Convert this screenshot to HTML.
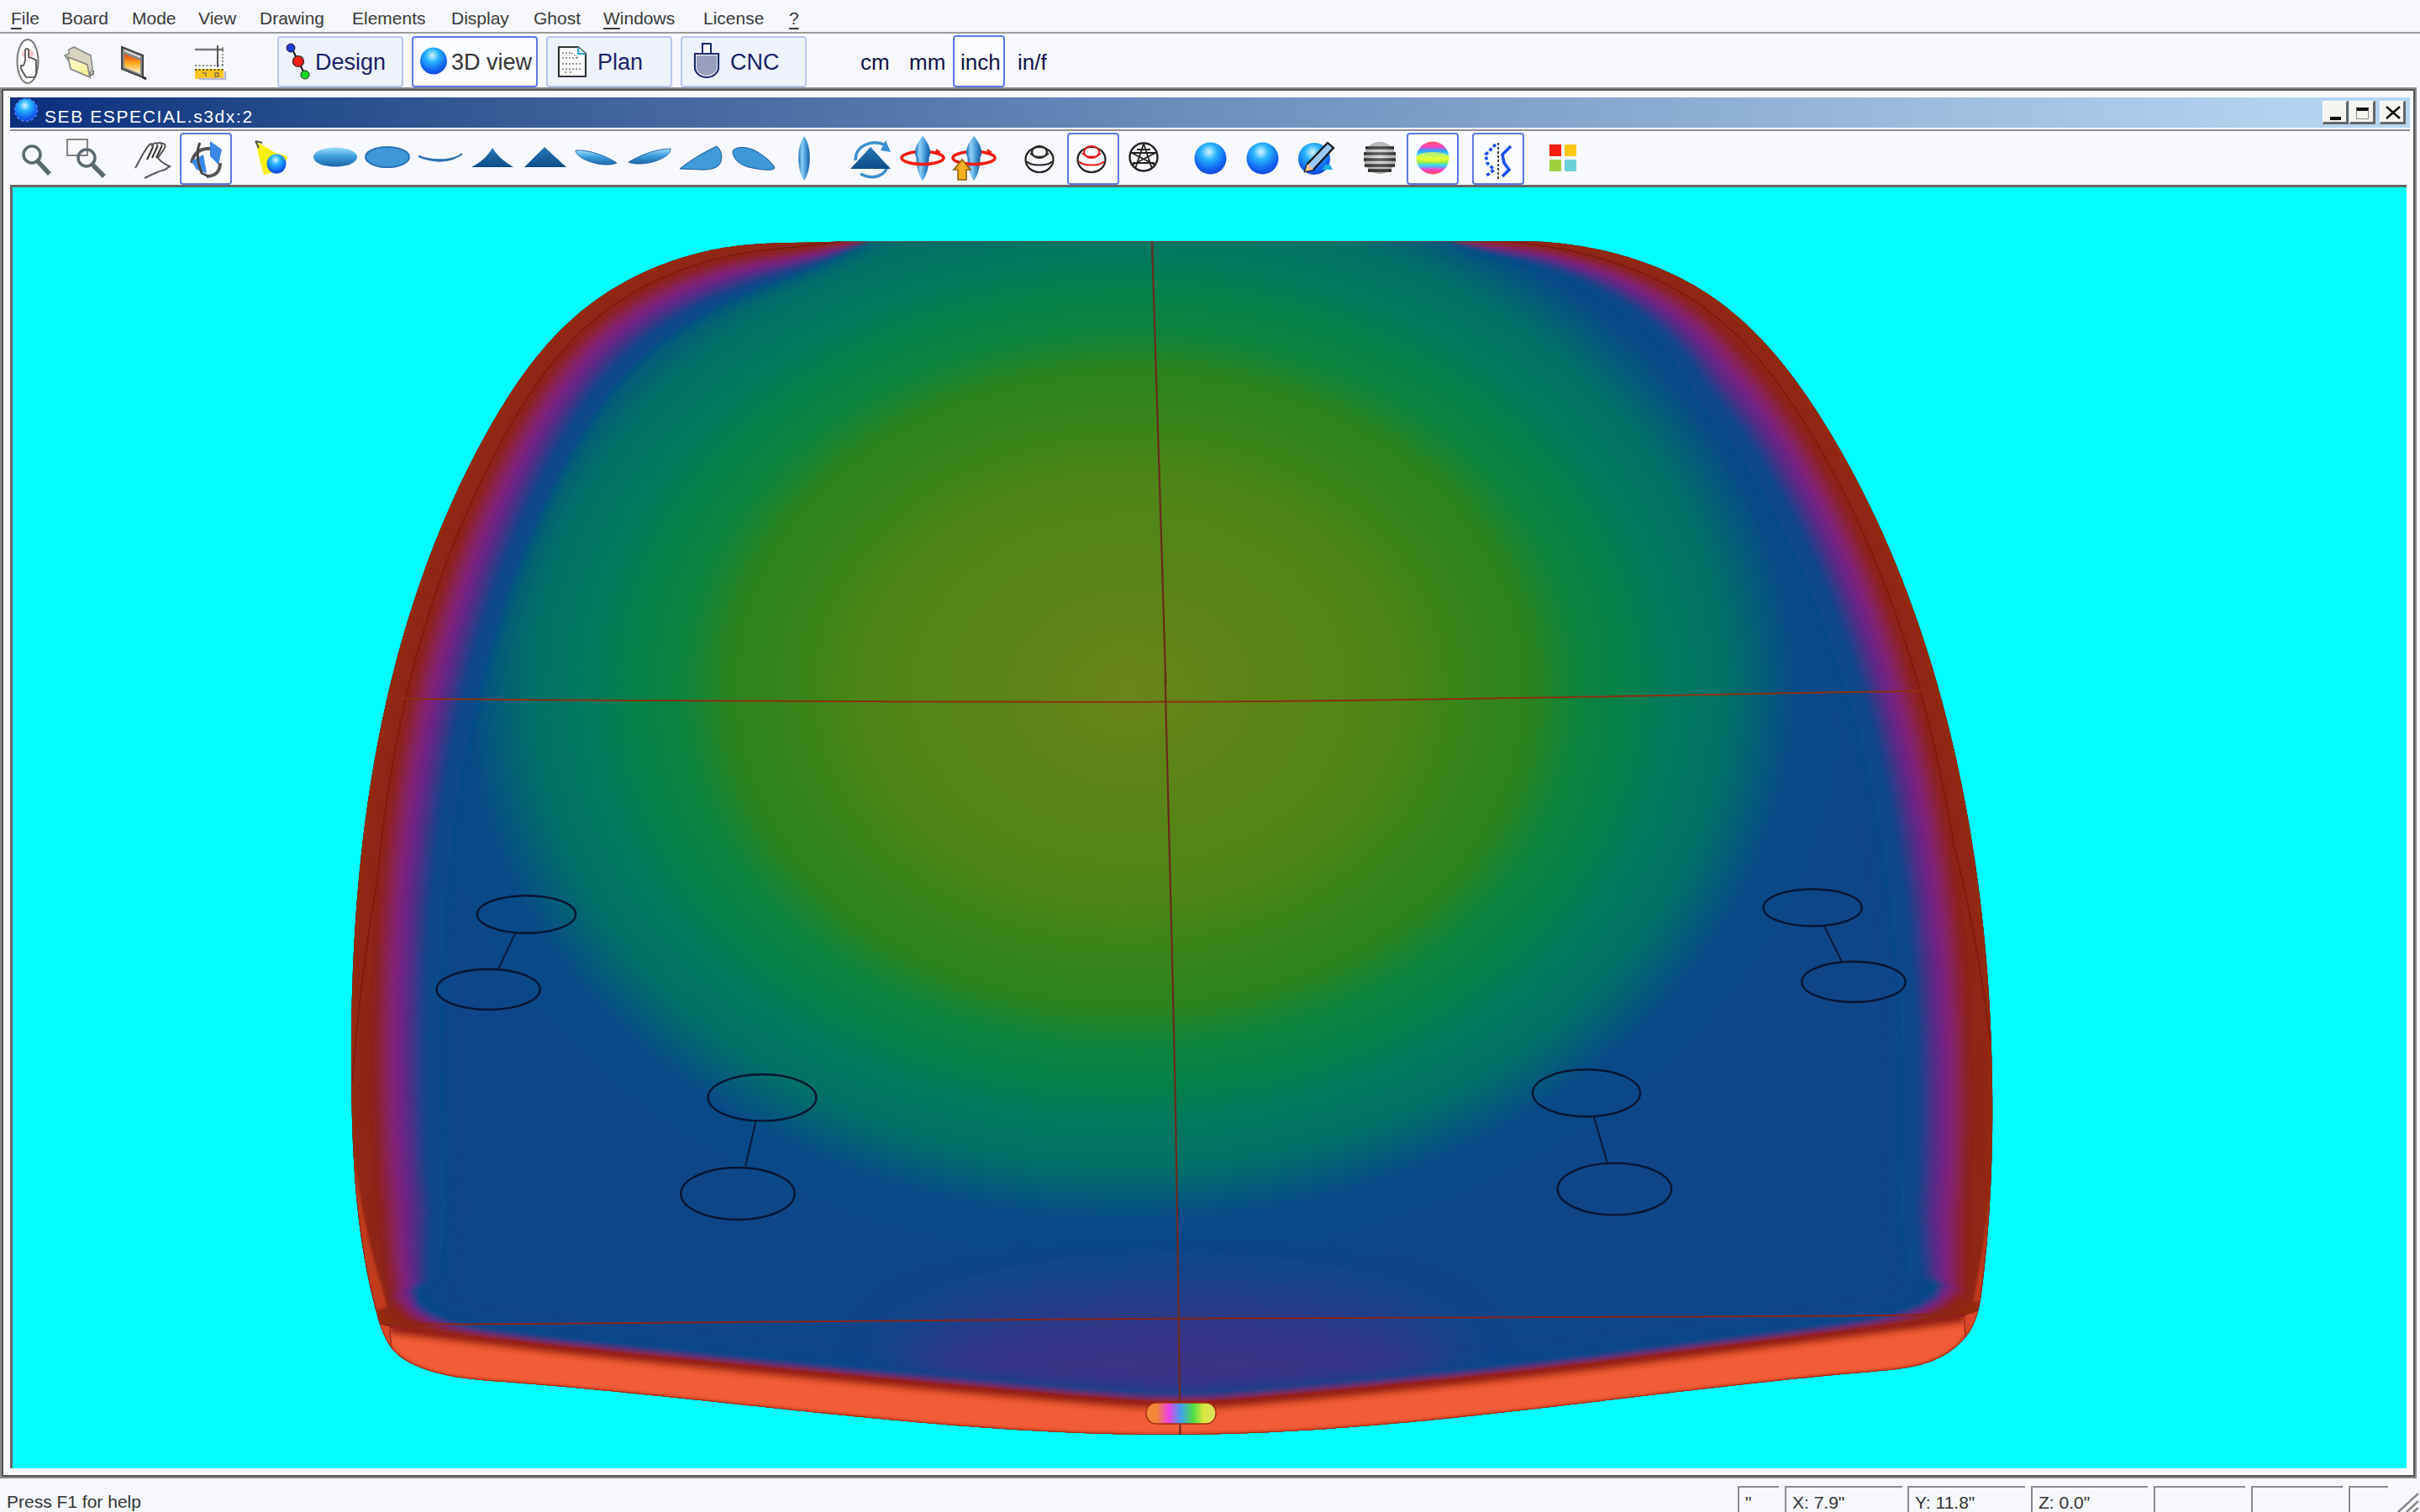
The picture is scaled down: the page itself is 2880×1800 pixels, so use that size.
<!DOCTYPE html>
<html><head><meta charset="utf-8"><style>
html,body{margin:0;padding:0;width:2880px;height:1800px;overflow:hidden;background:#f6f8fc;font-family:"Liberation Sans", sans-serif;}
u{text-decoration:underline;text-underline-offset:4px;text-decoration-thickness:2px}
.btn{position:absolute;box-sizing:border-box;border:2px solid #b8c6f0;border-radius:4px;background:#eef2fb}
.sel{position:absolute;box-sizing:border-box;border:2.5px solid #5a78e8;border-radius:4px;background:#fbfcff}
.wb{position:absolute;top:120px;width:31px;height:28px;box-sizing:border-box;background:#f6f4f0;border:1px solid #fff;border-right:3px solid #666;border-bottom:3px solid #666}
</style></head><body>

<svg width="0" height="0" style="position:absolute"><defs>
<radialGradient id="sph" cx="0.45" cy="0.3" r="0.7"><stop offset="0" stop-color="#d8f4ff"/><stop offset="0.35" stop-color="#28b4ff"/><stop offset="0.8" stop-color="#1060f0"/><stop offset="1" stop-color="#1448d8"/></radialGradient>
<linearGradient id="lens" x1="0" y1="0" x2="1" y2="0"><stop offset="0" stop-color="#1c6ab0"/><stop offset="0.3" stop-color="#8ed0f8"/><stop offset="0.7" stop-color="#3a90d0"/><stop offset="1" stop-color="#1a5a98"/></linearGradient>
<linearGradient id="ell" x1="0" y1="0" x2="0" y2="1"><stop offset="0" stop-color="#9ee0fc"/><stop offset="0.45" stop-color="#3ea0e0"/><stop offset="1" stop-color="#1c64a8"/></linearGradient>
<linearGradient id="tri" x1="0" y1="0" x2="0" y2="1"><stop offset="0" stop-color="#2a78b8"/><stop offset="1" stop-color="#0c4c88"/></linearGradient>
<radialGradient id="gray" cx="0.5" cy="0.45" r="0.6"><stop offset="0" stop-color="#eee"/><stop offset="1" stop-color="#333"/></radialGradient>
<linearGradient id="rainbow" x1="0" y1="0" x2="0" y2="1"><stop offset="0" stop-color="#ff6060"/><stop offset="0.15" stop-color="#ff40c0"/><stop offset="0.28" stop-color="#30a0ff"/><stop offset="0.42" stop-color="#40e0ff"/><stop offset="0.5" stop-color="#e0ff40"/><stop offset="0.62" stop-color="#a0f040"/><stop offset="0.74" stop-color="#30d0ff"/><stop offset="0.86" stop-color="#ff40d0"/><stop offset="1" stop-color="#ff5050"/></linearGradient>
<linearGradient id="fold" x1="0" y1="0" x2="1" y2="1"><stop offset="0" stop-color="#fffdd0"/><stop offset="1" stop-color="#f4ec90"/></linearGradient>
<linearGradient id="fire" x1="0" y1="0" x2="0" y2="1"><stop offset="0" stop-color="#e04010"/><stop offset="0.5" stop-color="#ffb020"/><stop offset="1" stop-color="#fff8e0"/></linearGradient>
</defs></svg>
<div style="position:absolute;left:0;top:38px;width:2880px;height:2px;background:#9a9a9a"></div>
<div style="position:absolute;left:13px;top:11px;font-size:21px;line-height:1;color:#3a3a3a;white-space:nowrap;"><u>F</u>ile</div><div style="position:absolute;left:73px;top:11px;font-size:21px;line-height:1;color:#3a3a3a;white-space:nowrap;">Board</div><div style="position:absolute;left:157px;top:11px;font-size:21px;line-height:1;color:#3a3a3a;white-space:nowrap;">Mode</div><div style="position:absolute;left:236px;top:11px;font-size:21px;line-height:1;color:#3a3a3a;white-space:nowrap;">View</div><div style="position:absolute;left:309px;top:11px;font-size:21px;line-height:1;color:#3a3a3a;white-space:nowrap;">Drawing</div><div style="position:absolute;left:419px;top:11px;font-size:21px;line-height:1;color:#3a3a3a;white-space:nowrap;">Elements</div><div style="position:absolute;left:537px;top:11px;font-size:21px;line-height:1;color:#3a3a3a;white-space:nowrap;">Display</div><div style="position:absolute;left:635px;top:11px;font-size:21px;line-height:1;color:#3a3a3a;white-space:nowrap;">Ghost</div><div style="position:absolute;left:718px;top:11px;font-size:21px;line-height:1;color:#3a3a3a;white-space:nowrap;"><u>W</u>indows</div><div style="position:absolute;left:837px;top:11px;font-size:21px;line-height:1;color:#3a3a3a;white-space:nowrap;">License</div><div style="position:absolute;left:939px;top:11px;font-size:21px;line-height:1;color:#3a3a3a;white-space:nowrap;"><u>?</u></div>
<div class="btn" style="left:330px;top:43px;width:150px;height:61px"></div>
<div class="sel" style="left:490px;top:43px;width:150px;height:61px"></div>
<div class="btn" style="left:650px;top:43px;width:150px;height:61px"></div>
<div class="btn" style="left:810px;top:43px;width:150px;height:61px"></div>
<svg style="position:absolute;left:18px;top:44px;" width="30" height="58" viewBox="0 0 30 58"><ellipse cx="15" cy="29" rx="12.5" ry="26" fill="#fbfbfd" stroke="#777" stroke-width="2"/><ellipse cx="15" cy="20" rx="7" ry="6" fill="#f8c8cc"/><path d="M12,28 v-12 a2,2 0 0 1 4,0 v8 l3,1 3,1 3,2 v16 l-2,4 h-10 l-6,-10 v-4 l3,0z" fill="#fff" stroke="#444" stroke-width="1.6" stroke-linejoin="round"/></svg><svg style="position:absolute;left:74px;top:52px;" width="40" height="42" viewBox="0 0 40 42"><path d="M3,14 L8,12 L8,7 L14,4 L34,14 L36,30 L33,36 L12,26 Z" fill="#d8d4c0" stroke="#888" stroke-width="1.6"/><path d="M7,16 L30,25 L33,40 L10,30 Z" fill="url(#fold)" stroke="#888" stroke-width="1.8"/><path d="M33,38 L37,36 L37,32" fill="none" stroke="#777" stroke-width="2"/></svg><svg style="position:absolute;left:142px;top:52px;" width="34" height="44" viewBox="0 0 34 44"><path d="M3,4 L28,14 L28,40 L3,30 Z" fill="#888" stroke="#444" stroke-width="2"/><path d="M6,12 L25,20 L25,36 L6,28 Z" fill="url(#fire)"/><path d="M6,8 L25,16" stroke="#ddd" stroke-width="2"/><path d="M28,40 L32,42" stroke="#222" stroke-width="3"/></svg><svg style="position:absolute;left:228px;top:52px;" width="42" height="44" viewBox="0 0 42 44"><path d="M4,7 H38" stroke="#777" stroke-width="2.4"/><path d="M31,2 V28" stroke="#555" stroke-width="2"/><path d="M37,4 V28" stroke="#666" stroke-width="1.4" stroke-dasharray="2 2"/><path d="M4,26 H38" stroke="#666" stroke-width="1.6" stroke-dasharray="2 2.5"/><rect x="4" y="30" width="34" height="12" fill="#f8c820"/><path d="M4,31 H38" stroke="#222" stroke-width="1.6" stroke-dasharray="2 2.5"/><path d="M9,42 H40 V33" fill="none" stroke="#b8b8d0" stroke-width="2.5"/><path d="M13,35 h4 v4 M28,35 h4 v4 h-4z" fill="none" stroke="#8a7040" stroke-width="1.5"/></svg><svg style="position:absolute;left:338px;top:50px;" width="32" height="46" viewBox="0 0 32 46"><path d="M9,7 L17,23 L25,39" stroke="#111" stroke-width="2"/><circle cx="8" cy="7" r="5" fill="#1a3ad8" stroke="#222" stroke-width="1"/><circle cx="17" cy="23" r="6.5" fill="#ff2018" stroke="#222" stroke-width="1.2"/><circle cx="25" cy="39" r="5" fill="#18d820" stroke="#222" stroke-width="1"/></svg><svg style="position:absolute;left:499px;top:55px;" width="34" height="35" viewBox="0 0 34 35"><circle cx="17" cy="17.5" r="16" fill="url(#sph)"/></svg><svg style="position:absolute;left:662px;top:52px;" width="38" height="42" viewBox="0 0 38 42"><path d="M3,4 H26 L35,12 V39 H3 Z" fill="#fff" stroke="#333" stroke-width="2.2"/><path d="M26,4 V12 H35" fill="#c8ecf8" stroke="#2aa0d0" stroke-width="1.8"/><path d="M7,11 H17 M18,11 l8,6 M7,17 h18 M7,24 h22 M7,30 h22 M10,34 h3 M16,34 h3" stroke="#777" stroke-width="1.3" stroke-dasharray="2 2"/></svg><svg style="position:absolute;left:824px;top:50px;" width="34" height="44" viewBox="0 0 34 44"><rect x="12" y="2" width="10" height="12" fill="#fff" stroke="#1a2a6a" stroke-width="2"/><path d="M3,14 H31 V30 A14,12 0 0 1 3,30 Z" fill="#fff" stroke="#1a2a6a" stroke-width="2.2"/><path d="M5,16 H29 V30 A12,10 0 0 1 5,30 Z" fill="#1a2a6a" opacity="0.45"/></svg>
<div style="position:absolute;left:375px;top:61px;font-size:27px;line-height:1;color:#1a1f6a;white-space:nowrap;">Design</div>
<div style="position:absolute;left:537px;top:61px;font-size:27px;line-height:1;color:#333;white-space:nowrap;">3D view</div>
<div style="position:absolute;left:711px;top:61px;font-size:27px;line-height:1;color:#1a1f6a;white-space:nowrap;">Plan</div>
<div style="position:absolute;left:869px;top:61px;font-size:27px;line-height:1;color:#1a1f6a;white-space:nowrap;">CNC</div>
<div class="sel" style="left:1134px;top:42px;width:62px;height:62px"></div>
<div style="position:absolute;left:1024px;top:61px;font-size:26px;line-height:1;color:#10104a;white-space:nowrap;">cm</div>
<div style="position:absolute;left:1082px;top:61px;font-size:26px;line-height:1;color:#10104a;white-space:nowrap;">mm</div>
<div style="position:absolute;left:1143px;top:61px;font-size:26px;line-height:1;color:#10104a;white-space:nowrap;">inch</div>
<div style="position:absolute;left:1211px;top:61px;font-size:26px;line-height:1;color:#10104a;white-space:nowrap;">in/f</div>
<div style="position:absolute;left:0;top:104px;width:2876px;height:1656px;box-sizing:border-box;border:2px solid #8a8a8a;background:#f7f9fd"></div>
<div style="position:absolute;left:2px;top:106px;width:2872px;height:1652px;box-sizing:border-box;border:2px solid #555"></div>
<div style="position:absolute;left:12px;top:116px;width:2856px;height:36px;background:linear-gradient(90deg,#0b2e7e 0%,#224a8a 10.8%,#3e629a 24.4%,#6c8fbe 50%,#92b3d7 73.5%,#b2d2ef 94.8%,#b6d6f2 100%)"></div>
<svg style="position:absolute;left:15px;top:116px;" width="34" height="32" viewBox="0 0 34 32"><circle cx="16" cy="15" r="13.5" fill="url(#sph)" stroke="#5a80f0" stroke-width="1.5" stroke-dasharray="3 3"/></svg>
<div style="position:absolute;left:53px;top:128px;font-size:21px;line-height:1;color:#fff;white-space:nowrap;letter-spacing:1.6px">SEB ESPECIAL.s3dx:2</div>
<div class="wb" style="left:2764px"></div><div style="position:absolute;left:2773px;top:139px;width:13px;height:4px;background:#111"></div><div class="wb" style="left:2796px"></div><div style="position:absolute;left:2804px;top:128px;width:15px;height:14px;box-sizing:border-box;border:1.5px solid #888;border-top:4px solid #111"></div><div class="wb" style="left:2832px"></div><svg style="position:absolute;left:2838px;top:125px;" width="20" height="18" viewBox="0 0 20 18"><path d="M2,2 L18,16 M18,2 L2,16" stroke="#111" stroke-width="2.6"/></svg>
<div style="position:absolute;left:12px;top:154px;width:2856px;height:2px;background:#8e8e8e"></div>
<svg style="position:absolute;left:24px;top:168px;" width="38" height="44" viewBox="0 0 38 44"><circle cx="14" cy="16" r="10" fill="none" stroke="#5a6a70" stroke-width="3.5"/><path d="M21,24 L33,37" stroke="#5a6a70" stroke-width="5.5" stroke-linecap="square"/></svg><svg style="position:absolute;left:78px;top:164px;" width="50" height="50" viewBox="0 0 50 50"><rect x="2" y="2" width="24" height="19" fill="none" stroke="#777" stroke-width="1.8"/><circle cx="25" cy="24" r="10" fill="none" stroke="#5a6a70" stroke-width="3.5"/><path d="M32,32 L44,44" stroke="#5a6a70" stroke-width="5.5" stroke-linecap="square"/></svg><svg style="position:absolute;left:158px;top:166px;" width="50" height="50" viewBox="0 0 50 50"><path d="M3,34 C10,22 14,12 20,6 C23,4 25,6 24,9 M22,8 C25,4 28,3 30,6 M28,6 C31,3 34,3 35,6 M33,6 C36,4 40,5 38,10 L30,22 C34,28 40,30 44,32 L38,36 C30,38 22,42 14,46" fill="none" stroke="#555" stroke-width="2"/><path d="M24,9 L17,24 M30,7 L23,22 M35,7 L28,22" stroke="#333" stroke-width="2"/></svg><div class="sel" style="left:214px;top:158px;width:62px;height:62px"></div><svg style="position:absolute;left:222px;top:164px;" width="46" height="50" viewBox="0 0 46 50"><path d="M6,30 C8,20 14,14 24,13 L38,13" fill="none" stroke="#555" stroke-width="4"/><path d="M28,4 L42,14 L38,32 L28,22 Z" fill="#3a88e8"/><path d="M40,30 C40,40 34,46 24,46" fill="none" stroke="#555" stroke-width="4"/><path d="M6,28 L20,20 L24,42 L12,38 Z" fill="#3a88e8"/><path d="M16,6 C12,14 12,28 18,42 L26,46" fill="none" stroke="#444" stroke-width="3"/></svg><svg style="position:absolute;left:298px;top:164px;" width="48" height="48" viewBox="0 0 48 48"><path d="M6,4 L30,18 L44,22 L40,38 L16,44 L12,30 Z" fill="#f8f010"/><path d="M6,4 L10,12 M6,4 L14,6" stroke="#555" stroke-width="2"/><circle cx="31" cy="31" r="11.5" fill="url(#sph)"/></svg><svg style="position:absolute;left:372px;top:174px;" width="58" height="30" viewBox="0 0 58 30"><ellipse cx="27" cy="13" rx="26" ry="11.5" fill="url(#ell)"/></svg><svg style="position:absolute;left:434px;top:174px;" width="58" height="30" viewBox="0 0 58 30"><ellipse cx="27" cy="13" rx="26" ry="12" fill="#3e98d8"/><ellipse cx="27" cy="13" rx="26" ry="12" fill="none" stroke="#2a74b8" stroke-width="2"/></svg><svg style="position:absolute;left:496px;top:180px;" width="58" height="16" viewBox="0 0 58 16"><path d="M2,6 C20,14 40,14 54,3 C44,12 20,12 2,6 Z" fill="#3a8ed0" stroke="#2a70b0" stroke-width="2"/></svg><svg style="position:absolute;left:559px;top:174px;" width="56" height="28" viewBox="0 0 56 28"><path d="M2,25 C16,18 22,10 27,2 C32,10 40,18 52,25 Z" fill="url(#tri)"/></svg><svg style="position:absolute;left:622px;top:173px;" width="56" height="29" viewBox="0 0 56 29"><path d="M2,26 L26,2 L52,26 Z" fill="url(#tri)"/></svg><svg style="position:absolute;left:682px;top:176px;" width="56" height="24" viewBox="0 0 56 24"><path d="M3,3 C20,2 40,10 52,18 C44,22 26,20 14,14 C6,10 3,6 3,3 Z" fill="url(#ell)" stroke="#2a6aa8" stroke-width="1"/></svg><svg style="position:absolute;left:745px;top:175px;" width="56" height="24" viewBox="0 0 56 24"><path d="M53,2 C36,2 16,10 3,18 C12,22 30,20 42,14 C50,10 53,6 53,2 Z" fill="url(#ell)" stroke="#2a6aa8" stroke-width="1"/></svg><svg style="position:absolute;left:806px;top:172px;" width="58" height="34" viewBox="0 0 58 34"><path d="M3,29 C16,18 34,8 47,2 C52,6 54,14 52,20 C50,28 40,30 30,30 Z" fill="#3e9ad8" stroke="#1a5a98" stroke-width="1"/></svg><svg style="position:absolute;left:870px;top:172px;" width="58" height="34" viewBox="0 0 58 34"><path d="M2,8 C4,2 20,2 30,8 C40,14 50,22 52,28 C50,32 36,30 26,28 C12,26 2,18 2,8 Z" fill="#3e98d8" stroke="#1a5a98" stroke-width="1"/></svg><svg style="position:absolute;left:944px;top:160px;" width="28" height="58" viewBox="0 0 28 58"><path d="M13,2 C22,14 22,42 13,55 C4,42 4,14 13,2 Z" fill="url(#lens)"/></svg><svg style="position:absolute;left:1010px;top:163px;" width="56" height="52" viewBox="0 0 56 52"><path d="M8,28 C8,10 28,2 44,10" fill="none" stroke="#3a90d0" stroke-width="3.5"/><path d="M44,4 L50,18 L38,16 Z" fill="#3a90d0"/><path d="M46,34 C44,46 30,52 14,44" fill="none" stroke="#3a90d0" stroke-width="3.5"/><path d="M2,38 L26,12 L50,38 Z" fill="url(#tri)"/></svg><svg style="position:absolute;left:1070px;top:160px;" width="60" height="58" viewBox="0 0 60 58"><path d="M28,2 C38,14 38,42 28,55 C18,42 18,14 28,2 Z" fill="url(#lens)"/><ellipse cx="28" cy="28" rx="25" ry="7.5" fill="none" stroke="#f01c10" stroke-width="3.6"/><path d="M28,2 C38,14 38,22 36,27 L20,27 C18,22 18,14 28,2 Z" fill="url(#lens)"/><path d="M44,17 l6,4 l-7,3z" fill="#f01c10"/></svg><svg style="position:absolute;left:1131px;top:160px;" width="60" height="58" viewBox="0 0 60 58"><path d="M28,2 C38,14 38,42 28,55 C18,42 18,14 28,2 Z" fill="url(#lens)"/><ellipse cx="28" cy="28" rx="25" ry="7.5" fill="none" stroke="#f01c10" stroke-width="3.6"/><path d="M28,2 C38,14 38,22 36,27 L20,27 C18,22 18,14 28,2 Z" fill="url(#lens)"/><path d="M44,17 l6,4 l-7,3z" fill="#f01c10"/><path d="M4,42 L14,30 L24,42 L19,42 L19,54 L9,54 L9,42 Z" fill="#f8b020" stroke="#906010" stroke-width="1.6"/></svg><svg style="position:absolute;left:1218px;top:168px;" width="40" height="40" viewBox="0 0 40 40"><ellipse cx="19" cy="22" rx="16.5" ry="15" fill="none" stroke="#222" stroke-width="2.2"/><ellipse cx="19" cy="13" rx="9" ry="7" fill="none" stroke="#222" stroke-width="2.2"/><path d="M4,24 C8,30 30,30 34,24" fill="none" stroke="#222" stroke-width="2.2"/><path d="M8,14 C10,20 28,20 30,14" fill="none" stroke="#333" stroke-width="1.6"/></svg><div class="sel" style="left:1270px;top:158px;width:62px;height:62px"></div><svg style="position:absolute;left:1280px;top:168px;" width="40" height="40" viewBox="0 0 40 40"><ellipse cx="19" cy="22" rx="16.5" ry="15" fill="none" stroke="#222" stroke-width="2.2"/><ellipse cx="19" cy="13" rx="9" ry="7" fill="none" stroke="#e81818" stroke-width="2"/><path d="M4,24 C8,30 30,30 34,24" fill="none" stroke="#e81818" stroke-width="2"/><path d="M8,14 C10,20 28,20 30,14" fill="none" stroke="#e81818" stroke-width="1.6"/></svg><svg style="position:absolute;left:1342px;top:168px;" width="40" height="40" viewBox="0 0 40 40"><circle cx="19" cy="19" r="16.5" fill="none" stroke="#222" stroke-width="2.4"/><path d="M4,14 H34 M6,26 H32 M19,3 L9,33 M19,3 L29,33 M5,14 L32,28 M33,14 L6,28 M11,10 L27,10" stroke="#222" stroke-width="1.8" fill="none"/></svg><svg style="position:absolute;left:1420px;top:168px;" width="42" height="42" viewBox="0 0 42 42"><circle cx="20.5" cy="20.5" r="19" fill="url(#sph)"/></svg><svg style="position:absolute;left:1482px;top:168px;" width="42" height="42" viewBox="0 0 42 42"><circle cx="20.5" cy="20.5" r="19" fill="url(#sph)"/></svg><svg style="position:absolute;left:1543px;top:164px;" width="50" height="46" viewBox="0 0 50 46"><circle cx="21" cy="25" r="19" fill="url(#sph)"/><path d="M37,6 L44,12 L20,38 L10,40 L13,31 Z" fill="#9ac8f8" stroke="#111" stroke-width="2.2"/><path d="M13,31 L20,38 L10,40Z" fill="#f8c898"/><path d="M18,38 h12 l4,-6 h6 l3,6 h-25z" fill="#1ab0e0"/></svg><svg style="position:absolute;left:1621px;top:166px;" width="44" height="45" viewBox="0 0 44 45"><circle cx="21" cy="22" r="19" fill="#ddd"/><path d="M4,10 H38 M2,17 H40 M2,24 H40 M3,31 H39 M7,37 H35" stroke="#222" stroke-width="3.6"/><circle cx="21" cy="22" r="19" fill="url(#gray)" opacity="0.35"/></svg><div class="sel" style="left:1674px;top:158px;width:62px;height:62px"></div><svg style="position:absolute;left:1683px;top:166px;" width="44" height="44" viewBox="0 0 44 44"><circle cx="22" cy="22" r="19.5" fill="url(#rainbow)"/><ellipse cx="22" cy="21" rx="19.5" ry="6" fill="#e8ff30" opacity="0.7"/></svg><div class="sel" style="left:1752px;top:158px;width:62px;height:62px"></div><svg style="position:absolute;left:1760px;top:168px;" width="46" height="46" viewBox="0 0 46 46"><path d="M20,4 L8,16 L10,26 L18,34 L8,42" fill="none" stroke="#1a50e8" stroke-width="3.6" stroke-dasharray="4 2.5"/><path d="M23,2 V46" stroke="#111" stroke-width="1.6" stroke-dasharray="3 2"/><path d="M38,6 L28,16 L30,26 L36,34 L28,42" fill="none" stroke="#1a50e8" stroke-width="3.6"/></svg><div style="position:absolute;left:1844px;top:172px;width:14px;height:14px;background:#f81c10"></div><div style="position:absolute;left:1862px;top:172px;width:14px;height:14px;background:#fcc818"></div><div style="position:absolute;left:1844px;top:190px;width:14px;height:14px;background:#a0d040"></div><div style="position:absolute;left:1862px;top:190px;width:14px;height:14px;background:#6cd0d8"></div>
<div style="position:absolute;left:12px;top:220px;width:2852px;height:1528px;box-sizing:border-box;border-left:3px solid #666;border-top:3px solid #666"></div>


<svg width="2880" height="1800" viewBox="0 0 2880 1800" style="position:absolute;left:0;top:0" xmlns="http://www.w3.org/2000/svg">
<defs>
 <clipPath id="vp"><rect x="15" y="223" width="2849" height="1525"/></clipPath>
 <clipPath id="bc"><path d="M1790.0,287.2L1793.0,287.1 1795.9,287.0 1798.9,287.0 1801.8,287.0 1804.8,286.9 1807.8,286.9 1810.8,287.0 1813.7,287.0 1816.7,287.1 1819.7,287.2 1822.7,287.3 1825.7,287.4 1828.7,287.5 1831.7,287.7 1834.7,287.8 1837.7,288.0 1840.7,288.3 1843.7,288.5 1846.7,288.7 1849.7,289.0 1852.7,289.3 1855.7,289.6 1858.7,289.9 1861.7,290.3 1864.7,290.7 1867.7,291.1 1870.7,291.5 1873.7,291.9 1876.7,292.4 1879.7,292.8 1882.7,293.3 1885.7,293.8 1888.6,294.4 1891.6,294.9 1894.6,295.5 1897.6,296.1 1900.5,296.7 1903.5,297.3 1906.5,298.0 1909.4,298.6 1912.4,299.3 1915.3,300.0 1918.3,300.8 1921.2,301.5 1924.1,302.3 1927.0,303.1 1930.0,303.9 1932.9,304.7 1935.8,305.6 1938.7,306.5 1941.6,307.4 1944.4,308.3 1947.3,309.2 1950.2,310.2 1953.0,311.2 1955.9,312.2 1958.7,313.2 1961.5,314.2 1964.3,315.3 1967.2,316.4 1970.0,317.5 1972.7,318.6 1975.5,319.8 1978.3,321.0 1981.0,322.2 1983.8,323.4 1986.5,324.6 1989.2,325.9 1991.9,327.1 1994.6,328.4 1997.3,329.8 2000.0,331.1 2002.7,332.5 2005.3,333.9 2007.9,335.3 2010.5,336.7 2013.1,338.2 2015.7,339.6 2018.3,341.1 2020.9,342.7 2023.4,344.2 2025.9,345.8 2028.4,347.4 2030.9,349.0 2033.4,350.6 2035.9,352.3 2038.3,353.9 2040.8,355.6 2043.2,357.4 2045.6,359.1 2048.0,360.9 2050.3,362.6 2052.7,364.4 2055.0,366.3 2057.3,368.1 2059.6,370.0 2061.9,371.9 2064.2,373.8 2066.5,375.7 2068.7,377.6 2070.9,379.6 2073.1,381.6 2075.3,383.6 2077.5,385.6 2079.7,387.6 2081.9,389.7 2084.0,391.7 2086.1,393.8 2088.2,395.9 2090.3,398.0 2092.4,400.2 2094.5,402.3 2096.6,404.5 2098.6,406.7 2100.6,408.8 2102.7,411.1 2104.7,413.3 2106.7,415.5 2108.6,417.8 2110.6,420.0 2112.6,422.3 2114.5,424.6 2116.5,426.9 2118.4,429.2 2120.3,431.6 2122.2,433.9 2124.1,436.2 2125.9,438.6 2127.8,441.0 2129.6,443.4 2131.5,445.8 2133.3,448.2 2135.1,450.6 2136.9,453.0 2138.7,455.5 2140.5,457.9 2142.3,460.4 2144.0,462.9 2145.8,465.3 2147.5,467.8 2149.2,470.3 2151.0,472.8 2152.7,475.3 2154.4,477.9 2156.1,480.4 2157.7,482.9 2159.4,485.4 2161.1,488.0 2162.7,490.5 2164.4,493.1 2166.0,495.7 2167.6,498.2 2169.2,500.8 2170.8,503.4 2172.4,506.0 2174.0,508.6 2175.6,511.2 2177.2,513.8 2178.7,516.4 2180.3,519.0 2181.8,521.6 2183.4,524.2 2184.9,526.8 2186.4,529.4 2188.0,532.0 2189.5,534.7 2191.0,537.3 2192.5,539.9 2193.9,542.6 2195.4,545.2 2196.9,547.8 2198.4,550.5 2199.8,553.1 2201.3,555.8 2202.7,558.4 2204.1,561.1 2205.5,563.7 2207.0,566.4 2208.4,569.1 2209.8,571.7 2211.2,574.4 2212.5,577.1 2213.9,579.7 2215.3,582.4 2216.7,585.1 2218.0,587.8 2219.4,590.5 2220.7,593.2 2222.0,595.8 2223.4,598.5 2224.7,601.2 2226.0,603.9 2227.3,606.6 2228.6,609.4 2229.9,612.1 2231.2,614.8 2232.5,617.5 2233.7,620.2 2235.0,622.9 2236.2,625.6 2237.5,628.4 2238.7,631.1 2240.0,633.8 2241.2,636.6 2242.4,639.3 2243.6,642.0 2244.8,644.8 2246.0,647.5 2247.2,650.3 2248.4,653.0 2249.6,655.8 2250.7,658.5 2251.9,661.3 2253.1,664.0 2254.2,666.8 2255.4,669.6 2256.5,672.3 2257.6,675.1 2258.7,677.9 2259.9,680.7 2261.0,683.4 2262.1,686.2 2263.2,689.0 2264.3,691.8 2265.3,694.6 2266.4,697.4 2267.5,700.2 2268.6,702.9 2269.6,705.7 2270.7,708.5 2271.7,711.3 2272.7,714.2 2273.8,717.0 2274.8,719.8 2275.8,722.6 2276.8,725.4 2277.8,728.2 2278.8,731.0 2279.8,733.8 2280.8,736.7 2281.8,739.5 2282.8,742.3 2283.7,745.1 2284.7,748.0 2285.7,750.8 2286.6,753.6 2287.6,756.5 2288.5,759.3 2289.4,762.2 2290.4,765.0 2291.3,767.9 2292.2,770.7 2293.1,773.6 2294.0,776.4 2294.9,779.3 2295.8,782.1 2296.7,785.0 2297.5,787.8 2298.4,790.7 2299.3,793.6 2300.1,796.4 2301.0,799.3 2301.8,802.2 2302.7,805.1 2303.5,807.9 2304.4,810.8 2305.2,813.7 2306.0,816.6 2306.8,819.5 2307.6,822.3 2308.4,825.2 2309.2,828.1 2310.0,831.0 2310.8,833.9 2311.6,836.8 2312.4,839.7 2313.1,842.6 2313.9,845.5 2314.7,848.4 2315.4,851.3 2316.2,854.2 2316.9,857.1 2317.6,860.0 2318.4,862.9 2319.1,865.8 2319.8,868.8 2320.5,871.7 2321.2,874.6 2321.9,877.5 2322.6,880.4 2323.3,883.3 2324.0,886.3 2324.7,889.2 2325.4,892.1 2326.0,895.1 2326.7,898.0 2327.4,900.9 2328.0,903.8 2328.7,906.8 2329.3,909.7 2329.9,912.6 2330.6,915.6 2331.2,918.5 2331.8,921.5 2332.4,924.4 2333.0,927.4 2333.7,930.3 2334.3,933.2 2334.9,936.2 2335.4,939.1 2336.0,942.1 2336.6,945.0 2337.2,948.0 2337.7,950.9 2338.3,953.9 2338.9,956.9 2339.4,959.8 2340.0,962.8 2340.5,965.7 2341.1,968.7 2341.6,971.7 2342.1,974.6 2342.6,977.6 2343.1,980.5 2343.7,983.5 2344.2,986.5 2344.7,989.4 2345.2,992.4 2345.7,995.4 2346.1,998.4 2346.6,1001.3 2347.1,1004.3 2347.6,1007.3 2348.0,1010.2 2348.5,1013.2 2349.0,1016.2 2349.4,1019.2 2349.9,1022.2 2350.3,1025.1 2350.7,1028.1 2351.2,1031.1 2351.6,1034.1 2352.0,1037.1 2352.4,1040.0 2352.8,1043.0 2353.3,1046.0 2353.7,1049.0 2354.1,1052.0 2354.4,1055.0 2354.8,1058.0 2355.2,1060.9 2355.6,1063.9 2356.0,1066.9 2356.3,1069.9 2356.7,1072.9 2357.1,1075.9 2357.4,1078.9 2357.8,1081.9 2358.1,1084.9 2358.4,1087.9 2358.8,1090.8 2359.1,1093.8 2359.4,1096.8 2359.8,1099.8 2360.1,1102.8 2360.4,1105.8 2360.7,1108.8 2361.0,1111.8 2361.3,1114.8 2361.6,1117.8 2361.9,1120.8 2362.2,1123.8 2362.4,1126.8 2362.7,1129.8 2363.0,1132.8 2363.2,1135.8 2363.5,1138.8 2363.8,1141.8 2364.0,1144.8 2364.3,1147.8 2364.5,1150.8 2364.7,1153.8 2365.0,1156.8 2365.2,1159.8 2365.4,1162.8 2365.6,1165.8 2365.9,1168.8 2366.1,1171.8 2366.3,1174.8 2366.5,1177.8 2366.7,1180.8 2366.9,1183.8 2367.1,1186.8 2367.2,1189.8 2367.4,1192.8 2367.6,1195.8 2367.8,1198.8 2367.9,1201.8 2368.1,1204.8 2368.3,1207.8 2368.4,1210.8 2368.6,1213.8 2368.7,1216.8 2368.9,1219.8 2369.0,1222.8 2369.1,1225.8 2369.3,1228.8 2369.4,1231.8 2369.5,1234.8 2369.6,1237.8 2369.7,1240.8 2369.8,1243.8 2369.9,1246.8 2370.0,1249.8 2370.1,1252.8 2370.2,1255.7 2370.3,1258.7 2370.4,1261.7 2370.5,1264.7 2370.6,1267.7 2370.6,1270.7 2370.7,1273.7 2370.8,1276.7 2370.8,1279.7 2370.9,1282.7 2370.9,1285.7 2371.0,1288.7 2371.0,1291.7 2371.0,1294.6 2371.1,1297.6 2371.1,1300.6 2371.1,1303.6 2371.2,1306.6 2371.2,1309.6 2371.2,1312.6 2371.2,1315.6 2371.2,1318.5 2371.2,1321.5 2371.2,1324.5 2371.2,1327.5 2371.2,1330.5 2371.2,1333.5 2371.2,1336.4 2371.1,1339.4 2371.1,1342.4 2371.1,1345.4 2371.0,1348.4 2371.0,1351.4 2370.9,1354.3 2370.9,1357.3 2370.8,1360.3 2370.8,1363.3 2370.7,1366.3 2370.6,1369.3 2370.6,1372.2 2370.5,1375.2 2370.4,1378.2 2370.3,1381.2 2370.2,1384.2 2370.1,1387.2 2370.0,1390.2 2369.9,1393.1 2369.8,1396.1 2369.7,1399.1 2369.6,1402.1 2369.4,1405.1 2369.3,1408.1 2369.2,1411.1 2369.0,1414.1 2368.9,1417.1 2368.7,1420.1 2368.5,1423.1 2368.4,1426.1 2368.2,1429.1 2368.0,1432.1 2367.9,1435.1 2367.7,1438.1 2367.5,1441.1 2367.3,1444.1 2367.1,1447.1 2366.9,1450.1 2366.6,1453.1 2366.4,1456.1 2366.2,1459.1 2366.0,1462.1 2365.7,1465.2 2365.5,1468.2 2365.2,1471.2 2365.0,1474.2 2364.7,1477.2 2364.5,1480.3 2364.2,1483.3 2363.9,1486.3 2363.6,1489.3 2363.3,1492.4 2363.0,1495.4 2362.7,1498.4 2362.4,1501.5 2362.1,1504.5 2361.8,1507.6 2361.5,1510.6 2361.1,1513.7 2360.8,1516.7 2360.4,1519.8 2360.1,1522.8 2359.7,1525.9 2359.4,1528.9 2359.0,1532.0 2358.6,1535.1 2358.2,1538.1 2357.8,1541.2 2357.3,1544.2 2356.9,1547.2 2356.3,1550.3 2355.8,1553.3 2355.2,1556.2 2354.5,1559.2 2353.7,1562.1 2352.9,1565.0 2352.0,1567.8 2351.1,1570.6 2350.0,1573.3 2348.8,1576.0 2347.6,1578.7 2346.2,1581.3 2344.7,1583.8 2343.2,1586.3 2341.5,1588.7 2339.7,1591.0 2337.8,1593.3 2335.9,1595.5 2333.9,1597.7 2331.8,1599.8 2329.6,1601.8 2327.4,1603.7 2325.1,1605.6 2322.8,1607.3 2320.4,1609.0 2318.0,1610.7 2315.5,1612.2 2313.0,1613.7 2310.5,1615.0 2307.9,1616.4 2305.3,1617.6 2302.7,1618.8 2300.0,1619.9 2297.4,1620.9 2294.6,1621.9 2291.9,1622.8 2289.2,1623.6 2286.4,1624.4 2283.6,1625.2 2280.7,1625.8 2277.9,1626.5 2275.0,1627.1 2272.1,1627.7 2269.2,1628.2 2266.3,1628.7 2263.4,1629.1 2260.4,1629.5 2257.5,1629.9 2254.5,1630.3 2251.5,1630.7 2248.5,1631.0 2245.5,1631.3 2242.5,1631.6 2239.5,1631.9 2236.5,1632.1 2233.5,1632.4 2230.5,1632.6 2227.5,1632.9 2224.4,1633.2 2221.4,1633.4 2218.4,1633.7 2215.4,1633.9 2212.3,1634.2 2209.3,1634.5 2206.3,1634.7 2203.3,1635.0 2200.3,1635.3 2197.2,1635.5 2194.2,1635.8 2191.2,1636.1 2188.2,1636.4 2185.2,1636.7 2182.1,1636.9 2179.1,1637.2 2176.1,1637.5 2173.1,1637.8 2170.1,1638.1 2167.1,1638.4 2164.0,1638.7 2161.0,1639.0 2158.0,1639.3 2155.0,1639.6 2152.0,1639.9 2149.0,1640.2 2145.9,1640.5 2142.9,1640.8 2139.9,1641.1 2136.9,1641.4 2133.9,1641.7 2130.9,1642.0 2127.9,1642.3 2124.9,1642.6 2121.8,1642.9 2118.8,1643.3 2115.8,1643.6 2112.8,1643.9 2109.8,1644.2 2106.8,1644.5 2103.8,1644.9 2100.8,1645.2 2097.7,1645.5 2094.7,1645.8 2091.7,1646.2 2088.7,1646.5 2085.7,1646.8 2082.7,1647.2 2079.7,1647.5 2076.7,1647.8 2073.7,1648.2 2070.7,1648.5 2067.7,1648.8 2064.7,1649.2 2061.6,1649.5 2058.6,1649.8 2055.6,1650.2 2052.6,1650.5 2049.6,1650.9 2046.6,1651.2 2043.6,1651.5 2040.6,1651.9 2037.6,1652.2 2034.6,1652.6 2031.6,1652.9 2028.6,1653.3 2025.6,1653.6 2022.6,1654.0 2019.6,1654.3 2016.6,1654.7 2013.6,1655.0 2010.6,1655.4 2007.6,1655.7 2004.6,1656.1 2001.6,1656.4 1998.5,1656.8 1995.5,1657.1 1992.5,1657.5 1989.5,1657.8 1986.5,1658.2 1983.5,1658.6 1980.5,1658.9 1977.5,1659.3 1974.5,1659.6 1971.5,1660.0 1968.5,1660.3 1965.5,1660.7 1962.5,1661.0 1959.5,1661.4 1956.5,1661.8 1953.5,1662.1 1950.5,1662.5 1947.5,1662.8 1944.5,1663.2 1941.5,1663.6 1938.5,1663.9 1935.5,1664.3 1932.6,1664.6 1929.6,1665.0 1926.6,1665.3 1923.6,1665.7 1920.6,1666.1 1917.6,1666.4 1914.6,1666.8 1911.6,1667.1 1908.6,1667.5 1905.6,1667.9 1902.6,1668.2 1899.6,1668.6 1896.6,1668.9 1893.6,1669.3 1890.6,1669.6 1887.6,1670.0 1884.6,1670.4 1881.6,1670.7 1878.6,1671.1 1875.6,1671.4 1872.6,1671.8 1869.6,1672.1 1866.6,1672.5 1863.6,1672.8 1860.7,1673.2 1857.7,1673.5 1854.7,1673.9 1851.7,1674.2 1848.7,1674.6 1845.7,1674.9 1842.7,1675.3 1839.7,1675.6 1836.7,1676.0 1833.7,1676.3 1830.7,1676.7 1827.7,1677.0 1824.7,1677.4 1821.7,1677.7 1818.8,1678.1 1815.8,1678.4 1812.8,1678.7 1809.8,1679.1 1806.8,1679.4 1803.8,1679.8 1800.8,1680.1 1797.8,1680.4 1794.8,1680.8 1791.8,1681.1 1788.8,1681.4 1785.9,1681.8 1782.9,1682.1 1779.9,1682.4 1776.9,1682.8 1773.9,1683.1 1770.9,1683.4 1767.9,1683.7 1764.9,1684.1 1761.9,1684.4 1758.9,1684.7 1756.0,1685.0 1753.0,1685.4 1750.0,1685.7 1747.0,1686.0 1744.0,1686.3 1741.0,1686.6 1738.0,1686.9 1735.0,1687.3 1732.0,1687.6 1729.1,1687.9 1726.1,1688.2 1723.1,1688.5 1720.1,1688.8 1717.1,1689.1 1714.1,1689.4 1711.1,1689.7 1708.1,1690.0 1705.2,1690.3 1702.2,1690.6 1699.2,1690.9 1696.2,1691.2 1693.2,1691.5 1690.2,1691.7 1687.2,1692.0 1684.2,1692.3 1681.3,1692.6 1678.3,1692.9 1675.3,1693.2 1672.3,1693.4 1669.3,1693.7 1666.3,1694.0 1663.3,1694.3 1660.4,1694.5 1657.4,1694.8 1654.4,1695.1 1651.4,1695.3 1648.4,1695.6 1645.4,1695.8 1642.4,1696.1 1639.4,1696.4 1636.5,1696.6 1633.5,1696.9 1630.5,1697.1 1627.5,1697.4 1624.5,1697.6 1621.5,1697.8 1618.5,1698.1 1615.6,1698.3 1612.6,1698.5 1609.6,1698.8 1606.6,1699.0 1603.6,1699.2 1600.6,1699.5 1597.6,1699.7 1594.7,1699.9 1591.7,1700.1 1588.7,1700.3 1585.7,1700.6 1582.7,1700.8 1579.7,1701.0 1576.7,1701.2 1573.8,1701.4 1570.8,1701.6 1567.8,1701.8 1564.8,1702.0 1561.8,1702.2 1558.8,1702.4 1555.8,1702.5 1552.9,1702.7 1549.9,1702.9 1546.9,1703.1 1543.9,1703.3 1540.9,1703.4 1537.9,1703.6 1535.0,1703.8 1532.0,1703.9 1529.0,1704.1 1526.0,1704.3 1523.0,1704.4 1520.0,1704.6 1517.0,1704.7 1514.1,1704.9 1511.1,1705.0 1508.1,1705.2 1505.1,1705.3 1502.1,1705.4 1499.1,1705.6 1496.1,1705.7 1493.2,1705.8 1490.2,1705.9 1487.2,1706.1 1484.2,1706.2 1481.2,1706.3 1478.2,1706.4 1475.2,1706.5 1472.3,1706.6 1469.3,1706.7 1466.3,1706.8 1463.3,1706.9 1460.3,1707.0 1457.3,1707.1 1454.3,1707.1 1451.4,1707.2 1448.4,1707.3 1445.4,1707.4 1442.4,1707.4 1439.4,1707.5 1436.4,1707.6 1433.4,1707.6 1430.5,1707.7 1427.5,1707.7 1424.5,1707.8 1421.5,1707.8 1418.5,1707.8 1415.5,1707.9 1412.5,1707.9 1409.6,1707.9 1406.6,1708.0 1403.6,1708.0 1400.6,1708.0 1397.6,1708.0 1394.6,1708.0 1391.6,1708.0 1388.6,1708.0 1385.7,1708.0 1382.7,1708.0 1379.7,1708.0 1376.7,1708.0 1373.7,1708.0 1370.7,1707.9 1367.7,1707.9 1364.7,1707.9 1361.8,1707.9 1358.8,1707.8 1355.8,1707.8 1352.8,1707.7 1349.8,1707.7 1346.8,1707.7 1343.8,1707.6 1340.8,1707.5 1337.9,1707.5 1334.9,1707.4 1331.9,1707.4 1328.9,1707.3 1325.9,1707.2 1322.9,1707.1 1319.9,1707.1 1316.9,1707.0 1313.9,1706.9 1311.0,1706.8 1308.0,1706.7 1305.0,1706.6 1302.0,1706.5 1299.0,1706.4 1296.0,1706.3 1293.0,1706.2 1290.0,1706.1 1287.0,1706.0 1284.1,1705.9 1281.1,1705.7 1278.1,1705.6 1275.1,1705.5 1272.1,1705.4 1269.1,1705.2 1266.1,1705.1 1263.1,1705.0 1260.1,1704.8 1257.2,1704.7 1254.2,1704.5 1251.2,1704.4 1248.2,1704.2 1245.2,1704.1 1242.2,1703.9 1239.2,1703.8 1236.2,1703.6 1233.2,1703.4 1230.2,1703.3 1227.3,1703.1 1224.3,1702.9 1221.3,1702.8 1218.3,1702.6 1215.3,1702.4 1212.3,1702.2 1209.3,1702.0 1206.3,1701.9 1203.3,1701.7 1200.3,1701.5 1197.3,1701.3 1194.4,1701.1 1191.4,1700.9 1188.4,1700.7 1185.4,1700.5 1182.4,1700.3 1179.4,1700.1 1176.4,1699.9 1173.4,1699.7 1170.4,1699.4 1167.4,1699.2 1164.4,1699.0 1161.4,1698.8 1158.5,1698.6 1155.5,1698.3 1152.5,1698.1 1149.5,1697.9 1146.5,1697.7 1143.5,1697.4 1140.5,1697.2 1137.5,1697.0 1134.5,1696.7 1131.5,1696.5 1128.5,1696.2 1125.5,1696.0 1122.5,1695.7 1119.6,1695.5 1116.6,1695.3 1113.6,1695.0 1110.6,1694.7 1107.6,1694.5 1104.6,1694.2 1101.6,1694.0 1098.6,1693.7 1095.6,1693.5 1092.6,1693.2 1089.6,1692.9 1086.6,1692.7 1083.6,1692.4 1080.6,1692.1 1077.6,1691.9 1074.7,1691.6 1071.7,1691.3 1068.7,1691.1 1065.7,1690.8 1062.7,1690.5 1059.7,1690.2 1056.7,1689.9 1053.7,1689.7 1050.7,1689.4 1047.7,1689.1 1044.7,1688.8 1041.7,1688.5 1038.7,1688.2 1035.7,1688.0 1032.7,1687.7 1029.7,1687.4 1026.7,1687.1 1023.7,1686.8 1020.7,1686.5 1017.8,1686.2 1014.8,1685.9 1011.8,1685.6 1008.8,1685.3 1005.8,1685.0 1002.8,1684.7 999.8,1684.4 996.8,1684.1 993.8,1683.8 990.8,1683.5 987.8,1683.2 984.8,1682.9 981.8,1682.6 978.8,1682.3 975.8,1682.0 972.8,1681.7 969.8,1681.4 966.8,1681.1 963.8,1680.7 960.8,1680.4 957.8,1680.1 954.8,1679.8 951.8,1679.5 948.8,1679.2 945.8,1678.9 942.8,1678.6 939.8,1678.2 936.8,1677.9 933.9,1677.6 930.9,1677.3 927.9,1677.0 924.9,1676.7 921.9,1676.4 918.9,1676.0 915.9,1675.7 912.9,1675.4 909.9,1675.1 906.9,1674.8 903.9,1674.5 900.9,1674.1 897.9,1673.8 894.9,1673.5 891.9,1673.2 888.9,1672.9 885.9,1672.5 882.9,1672.2 879.9,1671.9 876.9,1671.6 873.9,1671.3 870.9,1670.9 867.9,1670.6 864.9,1670.3 861.9,1670.0 858.9,1669.7 855.9,1669.4 852.9,1669.0 849.9,1668.7 846.9,1668.4 843.9,1668.1 840.9,1667.8 837.9,1667.4 834.9,1667.1 831.9,1666.8 828.9,1666.5 825.9,1666.2 822.9,1665.9 819.9,1665.5 816.9,1665.2 813.9,1664.9 810.9,1664.6 807.9,1664.3 804.9,1664.0 801.9,1663.7 798.9,1663.4 795.9,1663.0 792.9,1662.7 789.9,1662.4 786.9,1662.1 783.9,1661.8 780.9,1661.5 777.9,1661.2 774.9,1660.9 771.9,1660.6 768.9,1660.3 765.9,1660.0 762.9,1659.7 759.9,1659.4 756.9,1659.1 753.9,1658.8 750.9,1658.5 747.9,1658.2 744.9,1657.9 741.9,1657.6 738.9,1657.3 735.9,1657.0 732.8,1656.7 729.8,1656.4 726.8,1656.1 723.8,1655.8 720.8,1655.5 717.8,1655.2 714.8,1654.9 711.8,1654.6 708.8,1654.4 705.8,1654.1 702.8,1653.8 699.8,1653.5 696.8,1653.2 693.8,1653.0 690.8,1652.7 687.8,1652.4 684.8,1652.1 681.8,1651.9 678.8,1651.6 675.8,1651.3 672.8,1651.0 669.8,1650.8 666.8,1650.5 663.8,1650.2 660.8,1650.0 657.8,1649.7 654.7,1649.5 651.7,1649.2 648.7,1648.9 645.7,1648.7 642.7,1648.4 639.7,1648.2 636.7,1647.9 633.7,1647.7 630.7,1647.4 627.7,1647.2 624.7,1646.9 621.7,1646.7 618.7,1646.5 615.7,1646.2 612.7,1646.0 609.7,1645.8 606.7,1645.5 603.7,1645.3 600.6,1645.1 597.6,1644.8 594.6,1644.6 591.6,1644.4 588.6,1644.2 585.6,1643.9 582.6,1643.7 579.6,1643.5 576.6,1643.2 573.6,1642.9 570.6,1642.7 567.6,1642.4 564.7,1642.1 561.7,1641.8 558.7,1641.4 555.7,1641.1 552.8,1640.7 549.8,1640.3 546.9,1639.8 543.9,1639.4 541.0,1638.9 538.1,1638.4 535.1,1637.8 532.2,1637.3 529.3,1636.6 526.4,1636.0 523.5,1635.3 520.7,1634.6 517.8,1633.8 514.9,1633.0 512.1,1632.1 509.3,1631.2 506.5,1630.2 503.6,1629.2 500.9,1628.2 498.1,1627.1 495.3,1625.9 492.6,1624.6 489.9,1623.3 487.2,1622.0 484.7,1620.5 482.1,1619.0 479.7,1617.4 477.3,1615.7 475.0,1614.0 472.9,1612.1 470.8,1610.1 468.9,1608.1 467.0,1605.9 465.3,1603.7 463.6,1601.3 462.1,1598.9 460.6,1596.4 459.3,1593.9 458.0,1591.3 456.7,1588.6 455.6,1585.9 454.5,1583.1 453.4,1580.3 452.5,1577.5 451.5,1574.6 450.6,1571.7 449.7,1568.7 448.9,1565.8 448.1,1562.8 447.3,1559.9 446.5,1556.9 445.8,1554.0 445.0,1551.0 444.3,1548.1 443.5,1545.1 442.8,1542.1 442.1,1539.2 441.4,1536.2 440.8,1533.2 440.1,1530.3 439.5,1527.3 438.8,1524.3 438.2,1521.4 437.6,1518.4 437.0,1515.4 436.4,1512.5 435.9,1509.5 435.3,1506.5 434.8,1503.5 434.2,1500.6 433.7,1497.6 433.2,1494.6 432.7,1491.7 432.2,1488.7 431.7,1485.7 431.3,1482.7 430.8,1479.8 430.4,1476.8 429.9,1473.8 429.5,1470.8 429.1,1467.8 428.7,1464.9 428.3,1461.9 427.9,1458.9 427.5,1455.9 427.2,1452.9 426.8,1450.0 426.5,1447.0 426.1,1444.0 425.8,1441.0 425.5,1438.0 425.2,1435.0 424.9,1432.1 424.6,1429.1 424.3,1426.1 424.0,1423.1 423.7,1420.1 423.5,1417.1 423.2,1414.1 423.0,1411.1 422.8,1408.2 422.5,1405.2 422.3,1402.2 422.1,1399.2 421.9,1396.2 421.7,1393.2 421.5,1390.2 421.3,1387.2 421.1,1384.2 421.0,1381.2 420.8,1378.2 420.6,1375.2 420.5,1372.2 420.3,1369.2 420.2,1366.3 420.1,1363.3 419.9,1360.3 419.8,1357.3 419.7,1354.3 419.6,1351.3 419.5,1348.3 419.4,1345.3 419.3,1342.3 419.2,1339.3 419.1,1336.3 419.0,1333.3 418.9,1330.3 418.8,1327.3 418.8,1324.3 418.7,1321.3 418.6,1318.3 418.6,1315.3 418.5,1312.3 418.4,1309.3 418.4,1306.3 418.3,1303.3 418.3,1300.3 418.3,1297.3 418.2,1294.3 418.2,1291.2 418.1,1288.2 418.1,1285.2 418.1,1282.2 418.1,1279.2 418.0,1276.2 418.0,1273.2 418.0,1270.2 418.0,1267.2 418.0,1264.2 418.0,1261.2 418.0,1258.2 418.0,1255.2 418.0,1252.2 418.0,1249.2 418.0,1246.2 418.0,1243.2 418.0,1240.2 418.0,1237.1 418.1,1234.1 418.1,1231.1 418.1,1228.1 418.2,1225.1 418.2,1222.1 418.2,1219.1 418.3,1216.1 418.3,1213.1 418.4,1210.1 418.4,1207.1 418.5,1204.1 418.5,1201.1 418.6,1198.1 418.7,1195.0 418.7,1192.0 418.8,1189.0 418.9,1186.0 419.0,1183.0 419.1,1180.0 419.2,1177.0 419.3,1174.0 419.4,1171.0 419.5,1168.0 419.6,1165.0 419.7,1162.0 419.8,1159.0 419.9,1156.0 420.0,1153.0 420.1,1150.0 420.3,1146.9 420.4,1143.9 420.5,1140.9 420.7,1137.9 420.8,1134.9 421.0,1131.9 421.1,1128.9 421.3,1125.9 421.4,1122.9 421.6,1119.9 421.8,1116.9 422.0,1113.9 422.1,1110.9 422.3,1107.9 422.5,1104.9 422.7,1101.9 422.9,1098.9 423.1,1095.9 423.3,1092.9 423.5,1089.9 423.7,1086.9 423.9,1083.9 424.1,1080.9 424.4,1077.9 424.6,1074.9 424.8,1071.9 425.1,1068.9 425.3,1065.9 425.6,1062.9 425.8,1059.9 426.1,1057.0 426.3,1054.0 426.6,1051.0 426.9,1048.0 427.1,1045.0 427.4,1042.0 427.7,1039.0 428.0,1036.0 428.3,1033.0 428.6,1030.0 428.9,1027.0 429.2,1024.1 429.5,1021.1 429.8,1018.1 430.2,1015.1 430.5,1012.1 430.8,1009.1 431.2,1006.1 431.5,1003.2 431.8,1000.2 432.2,997.2 432.6,994.2 432.9,991.2 433.3,988.3 433.7,985.3 434.0,982.3 434.4,979.3 434.8,976.3 435.2,973.4 435.6,970.4 436.0,967.4 436.4,964.5 436.8,961.5 437.2,958.5 437.7,955.5 438.1,952.6 438.5,949.6 439.0,946.6 439.4,943.7 439.9,940.7 440.3,937.7 440.8,934.8 441.3,931.8 441.7,928.8 442.2,925.9 442.7,922.9 443.2,920.0 443.7,917.0 444.2,914.0 444.7,911.1 445.2,908.1 445.7,905.2 446.3,902.2 446.8,899.3 447.3,896.3 447.9,893.4 448.4,890.4 449.0,887.5 449.5,884.5 450.1,881.6 450.7,878.6 451.2,875.7 451.8,872.7 452.4,869.8 453.0,866.9 453.6,863.9 454.2,861.0 454.8,858.1 455.4,855.1 456.1,852.2 456.7,849.3 457.3,846.3 458.0,843.4 458.6,840.5 459.3,837.5 459.9,834.6 460.6,831.7 461.3,828.8 461.9,825.8 462.6,822.9 463.3,820.0 464.0,817.1 464.7,814.2 465.4,811.3 466.1,808.3 466.9,805.4 467.6,802.5 468.3,799.6 469.1,796.7 469.8,793.8 470.6,790.9 471.3,788.0 472.1,785.1 472.9,782.2 473.6,779.3 474.4,776.4 475.2,773.5 476.0,770.6 476.8,767.8 477.6,764.9 478.5,762.0 479.3,759.1 480.1,756.2 480.9,753.3 481.8,750.5 482.6,747.6 483.5,744.7 484.4,741.8 485.2,739.0 486.1,736.1 487.0,733.2 487.9,730.4 488.8,727.5 489.7,724.7 490.6,721.8 491.5,719.0 492.4,716.1 493.4,713.2 494.3,710.4 495.3,707.6 496.2,704.7 497.2,701.9 498.1,699.0 499.1,696.2 500.1,693.4 501.1,690.5 502.1,687.7 503.1,684.9 504.1,682.0 505.1,679.2 506.1,676.4 507.1,673.6 508.2,670.8 509.2,668.0 510.3,665.1 511.3,662.3 512.4,659.5 513.5,656.7 514.5,653.9 515.6,651.1 516.7,648.3 517.8,645.5 518.9,642.7 520.0,640.0 521.2,637.2 522.3,634.4 523.4,631.6 524.6,628.8 525.7,626.1 526.9,623.3 528.1,620.5 529.2,617.8 530.4,615.0 531.6,612.2 532.8,609.5 534.0,606.7 535.2,604.0 536.4,601.2 537.6,598.5 538.9,595.7 540.1,593.0 541.4,590.2 542.6,587.5 543.9,584.8 545.2,582.0 546.4,579.3 547.7,576.6 549.0,573.9 550.3,571.2 551.6,568.5 552.9,565.7 554.3,563.0 555.6,560.3 556.9,557.6 558.3,554.9 559.7,552.2 561.0,549.5 562.4,546.9 563.8,544.2 565.2,541.5 566.5,538.8 568.0,536.1 569.4,533.5 570.8,530.8 572.2,528.1 573.6,525.5 575.1,522.8 576.5,520.2 578.0,517.5 579.5,514.9 580.9,512.2 582.4,509.6 583.9,506.9 585.4,504.3 586.9,501.7 588.5,499.1 590.0,496.4 591.5,493.8 593.1,491.2 594.6,488.6 596.2,486.0 597.8,483.5 599.4,480.9 601.0,478.3 602.6,475.8 604.2,473.2 605.8,470.7 607.5,468.1 609.1,465.6 610.8,463.1 612.5,460.6 614.2,458.1 615.9,455.6 617.6,453.1 619.3,450.6 621.0,448.2 622.8,445.7 624.6,443.3 626.3,440.9 628.1,438.5 629.9,436.1 631.8,433.7 633.6,431.3 635.4,429.0 637.3,426.6 639.2,424.3 641.1,422.0 643.0,419.7 644.9,417.4 646.8,415.1 648.8,412.8 650.7,410.6 652.7,408.3 654.7,406.1 656.7,403.9 658.7,401.7 660.8,399.6 662.8,397.4 664.9,395.3 667.0,393.2 669.1,391.1 671.2,389.0 673.4,386.9 675.5,384.9 677.7,382.9 679.9,380.9 682.1,378.9 684.3,376.9 686.6,375.0 688.8,373.0 691.1,371.1 693.4,369.2 695.8,367.4 698.1,365.5 700.5,363.7 702.8,361.9 705.2,360.1 707.6,358.4 710.1,356.6 712.5,354.9 715.0,353.2 717.4,351.5 719.9,349.9 722.4,348.2 724.9,346.6 727.5,345.0 730.0,343.5 732.6,341.9 735.2,340.4 737.8,338.9 740.4,337.4 743.0,335.9 745.6,334.5 748.3,333.1 750.9,331.7 753.6,330.3 756.3,329.0 759.0,327.6 761.7,326.3 764.4,325.0 767.2,323.8 769.9,322.5 772.7,321.3 775.4,320.1 778.2,318.9 781.0,317.8 783.8,316.6 786.6,315.5 789.4,314.5 792.2,313.4 795.1,312.4 797.9,311.3 800.8,310.3 803.6,309.4 806.5,308.4 809.4,307.5 812.3,306.6 815.1,305.7 818.0,304.9 820.9,304.0 823.9,303.2 826.8,302.4 829.7,301.7 832.6,300.9 835.6,300.2 838.5,299.5 841.4,298.9 844.4,298.2 847.3,297.6 850.3,297.0 853.3,296.4 856.2,295.9 859.2,295.3 862.2,294.8 865.1,294.4 868.1,293.9 871.1,293.5 874.1,293.1 877.1,292.7 880.0,292.3 883.0,292.0 886.0,291.7 889.0,291.4 892.0,291.2 895.0,290.9 898.0,290.7 901.0,290.5 904.0,290.3 907.0,290.1 910.0,290.0 913.0,289.8 916.0,289.7 919.0,289.6 922.0,289.5 925.0,289.4 928.0,289.3 931.0,289.2 934.0,289.1 937.0,289.1 940.0,289.0 943.0,288.9 946.0,288.9 949.0,288.8 952.0,288.8 955.0,288.7 958.0,288.7 961.0,288.6 964.0,288.6 967.0,288.5 970.0,288.5 973.0,288.4 976.0,288.3 979.0,288.3 982.0,288.2 985.0,288.1 988.0,288.0 991.0,287.8 994.0,287.7 997.0,287.6 1000.0,287.4Z"/></clipPath>
 <clipPath id="railclip"><path d="M380.0,1560.0L463.7,1579.5 463.7,1579.5 469.7,1580.2 475.7,1580.9 481.7,1581.6 487.6,1582.3 493.5,1583.0 499.4,1583.7 505.3,1584.4 511.1,1585.1 516.9,1585.8 522.7,1586.5 528.5,1587.2 534.3,1587.9 540.1,1588.6 545.9,1589.3 551.7,1590.0 557.5,1590.7 563.3,1591.4 569.1,1592.0 574.9,1592.7 580.8,1593.4 586.7,1594.1 592.6,1594.8 598.5,1595.5 604.5,1596.2 610.5,1596.9 616.5,1597.6 622.6,1598.4 628.7,1599.1 634.9,1599.8 641.1,1600.5 647.4,1601.2 653.7,1601.9 660.1,1602.6 666.6,1603.4 673.1,1604.1 679.7,1604.8 686.4,1605.5 693.2,1606.3 700.0,1607.0 705.4,1607.6 710.8,1608.2 716.3,1608.7 721.8,1609.3 727.4,1609.9 733.0,1610.5 738.7,1611.1 744.4,1611.7 750.1,1612.3 755.9,1612.9 761.7,1613.5 767.6,1614.1 773.5,1614.7 779.4,1615.3 785.3,1615.9 791.3,1616.5 797.3,1617.1 803.3,1617.7 809.3,1618.4 815.4,1619.0 821.5,1619.6 827.6,1620.2 833.7,1620.8 839.9,1621.4 846.0,1622.0 852.2,1622.6 858.4,1623.3 864.5,1623.9 870.7,1624.5 876.9,1625.1 883.1,1625.7 889.4,1626.3 895.6,1626.9 901.8,1627.5 908.0,1628.1 914.2,1628.7 920.4,1629.4 926.6,1630.0 932.8,1630.6 939.0,1631.2 945.2,1631.7 951.3,1632.3 957.5,1632.9 963.6,1633.5 969.7,1634.1 975.8,1634.7 981.9,1635.3 988.0,1635.9 994.0,1636.4 1000.0,1637.0 1006.0,1637.6 1012.2,1638.2 1018.3,1638.7 1024.6,1639.3 1030.9,1639.9 1037.3,1640.5 1043.7,1641.1 1050.2,1641.7 1056.7,1642.3 1063.2,1642.9 1069.8,1643.6 1076.4,1644.2 1083.0,1644.8 1089.6,1645.4 1096.3,1646.0 1103.0,1646.6 1109.6,1647.2 1116.3,1647.9 1123.0,1648.5 1129.6,1649.1 1136.2,1649.7 1142.8,1650.3 1149.4,1650.9 1156.0,1651.5 1162.5,1652.1 1169.0,1652.6 1175.4,1653.2 1181.8,1653.8 1188.1,1654.4 1194.4,1654.9 1200.6,1655.5 1206.7,1656.0 1212.8,1656.6 1218.8,1657.1 1224.7,1657.6 1230.5,1658.1 1236.2,1658.6 1241.9,1659.1 1247.4,1659.6 1252.8,1660.1 1258.1,1660.5 1263.3,1661.0 1268.4,1661.4 1273.3,1661.8 1278.1,1662.2 1282.8,1662.6 1287.3,1663.0 1291.7,1663.3 1295.9,1663.7 1300.0,1664.0 1311.7,1664.9 1322.1,1665.7 1331.1,1666.4 1339.1,1667.0 1346.0,1667.5 1352.1,1667.9 1357.6,1668.2 1362.5,1668.5 1367.0,1668.7 1371.3,1668.8 1375.5,1668.9 1379.7,1669.0 1384.1,1669.0 1388.9,1669.0 1394.1,1669.0 1400.0,1669.0 1405.9,1669.0 1411.1,1669.0 1415.9,1669.0 1420.3,1669.0 1424.5,1669.0 1428.7,1668.9 1433.0,1668.8 1437.5,1668.7 1442.4,1668.4 1447.9,1668.1 1454.0,1667.7 1460.9,1667.2 1468.9,1666.6 1477.9,1665.9 1488.3,1665.0 1500.0,1664.0 1504.1,1663.6 1508.3,1663.3 1512.7,1662.9 1517.2,1662.5 1521.9,1662.1 1526.7,1661.6 1531.6,1661.2 1536.7,1660.7 1541.9,1660.3 1547.2,1659.8 1552.6,1659.3 1558.1,1658.8 1563.8,1658.3 1569.5,1657.7 1575.3,1657.2 1581.2,1656.6 1587.2,1656.1 1593.3,1655.5 1599.4,1654.9 1605.6,1654.3 1611.9,1653.7 1618.2,1653.1 1624.6,1652.5 1631.0,1651.9 1637.5,1651.2 1644.0,1650.6 1650.6,1649.9 1657.2,1649.3 1663.8,1648.6 1670.4,1648.0 1677.0,1647.3 1683.7,1646.7 1690.4,1646.0 1697.0,1645.3 1703.7,1644.6 1710.4,1643.9 1717.0,1643.3 1723.6,1642.6 1730.2,1641.9 1736.8,1641.2 1743.3,1640.5 1749.8,1639.8 1756.3,1639.2 1762.7,1638.5 1769.1,1637.8 1775.4,1637.1 1781.7,1636.4 1787.8,1635.7 1794.0,1635.1 1800.0,1634.4 1806.0,1633.7 1812.0,1633.0 1818.1,1632.4 1824.2,1631.7 1830.3,1630.9 1836.4,1630.2 1842.5,1629.5 1848.7,1628.8 1854.8,1628.0 1861.0,1627.3 1867.2,1626.6 1873.4,1625.8 1879.6,1625.1 1885.8,1624.3 1892.0,1623.5 1898.2,1622.8 1904.4,1622.0 1910.6,1621.2 1916.8,1620.4 1923.0,1619.7 1929.2,1618.9 1935.4,1618.1 1941.6,1617.3 1947.7,1616.5 1953.9,1615.8 1960.0,1615.0 1966.2,1614.2 1972.3,1613.4 1978.4,1612.6 1984.5,1611.8 1990.5,1611.1 1996.6,1610.3 2002.6,1609.5 2008.6,1608.7 2014.6,1608.0 2020.5,1607.2 2026.4,1606.4 2032.3,1605.7 2038.2,1604.9 2044.0,1604.2 2049.8,1603.4 2055.5,1602.7 2061.2,1601.9 2066.9,1601.2 2072.5,1600.5 2078.1,1599.8 2083.6,1599.1 2089.1,1598.4 2094.6,1597.7 2100.0,1597.0 2106.9,1596.1 2113.6,1595.3 2120.3,1594.4 2127.0,1593.6 2133.5,1592.8 2140.0,1591.9 2146.4,1591.1 2152.8,1590.3 2159.1,1589.5 2165.4,1588.7 2171.6,1587.9 2177.8,1587.1 2183.9,1586.3 2190.0,1585.5 2196.0,1584.8 2202.0,1584.0 2208.0,1583.2 2213.9,1582.5 2219.8,1581.7 2225.7,1580.9 2231.6,1580.2 2237.5,1579.4 2243.3,1578.7 2249.2,1577.9 2255.0,1577.2 2260.8,1576.4 2266.7,1575.7 2272.5,1574.9 2278.3,1574.2 2284.2,1573.4 2290.1,1572.6 2295.9,1571.9 2301.8,1571.1 2307.8,1570.4 2313.7,1569.6 2319.7,1568.8 2325.7,1568.1 2331.7,1567.3 2337.8,1566.5 2337.8,1566.5 2420.0,1540.0 2420.0,1760.0 380.0,1760.0Z"/></clipPath>
 <radialGradient id="base" gradientUnits="userSpaceOnUse" cx="1345" cy="820" r="900" gradientTransform="translate(1345 820) scale(1 0.8) translate(-1345 -820)">
  <stop offset="0" stop-color="#6b8519"/>
  <stop offset="0.13" stop-color="#5e8417"/>
  <stop offset="0.35" stop-color="#4e8518"/>
  <stop offset="0.42" stop-color="#3c8418"/>
  <stop offset="0.53" stop-color="#2b831e"/>
  <stop offset="0.59" stop-color="#0d843c"/>
  <stop offset="0.66" stop-color="#04804a"/>
  <stop offset="0.71" stop-color="#027a5c"/>
  <stop offset="0.79" stop-color="#017168"/>
  <stop offset="0.88" stop-color="#084a88"/>
  <stop offset="1" stop-color="#0f4688"/>
 </radialGradient>
 <filter id="bl2" filterUnits="userSpaceOnUse" x="0" y="0" width="2880" height="1800"><feGaussianBlur stdDeviation="1.5"/></filter>
 <filter id="bl4" filterUnits="userSpaceOnUse" x="0" y="0" width="2880" height="1800"><feGaussianBlur stdDeviation="4"/></filter>
 <filter id="bl3" filterUnits="userSpaceOnUse" x="0" y="0" width="2880" height="1800"><feGaussianBlur stdDeviation="3"/></filter>
 <filter id="bl14" filterUnits="userSpaceOnUse" x="0" y="0" width="2880" height="1800"><feGaussianBlur stdDeviation="12"/></filter>
 <filter id="bl90" filterUnits="userSpaceOnUse" x="0" y="0" width="2880" height="1800"><feGaussianBlur stdDeviation="90"/></filter>
 <filter id="bl40" filterUnits="userSpaceOnUse" x="0" y="0" width="2880" height="1800"><feGaussianBlur stdDeviation="40"/></filter>
 <linearGradient id="railg" gradientUnits="userSpaceOnUse" x1="0" y1="1600" x2="0" y2="1700">
  <stop offset="0" stop-color="#f25c38"/><stop offset="1" stop-color="#f25c38"/>
 </linearGradient>
 <linearGradient id="plug" x1="0" y1="0" x2="1" y2="0">
  <stop offset="0" stop-color="#f08838"/><stop offset="0.15" stop-color="#f08838"/>
  <stop offset="0.32" stop-color="#f040e0"/><stop offset="0.5" stop-color="#40a0f0"/>
  <stop offset="0.68" stop-color="#50e040"/><stop offset="0.82" stop-color="#d8e840"/><stop offset="1" stop-color="#e0e060"/>
 </linearGradient>
</defs>
<g clip-path="url(#vp)">
 <rect x="15" y="223" width="2849" height="1525" fill="#00ffff"/>
 <g clip-path="url(#bc)">
  <rect x="300" y="250" width="2200" height="1500" fill="url(#base)"/>
  <ellipse cx="1400" cy="1640" rx="330" ry="90" fill="#3a3086" filter="url(#bl40)"/>
  <path d="M1730.0,288.2L1739.0,290.5 1748.0,293.4 1757.0,296.2 1766.0,298.9 1775.0,301.5 1784.1,304.0 1793.1,306.4 1802.0,308.7 1810.5,311.1 1818.9,313.7 1827.3,316.4 1835.5,319.3 1843.7,322.3 1851.9,325.4 1859.9,328.7 1867.8,332.1 1875.6,335.7 1883.2,339.4 1890.8,343.2 1898.2,347.1 1905.5,351.2 1912.6,355.4 1919.6,359.7 1926.4,364.2 1933.0,368.7 1939.4,373.4 1945.6,378.1 1951.7,383.0 1957.5,387.9 1963.1,393.0 1968.5,398.1 1973.7,403.3 1978.6,408.5 1983.3,413.8 1987.8,419.2 1992.1,424.7 1996.2,430.2 2000.2,435.9 2004.0,441.7 2007.8,447.6 2011.4,453.6 2014.9,459.7 2018.3,465.9 2021.8,472.1 2025.8,477.8 2030.3,483.2 2035.0,488.5 2039.6,494.1 2044.3,499.8 2048.8,505.6 2053.4,511.6 2057.9,517.7 2062.3,524.0 2066.8,530.4 2071.2,536.9 2075.5,543.6 2079.9,550.3 2084.2,557.2 2088.4,564.1 2092.7,571.2 2096.8,578.2 2101.0,585.4 2105.0,592.5 2109.0,599.7 2113.0,606.9 2116.9,614.2 2120.7,621.5 2124.4,628.8 2128.1,636.1 2131.8,643.5 2135.4,650.9 2138.9,658.3 2142.4,665.7 2145.8,673.2 2149.2,680.7 2152.5,688.2 2155.7,695.8 2158.9,703.4 2162.1,711.0 2165.2,718.6 2168.2,726.3 2171.2,734.0 2174.2,741.7 2177.1,749.5 2179.9,757.2 2182.7,765.0 2185.4,772.9 2188.1,780.7 2190.7,788.6 2193.3,796.5 2195.9,804.4 2198.4,812.4 2200.8,820.3 2203.2,828.3 2205.6,836.4 2207.9,844.4 2210.1,852.5 2212.4,860.6 2214.5,868.7 2216.6,876.8 2218.7,884.9 2220.8,893.1 2222.7,901.3 2224.7,909.5 2226.6,917.7 2228.4,925.9 2230.2,934.2 2232.0,942.5 2233.7,950.8 2235.4,959.1 2237.0,967.4 2238.6,975.7 2240.2,984.0 2241.7,992.4 2243.1,1000.8 2244.6,1009.2 2245.9,1017.6 2247.3,1026.0 2248.6,1034.4 2249.8,1042.8 2251.0,1051.3 2252.2,1059.7 2253.3,1068.2 2254.4,1076.6 2255.4,1085.1 2256.4,1093.6 2257.4,1102.1 2258.3,1110.6 2259.2,1119.1 2260.1,1127.6 2260.9,1136.2 2261.6,1144.7 2262.4,1153.2 2263.1,1161.8 2263.7,1170.3 2264.3,1178.9 2264.9,1187.4 2265.4,1196.0 2265.9,1204.5 2266.4,1213.1 2266.8,1221.7 2267.2,1230.2 2267.6,1238.8 2267.9,1247.4 2268.2,1255.9 2268.4,1264.5 2268.6,1273.1 2268.8,1281.6 2269.0,1290.2 2269.1,1298.7 2269.2,1307.3 2269.2,1315.8 2269.2,1324.3 2269.2,1332.9 2269.1,1341.4 2269.0,1349.8 2268.9,1358.3 2268.7,1366.8 2268.4,1375.3 2268.2,1383.7 2267.9,1392.2 2267.5,1400.6 2267.1,1409.1 2266.7,1417.5 2266.2,1426.0 2265.7,1434.5 2265.7,1443.0 2266.6,1451.6 2268.0,1460.2 2269.4,1468.9 2270.7,1477.6 2272.0,1486.4 2273.2,1495.2 2274.4,1504.1 2275.5,1512.9 2276.7,1521.5 2280.4,1517.8 2301.9,1501.0 2305.0,1515.9 2303.2,1534.7 2287.0,1548.9 2270.3,1557.6 2253.2,1563.5 2236.0,1567.8 2218.5,1571.2 2200.7,1574.1 2182.7,1576.8 2164.2,1579.4 2145.3,1581.9 2125.8,1584.4 2105.7,1587.0 2088.0,1589.3 2071.4,1591.4 2054.3,1593.6 2037.0,1595.8 2019.3,1598.1 2001.4,1600.4 1983.3,1602.7 1965.0,1605.1 1946.6,1607.4 1928.0,1609.8 1909.4,1612.1 1890.8,1614.4 1872.3,1616.7 1853.7,1618.9 1835.3,1621.1 1817.1,1623.2 1799.0,1625.3 1780.7,1627.3 1761.8,1629.3 1742.4,1631.4 1722.7,1633.5 1702.8,1635.5 1682.8,1637.5 1662.9,1639.5 1643.1,1641.5 1623.7,1643.3 1604.7,1645.2 1586.3,1646.9 1568.6,1648.6 1551.8,1650.1 1535.9,1651.6 1521.1,1652.9 1507.5,1654.1 1487.5,1655.9 1460.3,1658.1 1442.0,1659.3 1428.5,1659.8 1415.8,1659.9 1400.0,1659.8 1384.2,1659.8 1371.6,1659.6 1358.1,1659.1 1339.7,1657.9 1312.5,1655.8 1292.4,1654.2 1278.9,1653.1 1264.1,1651.8 1248.2,1650.4 1231.3,1649.0 1213.6,1647.4 1195.2,1645.8 1176.2,1644.1 1156.8,1642.3 1137.1,1640.5 1117.1,1638.7 1097.1,1636.9 1077.2,1635.0 1057.5,1633.2 1038.1,1631.4 1019.2,1629.6 1000.9,1627.9 982.8,1626.1 964.5,1624.4 946.0,1622.6 927.5,1620.8 908.9,1619.0 890.3,1617.2 871.6,1615.3 853.1,1613.5 834.6,1611.7 816.3,1609.8 798.2,1608.0 780.3,1606.2 762.7,1604.4 745.4,1602.6 728.4,1600.8 711.8,1599.0 694.2,1597.1 674.1,1594.9 654.8,1592.7 636.0,1590.4 617.6,1588.1 599.7,1585.6 582.1,1582.9 564.7,1579.6 547.5,1575.5 530.6,1569.8 514.0,1561.1 497.8,1547.2 497.2,1529.3 500.1,1510.7 518.8,1524.0 521.3,1523.5 521.5,1515.1 521.8,1506.8 522.2,1498.5 522.7,1490.3 523.3,1482.0 524.0,1473.7 524.8,1465.5 525.7,1457.3 526.7,1449.0 527.4,1440.8 527.4,1432.7 526.6,1424.7 525.8,1416.6 525.1,1408.4 524.4,1400.3 523.8,1392.0 523.2,1383.8 522.7,1375.5 522.3,1367.1 521.9,1358.7 521.5,1350.3 521.2,1341.8 521.0,1333.3 520.7,1324.7 520.5,1316.1 520.3,1307.5 520.2,1298.8 520.1,1290.1 520.0,1281.3 519.9,1272.6 519.9,1263.9 519.9,1255.2 519.9,1246.6 519.9,1237.9 520.0,1229.2 520.1,1220.5 520.2,1211.8 520.4,1203.2 520.6,1194.5 520.8,1185.9 521.0,1177.2 521.3,1168.6 521.6,1160.0 522.0,1151.4 522.4,1142.8 522.8,1134.2 523.2,1125.6 523.7,1117.0 524.2,1108.4 524.8,1099.9 525.4,1091.3 526.0,1082.8 526.7,1074.2 527.4,1065.7 528.1,1057.2 528.9,1048.7 529.7,1040.2 530.6,1031.8 531.5,1023.3 532.4,1014.8 533.4,1006.4 534.4,998.0 535.5,989.6 536.6,981.2 537.7,972.8 538.9,964.4 540.2,956.1 541.4,947.7 542.7,939.4 544.1,931.1 545.5,922.8 547.0,914.5 548.5,906.2 550.0,898.0 551.6,889.7 553.2,881.5 554.9,873.3 556.7,865.1 558.4,856.9 560.3,848.8 562.1,840.6 564.1,832.5 566.0,824.4 568.1,816.3 570.1,808.3 572.3,800.2 574.4,792.2 576.6,784.2 578.9,776.2 581.2,768.2 583.6,760.3 586.0,752.4 588.5,744.5 591.0,736.6 593.6,728.7 596.2,720.9 598.9,713.1 601.6,705.3 604.4,697.5 607.2,689.8 610.1,682.0 613.0,674.3 616.0,666.6 619.1,659.0 622.2,651.4 625.3,643.7 628.5,636.2 631.8,628.6 635.1,621.0 638.4,613.5 641.8,606.0 645.3,598.6 648.8,591.1 652.4,583.7 656.0,576.3 659.7,568.9 663.4,561.6 667.2,554.3 670.9,547.1 674.7,540.1 678.6,533.1 682.4,526.3 686.3,519.5 690.2,512.9 694.2,506.4 698.1,500.1 702.2,493.9 706.2,487.8 710.3,481.8 714.4,476.0 718.6,470.4 722.8,464.8 727.1,459.5 731.4,454.2 735.8,449.1 740.2,444.2 744.7,439.4 749.3,434.6 754.0,430.0 758.9,425.4 764.0,420.9 769.2,416.4 774.5,412.0 780.0,407.7 785.6,403.5 791.4,399.3 797.3,395.2 803.3,391.2 809.4,387.2 815.6,383.3 822.0,379.5 828.5,375.8 835.1,372.1 841.7,368.6 848.5,365.1 855.4,361.6 862.4,358.3 869.5,355.0 876.7,351.8 884.0,348.7 891.5,345.6 899.1,342.6 907.0,339.6 915.2,336.6 923.5,333.6 932.1,330.6 940.8,327.4 949.6,324.2 958.6,320.8 967.6,317.3 976.7,313.5 985.8,309.5 994.6,305.4 1001.9,301.8 1006.4,299.3 1011.1,297.1 1015.8,294.7 1020.5,292.3 1025.3,289.9 1030.0,288.1 1000.0,120.0 60.0,120.0 60.0,1790.0 2800.0,1790.0 2800.0,120.0 1790.0,120.0Z" fill="#0a4a8a" filter="url(#bl14)"/>
  <g filter="url(#bl3)"><path d="M1730.0,288.2L1739.0,290.6 1748.0,293.7 1757.0,296.5 1766.0,299.3 1775.0,302.0 1784.1,304.7 1793.1,307.2 1802.0,309.6 1810.5,312.1 1818.9,314.7 1827.2,317.6 1835.5,320.5 1843.6,323.6 1851.7,326.8 1859.7,330.2 1867.5,333.7 1875.3,337.3 1882.9,341.1 1890.4,345.0 1897.8,349.0 1905.0,353.2 1912.0,357.5 1918.9,361.9 1925.6,366.4 1932.2,371.0 1938.5,375.7 1944.7,380.5 1950.6,385.4 1956.4,390.4 1961.9,395.5 1967.2,400.6 1972.3,405.9 1977.1,411.2 1981.7,416.5 1986.0,421.9 1990.2,427.4 1994.2,432.9 1998.0,438.6 2001.8,444.4 2005.4,450.3 2008.9,456.3 2012.3,462.4 2015.6,468.6 2018.9,474.8 2022.8,480.5 2027.3,485.8 2032.0,491.1 2036.6,496.6 2041.1,502.3 2045.7,508.1 2050.2,514.0 2054.6,520.1 2059.1,526.3 2063.5,532.7 2067.8,539.2 2072.2,545.8 2076.5,552.5 2080.8,559.3 2085.0,566.2 2089.2,573.2 2093.4,580.3 2097.5,587.4 2101.5,594.5 2105.5,601.7 2109.5,608.8 2113.3,616.1 2117.1,623.3 2120.9,630.6 2124.6,637.9 2128.2,645.2 2131.8,652.6 2135.3,660.0 2138.8,667.4 2142.2,674.8 2145.5,682.3 2148.8,689.8 2152.1,697.4 2155.3,704.9 2158.4,712.5 2161.5,720.1 2164.5,727.8 2167.5,735.4 2170.4,743.1 2173.3,750.8 2176.1,758.6 2178.9,766.4 2181.6,774.2 2184.3,782.0 2186.9,789.8 2189.5,797.7 2192.1,805.6 2194.5,813.5 2197.0,821.5 2199.4,829.5 2201.7,837.5 2204.0,845.5 2206.3,853.5 2208.5,861.6 2210.7,869.7 2212.8,877.8 2214.8,885.9 2216.9,894.1 2218.9,902.2 2220.8,910.4 2222.7,918.6 2224.5,926.8 2226.3,935.0 2228.1,943.3 2229.8,951.6 2231.5,959.8 2233.1,968.1 2234.7,976.4 2236.2,984.8 2237.7,993.1 2239.2,1001.5 2240.6,1009.8 2242.0,1018.2 2243.3,1026.6 2244.6,1035.0 2245.8,1043.4 2247.0,1051.8 2248.2,1060.2 2249.3,1068.7 2250.4,1077.1 2251.5,1085.6 2252.5,1094.1 2253.4,1102.6 2254.3,1111.0 2255.2,1119.5 2256.1,1128.0 2256.9,1136.5 2257.6,1145.1 2258.4,1153.6 2259.1,1162.1 2259.7,1170.6 2260.3,1179.2 2260.9,1187.7 2261.4,1196.2 2261.9,1204.8 2262.4,1213.3 2262.8,1221.9 2263.2,1230.4 2263.6,1239.0 2263.9,1247.5 2264.2,1256.1 2264.4,1264.6 2264.7,1273.2 2264.8,1281.7 2265.0,1290.2 2265.1,1298.8 2265.2,1307.3 2265.2,1315.8 2265.2,1324.3 2265.2,1332.8 2265.1,1341.3 2265.0,1349.8 2264.9,1358.2 2264.7,1366.7 2264.4,1375.1 2264.2,1383.6 2263.9,1392.0 2263.5,1400.5 2263.1,1408.9 2262.7,1417.3 2262.2,1425.8 2261.7,1434.2 2261.8,1442.7 2262.7,1451.3 2264.2,1459.9 2265.7,1468.6 2267.1,1477.3 2268.4,1486.1 2269.7,1494.9 2271.0,1503.7 2272.2,1512.5 2273.4,1521.1 2277.3,1516.9 2299.8,1499.0 2304.2,1513.9 2303.0,1533.3 2286.9,1547.9 2270.2,1557.0 2253.2,1563.0 2235.9,1567.3 2218.4,1570.8 2200.7,1573.7 2182.6,1576.4 2164.1,1579.0 2145.2,1581.5 2125.7,1584.1 2105.6,1586.6 2087.9,1588.9 2071.3,1591.0 2054.3,1593.2 2036.9,1595.4 2019.3,1597.7 2001.4,1600.0 1983.3,1602.4 1965.0,1604.7 1946.5,1607.1 1928.0,1609.4 1909.4,1611.8 1890.8,1614.1 1872.2,1616.3 1853.7,1618.6 1835.3,1620.8 1817.0,1622.9 1798.9,1624.9 1780.6,1626.9 1761.7,1629.0 1742.3,1631.0 1722.6,1633.1 1702.7,1635.1 1682.8,1637.2 1662.8,1639.1 1643.1,1641.1 1623.7,1643.0 1604.7,1644.8 1586.3,1646.6 1568.6,1648.2 1551.7,1649.8 1535.8,1651.2 1521.1,1652.6 1507.5,1653.8 1487.5,1655.5 1460.3,1657.7 1441.9,1658.9 1428.5,1659.4 1415.8,1659.5 1400.0,1659.5 1384.2,1659.5 1371.6,1659.3 1358.1,1658.7 1339.7,1657.5 1312.5,1655.4 1292.5,1653.8 1278.9,1652.7 1264.1,1651.4 1248.2,1650.1 1231.3,1648.6 1213.7,1647.1 1195.2,1645.4 1176.3,1643.7 1156.8,1642.0 1137.1,1640.2 1117.2,1638.4 1097.2,1636.5 1077.3,1634.7 1057.5,1632.8 1038.2,1631.0 1019.2,1629.2 1000.9,1627.5 982.8,1625.8 964.5,1624.0 946.1,1622.3 927.5,1620.5 908.9,1618.6 890.3,1616.8 871.7,1615.0 853.1,1613.2 834.7,1611.3 816.4,1609.5 798.2,1607.6 780.3,1605.8 762.7,1604.0 745.4,1602.2 728.4,1600.4 711.8,1598.7 694.2,1596.7 674.2,1594.5 654.8,1592.3 636.0,1590.0 617.7,1587.7 599.7,1585.2 582.1,1582.5 564.7,1579.2 547.6,1575.0 530.7,1569.1 514.1,1560.2 498.0,1545.8 498.0,1527.3 502.1,1508.7 521.7,1522.9 524.3,1522.7 524.6,1514.4 525.0,1506.1 525.5,1497.9 526.1,1489.6 526.8,1481.4 527.6,1473.2 528.5,1464.9 529.5,1456.7 530.5,1448.5 531.3,1440.3 531.3,1432.3 530.6,1424.2 529.8,1416.2 529.1,1408.1 528.4,1399.9 527.8,1391.8 527.2,1383.5 526.7,1375.2 526.3,1366.9 525.9,1358.5 525.5,1350.1 525.2,1341.7 525.0,1333.2 524.7,1324.6 524.5,1316.0 524.3,1307.4 524.2,1298.7 524.1,1290.0 524.0,1281.3 523.9,1272.6 523.9,1263.9 523.9,1255.2 523.9,1246.6 523.9,1237.9 524.0,1229.2 524.1,1220.6 524.2,1211.9 524.4,1203.3 524.6,1194.6 524.8,1186.0 525.0,1177.4 525.3,1168.8 525.6,1160.1 526.0,1151.5 526.4,1142.9 526.8,1134.4 527.2,1125.8 527.7,1117.2 528.2,1108.7 528.8,1100.1 529.4,1091.6 530.0,1083.1 530.7,1074.6 531.4,1066.1 532.1,1057.6 532.9,1049.1 533.7,1040.6 534.6,1032.2 535.4,1023.7 536.4,1015.3 537.4,1006.9 538.4,998.5 539.4,990.1 540.5,981.7 541.7,973.4 542.9,965.0 544.1,956.7 545.4,948.4 546.7,940.0 548.0,931.8 549.4,923.5 550.9,915.2 552.4,907.0 553.9,898.7 555.5,890.5 557.1,882.3 558.8,874.1 560.5,866.0 562.3,857.8 564.1,849.7 566.0,841.6 567.9,833.5 569.9,825.4 571.9,817.3 574.0,809.3 576.1,801.3 578.2,793.3 580.4,785.3 582.7,777.3 585.0,769.4 587.4,761.5 589.8,753.6 592.2,745.7 594.7,737.8 597.3,730.0 599.9,722.2 602.6,714.4 605.3,706.6 608.0,698.9 610.8,691.2 613.7,683.5 616.6,675.8 619.6,668.1 622.6,660.5 625.7,652.9 628.8,645.3 632.0,637.7 635.2,630.2 638.5,622.7 641.9,615.2 645.3,607.7 648.7,600.3 652.2,592.8 655.8,585.4 659.4,578.1 663.0,570.7 666.7,563.4 670.4,556.2 674.2,549.0 677.9,542.0 681.7,535.1 685.5,528.2 689.4,521.5 693.3,515.0 697.2,508.5 701.1,502.2 705.1,496.0 709.1,490.0 713.1,484.1 717.2,478.3 721.3,472.7 725.4,467.2 729.6,461.9 733.8,456.7 738.1,451.7 742.5,446.7 746.9,442.0 751.4,437.3 756.1,432.6 760.9,428.1 765.8,423.6 770.9,419.2 776.2,414.8 781.6,410.5 787.1,406.2 792.7,402.1 798.5,397.9 804.5,393.9 810.5,389.9 816.7,386.0 822.9,382.2 829.3,378.4 835.8,374.7 842.4,371.1 849.2,367.6 856.0,364.1 862.9,360.7 869.9,357.4 877.0,354.1 884.3,350.9 891.7,347.7 899.3,344.6 907.2,341.6 915.3,338.5 923.6,335.4 932.1,332.2 940.8,329.0 949.6,325.6 958.6,322.1 967.6,318.4 976.7,314.5 985.8,310.4 994.6,306.0 1001.9,302.4 1006.4,299.8 1011.1,297.4 1015.8,295.0 1020.5,292.5 1025.3,290.0 1030.0,288.1 1000.0,120.0 60.0,120.0 60.0,1790.0 2800.0,1790.0 2800.0,120.0 1790.0,120.0Z" fill="#0a4a8a"/>
<path d="M1730.0,288.2L1739.0,290.4 1748.0,293.3 1757.0,296.0 1766.0,298.6 1775.0,301.2 1784.1,303.7 1793.1,306.0 1802.0,308.3 1810.5,310.7 1818.9,313.2 1827.3,315.9 1835.6,318.7 1843.8,321.6 1851.9,324.7 1860.0,328.0 1867.9,331.3 1875.7,334.8 1883.4,338.5 1891.0,342.3 1898.4,346.2 1905.7,350.2 1912.9,354.4 1919.9,358.7 1926.7,363.1 1933.4,367.6 1939.8,372.2 1946.1,376.9 1952.2,381.8 1958.1,386.7 1963.8,391.7 1969.2,396.8 1974.4,402.0 1979.4,407.2 1984.2,412.5 1988.7,417.9 1993.0,423.3 1997.2,428.9 2001.3,434.5 2005.2,440.3 2008.9,446.2 2012.6,452.2 2016.2,458.3 2019.7,464.5 2023.2,470.7 2027.2,476.5 2031.8,481.8 2036.5,487.2 2041.2,492.8 2045.8,498.5 2050.4,504.4 2055.0,510.4 2059.5,516.6 2064.0,522.9 2068.4,529.3 2072.8,535.8 2077.2,542.5 2081.6,549.3 2085.9,556.1 2090.1,563.1 2094.4,570.1 2098.6,577.2 2102.7,584.4 2106.8,591.6 2110.8,598.8 2114.7,606.0 2118.6,613.3 2122.5,620.5 2126.2,627.9 2129.9,635.2 2133.6,642.6 2137.2,650.0 2140.7,657.4 2144.2,664.9 2147.6,672.4 2151.0,679.9 2154.3,687.4 2157.6,695.0 2160.8,702.6 2163.9,710.2 2167.0,717.9 2170.1,725.6 2173.1,733.3 2176.0,741.0 2178.9,748.8 2181.8,756.5 2184.6,764.4 2187.3,772.2 2190.0,780.1 2192.6,787.9 2195.2,795.9 2197.8,803.8 2200.3,811.8 2202.7,819.8 2205.1,827.8 2207.5,835.8 2209.8,843.9 2212.1,851.9 2214.3,860.0 2216.5,868.2 2218.6,876.3 2220.7,884.5 2222.7,892.6 2224.7,900.8 2226.6,909.0 2228.5,917.3 2230.4,925.5 2232.2,933.8 2234.0,942.1 2235.7,950.4 2237.4,958.7 2239.0,967.0 2240.6,975.3 2242.1,983.7 2243.6,992.1 2245.1,1000.4 2246.5,1008.8 2247.9,1017.2 2249.2,1025.7 2250.5,1034.1 2251.8,1042.5 2253.0,1051.0 2254.2,1059.4 2255.3,1067.9 2256.4,1076.4 2257.4,1084.9 2258.4,1093.4 2259.4,1101.9 2260.3,1110.4 2261.2,1118.9 2262.0,1127.5 2262.9,1136.0 2263.6,1144.5 2264.4,1153.1 2265.0,1161.6 2265.7,1170.2 2266.3,1178.7 2266.9,1187.3 2267.4,1195.9 2267.9,1204.4 2268.4,1213.0 2268.8,1221.6 2269.2,1230.1 2269.6,1238.7 2269.9,1247.3 2270.2,1255.9 2270.4,1264.4 2270.6,1273.0 2270.8,1281.6 2271.0,1290.2 2271.1,1298.7 2271.2,1307.3 2271.2,1315.8 2271.2,1324.4 2271.2,1332.9 2271.1,1341.4 2271.0,1349.9 2270.9,1358.4 2270.7,1366.8 2270.4,1375.3 2270.2,1383.8 2269.9,1392.3 2269.5,1400.7 2269.1,1409.2 2268.7,1417.7 2268.2,1426.1 2267.7,1434.6 2267.7,1443.1 2268.6,1451.7 2269.9,1460.4 2271.3,1469.1 2272.6,1477.8 2273.8,1486.6 2275.0,1495.4 2276.1,1504.3 2277.2,1513.1 2278.3,1521.7 2281.9,1518.2 2303.0,1501.9 2305.4,1516.9 2303.3,1535.4 2287.1,1549.3 2270.3,1558.0 2253.3,1563.8 2236.0,1568.0 2218.5,1571.4 2200.8,1574.3 2182.7,1577.0 2164.2,1579.5 2145.3,1582.1 2125.8,1584.6 2105.7,1587.2 2088.0,1589.4 2071.4,1591.6 2054.4,1593.7 2037.0,1596.0 2019.4,1598.3 2001.5,1600.6 1983.3,1602.9 1965.0,1605.3 1946.6,1607.6 1928.1,1610.0 1909.5,1612.3 1890.9,1614.6 1872.3,1616.9 1853.8,1619.1 1835.3,1621.3 1817.1,1623.4 1799.0,1625.5 1780.7,1627.5 1761.8,1629.5 1742.4,1631.6 1722.7,1633.6 1702.8,1635.7 1682.8,1637.7 1662.9,1639.7 1643.1,1641.6 1623.7,1643.5 1604.7,1645.3 1586.3,1647.1 1568.6,1648.8 1551.8,1650.3 1535.9,1651.8 1521.1,1653.1 1507.5,1654.3 1487.5,1656.0 1460.3,1658.2 1442.0,1659.4 1428.5,1659.9 1415.8,1660.0 1400.0,1660.0 1384.2,1660.0 1371.5,1659.8 1358.1,1659.3 1339.7,1658.1 1312.4,1656.0 1292.4,1654.4 1278.8,1653.2 1264.1,1652.0 1248.2,1650.6 1231.3,1649.2 1213.6,1647.6 1195.2,1646.0 1176.2,1644.3 1156.8,1642.5 1137.0,1640.7 1117.1,1638.9 1097.1,1637.1 1077.2,1635.2 1057.5,1633.4 1038.1,1631.6 1019.2,1629.8 1000.9,1628.0 982.7,1626.3 964.5,1624.6 946.0,1622.8 927.5,1621.0 908.9,1619.2 890.2,1617.4 871.6,1615.5 853.1,1613.7 834.6,1611.8 816.3,1610.0 798.2,1608.2 780.3,1606.3 762.7,1604.5 745.3,1602.7 728.4,1601.0 711.8,1599.2 694.1,1597.3 674.1,1595.1 654.8,1592.8 635.9,1590.6 617.6,1588.3 599.7,1585.8 582.0,1583.1 564.7,1579.9 547.5,1575.8 530.6,1570.1 513.9,1561.6 497.7,1547.9 496.7,1530.3 499.0,1511.6 517.3,1524.5 519.7,1523.8 519.9,1515.5 520.1,1507.2 520.5,1498.9 521.0,1490.6 521.5,1482.3 522.2,1474.0 523.0,1465.8 523.8,1457.5 524.7,1449.3 525.4,1441.1 525.4,1432.9 524.6,1424.9 523.8,1416.7 523.1,1408.6 522.4,1400.4 521.8,1392.2 521.2,1383.9 520.7,1375.6 520.3,1367.2 519.9,1358.8 519.5,1350.4 519.2,1341.9 519.0,1333.3 518.7,1324.8 518.5,1316.1 518.3,1307.5 518.2,1298.8 518.1,1290.1 518.0,1281.4 517.9,1272.7 517.9,1263.9 517.9,1255.2 517.9,1246.5 517.9,1237.9 518.0,1229.2 518.1,1220.5 518.2,1211.8 518.4,1203.1 518.6,1194.5 518.8,1185.8 519.0,1177.2 519.3,1168.5 519.6,1159.9 520.0,1151.3 520.4,1142.7 520.8,1134.1 521.2,1125.5 521.7,1116.9 522.3,1108.3 522.8,1099.7 523.4,1091.2 524.0,1082.6 524.7,1074.1 525.4,1065.5 526.1,1057.0 526.9,1048.5 527.7,1040.0 528.6,1031.5 529.5,1023.1 530.4,1014.6 531.4,1006.2 532.4,997.7 533.5,989.3 534.6,980.9 535.8,972.5 537.0,964.1 538.2,955.8 539.5,947.4 540.8,939.1 542.1,930.8 543.6,922.4 545.0,914.2 546.5,905.9 548.1,897.6 549.7,889.4 551.3,881.1 553.0,872.9 554.7,864.7 556.5,856.5 558.3,848.3 560.2,840.2 562.2,832.1 564.1,823.9 566.2,815.8 568.2,807.8 570.4,799.7 572.5,791.7 574.8,783.6 577.0,775.6 579.3,767.7 581.7,759.7 584.1,751.8 586.6,743.8 589.2,736.0 591.7,728.1 594.4,720.2 597.0,712.4 599.8,704.6 602.6,696.8 605.4,689.0 608.3,681.3 611.2,673.6 614.2,665.9 617.3,658.2 620.4,650.6 623.5,643.0 626.7,635.4 630.0,627.8 633.3,620.2 636.7,612.7 640.1,605.2 643.6,597.7 647.1,590.2 650.7,582.8 654.3,575.4 658.0,568.0 661.8,560.7 665.5,553.4 669.3,546.2 673.1,539.1 677.0,532.1 680.8,525.3 684.7,518.5 688.7,511.9 692.7,505.4 696.7,499.0 700.7,492.8 704.8,486.7 708.9,480.7 713.1,474.9 717.3,469.2 721.5,463.7 725.8,458.3 730.2,453.0 734.6,447.9 739.1,442.9 743.6,438.0 748.3,433.3 753.0,428.6 758.0,424.1 763.1,419.5 768.3,415.1 773.7,410.7 779.2,406.3 784.9,402.1 790.7,397.9 796.6,393.8 802.7,389.8 808.8,385.8 815.1,382.0 821.5,378.2 828.0,374.5 834.7,370.8 841.4,367.3 848.2,363.8 855.2,360.4 862.2,357.1 869.3,353.8 876.5,350.7 883.9,347.6 891.3,344.6 899.0,341.6 907.0,338.7 915.1,335.7 923.5,332.8 932.0,329.8 940.8,326.7 949.6,323.5 958.6,320.2 967.6,316.7 976.7,313.0 985.8,309.1 994.6,305.0 1001.9,301.5 1006.4,299.1 1011.1,296.9 1015.8,294.6 1020.5,292.3 1025.3,289.8 1030.0,288.1 1000.0,120.0 60.0,120.0 60.0,1790.0 2800.0,1790.0 2800.0,120.0 1790.0,120.0Z" fill="#0c4889"/>
<path d="M1730.0,288.1L1739.0,290.2 1748.0,292.9 1757.0,295.5 1766.0,297.9 1775.0,300.3 1784.1,302.7 1793.1,304.9 1802.0,307.0 1810.5,309.2 1819.0,311.6 1827.4,314.2 1835.7,316.8 1844.0,319.6 1852.2,322.6 1860.2,325.7 1868.2,329.0 1876.1,332.4 1883.9,335.9 1891.6,339.5 1899.1,343.3 1906.5,347.3 1913.7,351.3 1920.8,355.5 1927.8,359.8 1934.5,364.2 1941.1,368.7 1947.5,373.4 1953.8,378.1 1959.8,383.0 1965.6,387.9 1971.2,392.9 1976.6,398.0 1981.8,403.2 1986.7,408.5 1991.4,413.8 1995.9,419.3 2000.3,424.8 2004.5,430.4 2008.6,436.2 2012.5,442.1 2016.4,448.1 2020.1,454.2 2023.8,460.4 2027.5,466.6 2031.6,472.4 2036.3,477.9 2041.1,483.3 2045.8,489.0 2050.5,494.8 2055.2,500.7 2059.8,506.8 2064.4,513.1 2068.9,519.4 2073.4,525.9 2077.8,532.5 2082.2,539.2 2086.6,546.0 2091.0,553.0 2095.3,560.0 2099.5,567.1 2103.7,574.2 2107.9,581.4 2112.0,588.6 2116.0,595.9 2120.0,603.1 2123.9,610.4 2127.8,617.8 2131.6,625.1 2135.3,632.5 2139.0,639.9 2142.6,647.4 2146.2,654.9 2149.7,662.4 2153.1,669.9 2156.5,677.5 2159.8,685.0 2163.1,692.7 2166.3,700.3 2169.5,708.0 2172.6,715.6 2175.7,723.4 2178.7,731.1 2181.6,738.9 2184.6,746.7 2187.4,754.5 2190.2,762.4 2193.0,770.2 2195.7,778.1 2198.3,786.1 2200.9,794.0 2203.5,802.0 2206.0,810.0 2208.5,818.0 2210.9,826.1 2213.3,834.1 2215.6,842.2 2217.9,850.3 2220.1,858.5 2222.3,866.6 2224.4,874.8 2226.5,883.0 2228.5,891.2 2230.5,899.4 2232.5,907.7 2234.4,915.9 2236.2,924.2 2238.1,932.5 2239.8,940.8 2241.6,949.2 2243.2,957.5 2244.9,965.9 2246.5,974.2 2248.0,982.6 2249.6,991.0 2251.0,999.4 2252.4,1007.8 2253.8,1016.3 2255.2,1024.7 2256.5,1033.2 2257.7,1041.7 2258.9,1050.1 2260.1,1058.6 2261.2,1067.1 2262.3,1075.6 2263.4,1084.2 2264.4,1092.7 2265.4,1101.2 2266.3,1109.8 2267.2,1118.3 2268.0,1126.9 2268.8,1135.4 2269.6,1144.0 2270.3,1152.6 2271.0,1161.2 2271.7,1169.7 2272.3,1178.3 2272.9,1186.9 2273.4,1195.5 2273.9,1204.1 2274.4,1212.7 2274.8,1221.3 2275.2,1229.9 2275.6,1238.5 2275.9,1247.1 2276.2,1255.7 2276.4,1264.3 2276.6,1272.9 2276.8,1281.5 2277.0,1290.1 2277.1,1298.7 2277.2,1307.2 2277.2,1315.8 2277.2,1324.4 2277.2,1332.9 2277.1,1341.4 2277.0,1350.0 2276.9,1358.5 2276.7,1367.0 2276.4,1375.5 2276.2,1384.0 2275.9,1392.5 2275.5,1401.0 2275.1,1409.5 2274.7,1418.0 2274.2,1426.5 2273.7,1435.0 2273.7,1443.5 2274.4,1452.2 2275.7,1460.8 2276.9,1469.6 2278.0,1478.3 2279.1,1487.1 2280.2,1495.9 2281.2,1504.8 2282.2,1513.7 2283.1,1522.3 2286.4,1519.6 2306.2,1504.8 2306.6,1520.0 2303.5,1537.5 2287.2,1550.7 2270.5,1559.0 2253.4,1564.6 2236.1,1568.7 2218.6,1572.0 2200.8,1574.9 2182.7,1577.5 2164.3,1580.1 2145.4,1582.6 2125.9,1585.1 2105.8,1587.7 2088.1,1590.0 2071.4,1592.1 2054.4,1594.3 2037.1,1596.5 2019.4,1598.8 2001.5,1601.1 1983.4,1603.4 1965.1,1605.8 1946.7,1608.1 1928.1,1610.5 1909.5,1612.8 1890.9,1615.1 1872.3,1617.4 1853.8,1619.6 1835.4,1621.8 1817.1,1623.9 1799.1,1626.0 1780.7,1628.0 1761.8,1630.1 1742.5,1632.1 1722.8,1634.2 1702.8,1636.2 1682.9,1638.2 1662.9,1640.2 1643.2,1642.2 1623.8,1644.1 1604.8,1645.9 1586.4,1647.6 1568.7,1649.3 1551.8,1650.9 1535.9,1652.3 1521.1,1653.6 1507.6,1654.8 1487.6,1656.6 1460.3,1658.8 1442.0,1660.0 1428.5,1660.5 1415.8,1660.6 1400.0,1660.5 1384.2,1660.5 1371.5,1660.4 1358.0,1659.8 1339.6,1658.6 1312.4,1656.5 1292.4,1654.9 1278.8,1653.8 1264.0,1652.5 1248.1,1651.2 1231.3,1649.7 1213.6,1648.1 1195.2,1646.5 1176.2,1644.8 1156.7,1643.0 1137.0,1641.3 1117.1,1639.4 1097.1,1637.6 1077.2,1635.7 1057.4,1633.9 1038.1,1632.1 1019.1,1630.3 1000.8,1628.6 982.7,1626.9 964.4,1625.1 946.0,1623.3 927.4,1621.5 908.8,1619.7 890.2,1617.9 871.6,1616.1 853.0,1614.2 834.6,1612.4 816.3,1610.5 798.1,1608.7 780.2,1606.9 762.6,1605.1 745.3,1603.3 728.3,1601.5 711.7,1599.7 694.1,1597.8 674.1,1595.6 654.7,1593.4 635.9,1591.1 617.5,1588.8 599.6,1586.4 582.0,1583.7 564.6,1580.6 547.4,1576.6 530.5,1571.1 513.7,1563.0 497.5,1550.0 495.5,1533.3 495.9,1514.5 513.0,1526.1 515.1,1524.9 515.1,1516.6 515.3,1508.2 515.5,1499.9 515.8,1491.5 516.3,1483.2 516.8,1474.9 517.4,1466.6 518.1,1458.3 518.9,1450.0 519.5,1441.8 519.4,1433.6 518.6,1425.5 517.8,1417.3 517.1,1409.1 516.4,1400.9 515.8,1392.6 515.3,1384.3 514.8,1375.9 514.3,1367.5 513.9,1359.1 513.6,1350.6 513.2,1342.1 513.0,1333.5 512.7,1324.9 512.5,1316.3 512.4,1307.6 512.2,1298.9 512.1,1290.2 512.0,1281.4 511.9,1272.7 511.9,1264.0 511.9,1255.2 511.9,1246.5 511.9,1237.8 512.0,1229.1 512.1,1220.4 512.2,1211.7 512.4,1203.0 512.6,1194.3 512.8,1185.7 513.1,1177.0 513.3,1168.3 513.7,1159.7 514.0,1151.0 514.4,1142.4 514.8,1133.8 515.3,1125.1 515.8,1116.5 516.3,1107.9 516.8,1099.3 517.4,1090.7 518.1,1082.2 518.7,1073.6 519.4,1065.0 520.2,1056.5 521.0,1048.0 521.8,1039.4 522.7,1030.9 523.6,1022.4 524.5,1013.9 525.5,1005.5 526.5,997.0 527.6,988.5 528.7,980.1 529.8,971.7 531.0,963.3 532.3,954.9 533.6,946.5 534.9,938.1 536.3,929.8 537.7,921.4 539.2,913.1 540.7,904.8 542.2,896.5 543.8,888.2 545.5,879.9 547.2,871.7 548.9,863.4 550.7,855.2 552.6,847.0 554.5,838.8 556.4,830.6 558.4,822.5 560.4,814.3 562.5,806.2 564.6,798.1 566.8,790.1 569.1,782.0 571.4,774.0 573.7,765.9 576.1,757.9 578.5,750.0 581.0,742.0 583.6,734.1 586.2,726.2 588.8,718.3 591.5,710.4 594.3,702.6 597.1,694.7 599.9,686.9 602.9,679.2 605.8,671.4 608.8,663.7 611.9,656.0 615.1,648.3 618.2,640.6 621.5,633.0 624.8,625.4 628.1,617.8 631.5,610.2 635.0,602.7 638.5,595.1 642.0,587.6 645.7,580.2 649.3,572.7 653.1,565.3 656.8,557.9 660.6,550.6 664.5,543.4 668.3,536.2 672.2,529.2 676.1,522.3 680.1,515.5 684.1,508.8 688.1,502.3 692.2,495.8 696.3,489.5 700.5,483.3 704.7,477.3 709.0,471.4 713.3,465.7 717.6,460.1 722.0,454.6 726.5,449.3 731.0,444.1 735.6,439.1 740.3,434.1 745.1,429.4 750.0,424.6 755.1,420.0 760.3,415.4 765.7,411.0 771.2,406.5 776.9,402.2 782.7,398.0 788.6,393.8 794.7,389.7 800.9,385.7 807.2,381.8 813.6,377.9 820.1,374.2 826.7,370.5 833.5,366.9 840.3,363.4 847.3,360.0 854.3,356.7 861.5,353.5 868.7,350.3 876.0,347.3 883.4,344.3 891.0,341.4 898.8,338.6 906.8,335.8 915.0,333.0 923.4,330.2 932.0,327.3 940.7,324.4 949.6,321.4 958.5,318.3 967.6,315.0 976.6,311.5 985.7,307.8 994.5,304.0 1001.8,300.7 1006.4,298.4 1011.1,296.3 1015.8,294.2 1020.5,292.0 1025.3,289.7 1030.0,288.1 1000.0,120.0 60.0,120.0 60.0,1790.0 2800.0,1790.0 2800.0,120.0 1790.0,120.0Z" fill="#0e4788"/>
<path d="M1730.0,288.1L1739.0,290.0 1748.0,292.6 1757.0,295.0 1766.0,297.3 1775.0,299.5 1784.1,301.7 1793.1,303.8 1801.9,305.7 1810.5,307.8 1819.0,310.1 1827.5,312.4 1835.8,315.0 1844.1,317.7 1852.4,320.5 1860.5,323.5 1868.6,326.6 1876.5,329.9 1884.4,333.3 1892.1,336.8 1899.8,340.5 1907.2,344.3 1914.6,348.2 1921.8,352.3 1928.8,356.5 1935.7,360.8 1942.4,365.3 1949.0,369.8 1955.3,374.5 1961.5,379.2 1967.5,384.1 1973.2,389.1 1978.8,394.1 1984.1,399.3 1989.2,404.5 1994.1,409.8 1998.8,415.2 2003.3,420.7 2007.7,426.3 2012.0,432.1 2016.1,438.0 2020.1,444.0 2024.1,450.1 2027.9,456.3 2031.7,462.5 2036.0,468.4 2040.8,473.9 2045.7,479.5 2050.5,485.2 2055.2,491.1 2059.9,497.1 2064.6,503.2 2069.2,509.5 2073.8,516.0 2078.3,522.5 2082.8,529.2 2087.3,535.9 2091.7,542.8 2096.1,549.8 2100.4,556.9 2104.7,564.0 2108.9,571.2 2113.1,578.4 2117.2,585.7 2121.3,593.0 2125.3,600.3 2129.2,607.6 2133.1,615.0 2136.9,622.4 2140.7,629.8 2144.4,637.3 2148.0,644.8 2151.6,652.3 2155.1,659.8 2158.6,667.4 2162.0,675.0 2165.3,682.6 2168.6,690.3 2171.9,698.0 2175.1,705.7 2178.2,713.4 2181.3,721.2 2184.3,729.0 2187.3,736.8 2190.2,744.6 2193.1,752.5 2195.9,760.4 2198.6,768.3 2201.4,776.2 2204.0,784.2 2206.6,792.2 2209.2,800.2 2211.7,808.2 2214.2,816.3 2216.6,824.4 2219.0,832.5 2221.3,840.6 2223.6,848.7 2225.9,856.9 2228.1,865.1 2230.2,873.3 2232.3,881.5 2234.4,889.8 2236.4,898.0 2238.3,906.3 2240.2,914.6 2242.1,922.9 2243.9,931.2 2245.7,939.6 2247.4,947.9 2249.1,956.3 2250.8,964.7 2252.4,973.1 2253.9,981.5 2255.5,990.0 2256.9,998.4 2258.4,1006.9 2259.7,1015.3 2261.1,1023.8 2262.4,1032.3 2263.7,1040.8 2264.9,1049.3 2266.0,1057.8 2267.2,1066.4 2268.3,1074.9 2269.3,1083.4 2270.3,1092.0 2271.3,1100.6 2272.2,1109.1 2273.1,1117.7 2274.0,1126.3 2274.8,1134.9 2275.6,1143.5 2276.3,1152.1 2277.0,1160.7 2277.7,1169.3 2278.3,1177.9 2278.9,1186.5 2279.4,1195.1 2279.9,1203.8 2280.4,1212.4 2280.8,1221.0 2281.2,1229.6 2281.6,1238.2 2281.9,1246.9 2282.2,1255.5 2282.4,1264.1 2282.6,1272.7 2282.8,1281.4 2283.0,1290.0 2283.1,1298.6 2283.2,1307.2 2283.2,1315.8 2283.2,1324.4 2283.2,1332.9 2283.1,1341.5 2283.0,1350.1 2282.8,1358.6 2282.7,1367.1 2282.4,1375.7 2282.2,1384.2 2281.9,1392.7 2281.5,1401.2 2281.1,1409.8 2280.7,1418.3 2280.2,1426.8 2279.7,1435.4 2279.6,1443.9 2280.3,1452.6 2281.4,1461.3 2282.5,1470.1 2283.5,1478.8 2284.5,1487.6 2285.4,1496.5 2286.3,1505.4 2287.1,1514.3 2288.0,1522.9 2291.0,1521.0 2309.4,1507.7 2307.8,1523.1 2303.8,1539.6 2287.4,1552.1 2270.6,1560.0 2253.5,1565.4 2236.2,1569.4 2218.7,1572.6 2200.9,1575.5 2182.8,1578.1 2164.4,1580.6 2145.4,1583.1 2126.0,1585.7 2105.9,1588.2 2088.1,1590.5 2071.5,1592.6 2054.5,1594.8 2037.1,1597.1 2019.5,1599.3 2001.6,1601.6 1983.5,1604.0 1965.2,1606.3 1946.7,1608.7 1928.2,1611.0 1909.6,1613.4 1891.0,1615.7 1872.4,1618.0 1853.9,1620.2 1835.5,1622.4 1817.2,1624.5 1799.1,1626.5 1780.8,1628.6 1761.9,1630.6 1742.5,1632.7 1722.8,1634.7 1702.9,1636.7 1682.9,1638.8 1663.0,1640.8 1643.2,1642.7 1623.8,1644.6 1604.8,1646.4 1586.4,1648.2 1568.7,1649.8 1551.9,1651.4 1536.0,1652.8 1521.2,1654.2 1507.6,1655.4 1487.6,1657.1 1460.4,1659.3 1442.0,1660.5 1428.5,1661.0 1415.8,1661.1 1400.0,1661.1 1384.2,1661.1 1371.5,1660.9 1358.0,1660.3 1339.6,1659.1 1312.4,1657.0 1292.3,1655.4 1278.8,1654.3 1264.0,1653.1 1248.1,1651.7 1231.2,1650.2 1213.5,1648.7 1195.1,1647.0 1176.1,1645.3 1156.7,1643.6 1137.0,1641.8 1117.0,1640.0 1097.0,1638.1 1077.1,1636.3 1057.4,1634.4 1038.0,1632.6 1019.1,1630.9 1000.7,1629.1 982.6,1627.4 964.4,1625.6 945.9,1623.9 927.4,1622.1 908.8,1620.3 890.1,1618.4 871.5,1616.6 853.0,1614.8 834.5,1612.9 816.2,1611.1 798.1,1609.2 780.2,1607.4 762.6,1605.6 745.2,1603.8 728.3,1602.0 711.7,1600.3 694.0,1598.4 674.0,1596.1 654.6,1593.9 635.8,1591.7 617.5,1589.4 599.5,1587.0 581.9,1584.3 564.5,1581.2 547.3,1577.4 530.3,1572.2 513.6,1564.4 497.2,1552.1 494.2,1536.4 492.8,1517.4 508.7,1527.7 510.5,1526.0 510.4,1517.6 510.4,1509.2 510.5,1500.9 510.7,1492.5 511.0,1484.1 511.4,1475.8 511.9,1467.5 512.5,1459.1 513.2,1450.8 513.6,1442.5 513.5,1434.3 512.7,1426.1 511.9,1417.9 511.1,1409.6 510.4,1401.3 509.8,1393.0 509.3,1384.7 508.8,1376.3 508.3,1367.8 507.9,1359.3 507.6,1350.8 507.2,1342.3 507.0,1333.7 506.7,1325.1 506.5,1316.4 506.4,1307.7 506.2,1299.0 506.1,1290.2 506.0,1281.5 505.9,1272.7 505.9,1264.0 505.9,1255.2 505.9,1246.5 505.9,1237.8 506.0,1229.0 506.1,1220.3 506.2,1211.6 506.4,1202.9 506.6,1194.2 506.8,1185.5 507.1,1176.8 507.4,1168.1 507.7,1159.4 508.0,1150.8 508.4,1142.1 508.8,1133.4 509.3,1124.8 509.8,1116.2 510.3,1107.5 510.9,1098.9 511.5,1090.3 512.1,1081.7 512.8,1073.1 513.5,1064.5 514.2,1055.9 515.0,1047.4 515.8,1038.8 516.7,1030.3 517.6,1021.8 518.6,1013.2 519.6,1004.7 520.6,996.2 521.7,987.8 522.8,979.3 523.9,970.8 525.1,962.4 526.4,954.0 527.7,945.5 529.0,937.1 530.4,928.8 531.8,920.4 533.3,912.0 534.8,903.7 536.4,895.3 538.0,887.0 539.7,878.7 541.4,870.4 543.1,862.1 544.9,853.9 546.8,845.6 548.7,837.4 550.6,829.2 552.6,821.0 554.7,812.8 556.8,804.7 558.9,796.6 561.1,788.4 563.4,780.4 565.7,772.3 568.1,764.2 570.5,756.2 572.9,748.2 575.4,740.2 578.0,732.2 580.6,724.3 583.3,716.3 586.0,708.4 588.8,700.5 591.6,692.7 594.5,684.8 597.4,677.0 600.4,669.2 603.5,661.5 606.6,653.7 609.7,646.0 612.9,638.3 616.2,630.6 619.5,623.0 622.9,615.3 626.3,607.7 629.8,600.1 633.4,592.6 637.0,585.0 640.6,577.5 644.3,570.0 648.1,562.6 651.9,555.2 655.7,547.8 659.6,540.5 663.5,533.4 667.5,526.3 671.5,519.3 675.5,512.5 679.5,505.7 683.6,499.1 687.8,492.6 692.0,486.3 696.2,480.0 700.5,473.9 704.9,468.0 709.3,462.2 713.7,456.5 718.3,451.0 722.9,445.6 727.5,440.3 732.2,435.2 737.0,430.2 742.0,425.4 747.0,420.6 752.2,416.0 757.6,411.4 763.1,406.8 768.8,402.4 774.6,398.1 780.5,393.8 786.6,389.6 792.7,385.6 799.1,381.6 805.5,377.7 812.0,373.9 818.7,370.2 825.5,366.5 832.3,363.0 839.3,359.6 846.4,356.3 853.5,353.0 860.8,349.9 868.1,346.8 875.5,343.9 883.0,341.0 890.7,338.2 898.6,335.5 906.6,332.9 914.9,330.2 923.3,327.6 931.9,324.9 940.7,322.2 949.5,319.4 958.5,316.4 967.5,313.3 976.6,310.1 985.7,306.6 994.5,302.9 1001.8,299.8 1006.4,297.7 1011.1,295.7 1015.8,293.7 1020.5,291.7 1025.3,289.6 1030.0,288.0 1000.0,120.0 60.0,120.0 60.0,1790.0 2800.0,1790.0 2800.0,120.0 1790.0,120.0Z" fill="#194288"/>
<path d="M1730.0,288.0L1739.0,289.8 1748.0,292.2 1757.0,294.4 1766.0,296.6 1775.0,298.7 1784.1,300.7 1793.1,302.6 1801.9,304.4 1810.5,306.4 1819.1,308.5 1827.5,310.7 1836.0,313.2 1844.3,315.7 1852.6,318.4 1860.8,321.2 1868.9,324.2 1877.0,327.4 1884.9,330.6 1892.7,334.1 1900.4,337.6 1908.0,341.3 1915.4,345.2 1922.7,349.1 1929.9,353.2 1936.9,357.4 1943.7,361.8 1950.4,366.2 1956.9,370.8 1963.2,375.5 1969.3,380.3 1975.2,385.2 1980.9,390.2 1986.4,395.3 1991.7,400.5 1996.8,405.8 2001.6,411.1 2006.4,416.6 2010.9,422.2 2015.4,428.0 2019.7,433.8 2023.9,439.8 2028.0,445.9 2032.0,452.2 2036.0,458.4 2040.5,464.3 2045.3,469.9 2050.2,475.6 2055.1,481.4 2059.9,487.3 2064.7,493.4 2069.4,499.7 2074.1,506.0 2078.7,512.5 2083.3,519.1 2087.8,525.8 2092.3,532.7 2096.8,539.6 2101.2,546.6 2105.5,553.7 2109.8,560.9 2114.1,568.2 2118.3,575.4 2122.5,582.7 2126.5,590.1 2130.6,597.4 2134.5,604.8 2138.4,612.2 2142.3,619.7 2146.0,627.2 2149.8,634.7 2153.4,642.2 2157.0,649.7 2160.5,657.3 2164.0,664.9 2167.5,672.6 2170.8,680.2 2174.1,687.9 2177.4,695.7 2180.6,703.4 2183.8,711.2 2186.8,719.0 2189.9,726.8 2192.9,734.7 2195.8,742.5 2198.7,750.4 2201.5,758.4 2204.3,766.3 2207.0,774.3 2209.7,782.3 2212.4,790.3 2214.9,798.4 2217.5,806.4 2220.0,814.5 2222.4,822.6 2224.8,830.8 2227.1,839.0 2229.4,847.1 2231.7,855.3 2233.9,863.6 2236.0,871.8 2238.1,880.1 2240.2,888.3 2242.2,896.6 2244.2,904.9 2246.1,913.3 2248.0,921.6 2249.8,930.0 2251.6,938.4 2253.3,946.7 2255.0,955.2 2256.7,963.6 2258.3,972.0 2259.8,980.5 2261.4,988.9 2262.8,997.4 2264.3,1005.9 2265.7,1014.4 2267.0,1022.9 2268.3,1031.4 2269.6,1039.9 2270.8,1048.5 2272.0,1057.0 2273.1,1065.6 2274.2,1074.2 2275.3,1082.7 2276.3,1091.3 2277.3,1099.9 2278.2,1108.5 2279.1,1117.1 2280.0,1125.7 2280.8,1134.3 2281.6,1143.0 2282.3,1151.6 2283.0,1160.2 2283.6,1168.8 2284.3,1177.5 2284.9,1186.1 2285.4,1194.8 2285.9,1203.4 2286.4,1212.1 2286.8,1220.7 2287.2,1229.4 2287.6,1238.0 2287.9,1246.7 2288.2,1255.3 2288.4,1264.0 2288.6,1272.6 2288.8,1281.2 2289.0,1289.9 2289.1,1298.5 2289.2,1307.2 2289.2,1315.8 2289.2,1324.4 2289.2,1333.0 2289.1,1341.6 2289.0,1350.1 2288.8,1358.7 2288.7,1367.3 2288.4,1375.8 2288.2,1384.4 2287.9,1393.0 2287.5,1401.5 2287.1,1410.1 2286.7,1418.6 2286.2,1427.2 2285.6,1435.8 2285.6,1444.4 2286.1,1453.0 2287.1,1461.8 2288.1,1470.5 2289.0,1479.3 2289.9,1488.2 2290.7,1497.0 2291.4,1505.9 2292.1,1514.9 2292.8,1523.5 2295.5,1522.4 2312.6,1510.6 2309.0,1526.1 2304.1,1541.7 2287.6,1553.5 2270.7,1561.0 2253.6,1566.2 2236.3,1570.1 2218.7,1573.2 2201.0,1576.0 2182.9,1578.7 2164.4,1581.2 2145.5,1583.7 2126.0,1586.2 2105.9,1588.8 2088.2,1591.0 2071.6,1593.2 2054.6,1595.4 2037.2,1597.6 2019.6,1599.9 2001.7,1602.2 1983.5,1604.5 1965.2,1606.9 1946.8,1609.2 1928.3,1611.6 1909.7,1613.9 1891.1,1616.2 1872.5,1618.5 1854.0,1620.7 1835.5,1622.9 1817.3,1625.0 1799.2,1627.1 1780.9,1629.1 1761.9,1631.1 1742.6,1633.2 1722.9,1635.2 1703.0,1637.3 1683.0,1639.3 1663.0,1641.3 1643.3,1643.2 1623.9,1645.1 1604.9,1647.0 1586.5,1648.7 1568.8,1650.4 1551.9,1651.9 1536.0,1653.4 1521.2,1654.7 1507.7,1655.9 1487.7,1657.7 1460.4,1659.9 1442.0,1661.1 1428.5,1661.6 1415.8,1661.7 1400.0,1661.6 1384.2,1661.6 1371.5,1661.4 1358.0,1660.9 1339.6,1659.7 1312.3,1657.6 1292.3,1656.0 1278.7,1654.9 1263.9,1653.6 1248.0,1652.2 1231.2,1650.8 1213.5,1649.2 1195.1,1647.6 1176.1,1645.9 1156.6,1644.1 1136.9,1642.3 1117.0,1640.5 1097.0,1638.7 1077.1,1636.8 1057.3,1635.0 1038.0,1633.2 1019.0,1631.4 1000.7,1629.7 982.6,1627.9 964.3,1626.2 945.9,1624.4 927.3,1622.6 908.7,1620.8 890.1,1619.0 871.5,1617.1 852.9,1615.3 834.5,1613.5 816.2,1611.6 798.0,1609.8 780.1,1608.0 762.5,1606.1 745.2,1604.3 728.2,1602.6 711.6,1600.8 694.0,1598.9 673.9,1596.7 654.6,1594.5 635.8,1592.2 617.4,1590.0 599.5,1587.6 581.8,1584.9 564.4,1581.9 547.2,1578.2 530.2,1573.2 513.4,1565.8 497.0,1554.2 493.0,1539.4 489.7,1520.3 504.3,1529.3 505.9,1527.1 505.6,1518.7 505.5,1510.3 505.5,1501.8 505.5,1493.4 505.7,1485.1 506.0,1476.7 506.4,1468.3 506.8,1459.9 507.4,1451.5 507.8,1443.2 507.5,1434.9 506.7,1426.7 505.9,1418.4 505.1,1410.1 504.5,1401.8 503.9,1393.4 503.3,1385.0 502.8,1376.6 502.3,1368.1 501.9,1359.6 501.6,1351.1 501.3,1342.5 501.0,1333.9 500.7,1325.2 500.5,1316.5 500.4,1307.8 500.2,1299.1 500.1,1290.3 500.0,1281.5 499.9,1272.8 499.9,1264.0 499.9,1255.2 499.9,1246.5 499.9,1237.7 500.0,1229.0 500.1,1220.2 500.3,1211.5 500.4,1202.8 500.6,1194.0 500.8,1185.3 501.1,1176.6 501.4,1167.9 501.7,1159.2 502.0,1150.5 502.4,1141.8 502.9,1133.1 503.3,1124.5 503.8,1115.8 504.3,1107.1 504.9,1098.5 505.5,1089.9 506.1,1081.2 506.8,1072.6 507.5,1064.0 508.3,1055.4 509.1,1046.8 509.9,1038.2 510.8,1029.7 511.7,1021.1 512.6,1012.6 513.6,1004.0 514.7,995.5 515.7,987.0 516.9,978.5 518.0,970.0 519.2,961.5 520.5,953.1 521.8,944.6 523.1,936.2 524.5,927.7 526.0,919.3 527.4,910.9 529.0,902.6 530.5,894.2 532.2,885.8 533.8,877.5 535.5,869.2 537.3,860.9 539.1,852.6 541.0,844.3 542.9,836.0 544.9,827.8 546.9,819.6 548.9,811.4 551.1,803.2 553.2,795.0 555.4,786.8 557.7,778.7 560.0,770.6 562.4,762.5 564.8,754.4 567.3,746.4 569.8,738.3 572.4,730.3 575.1,722.3 577.7,714.4 580.5,706.4 583.3,698.5 586.1,690.6 589.0,682.7 592.0,674.9 595.0,667.0 598.1,659.2 601.2,651.4 604.4,643.7 607.6,635.9 610.9,628.2 614.3,620.5 617.7,612.9 621.1,605.2 624.7,597.6 628.2,590.0 631.9,582.4 635.6,574.9 639.3,567.4 643.1,559.9 647.0,552.4 650.8,545.0 654.8,537.7 658.7,530.5 662.7,523.4 666.8,516.4 670.8,509.5 675.0,502.7 679.1,496.0 683.4,489.4 687.6,483.0 692.0,476.7 696.4,470.5 700.8,464.5 705.3,458.6 709.9,452.9 714.5,447.3 719.2,441.8 724.0,436.5 728.8,431.4 733.8,426.3 738.8,421.4 744.0,416.6 749.4,411.9 754.9,407.3 760.5,402.7 766.3,398.3 772.2,393.9 778.3,389.7 784.5,385.5 790.8,381.4 797.3,377.5 803.8,373.6 810.5,369.8 817.3,366.2 824.2,362.6 831.2,359.1 838.2,355.7 845.4,352.5 852.7,349.3 860.0,346.3 867.5,343.3 875.0,340.5 882.6,337.7 890.4,335.1 898.3,332.5 906.4,330.0 914.7,327.5 923.2,325.0 931.9,322.5 940.6,319.9 949.5,317.3 958.5,314.5 967.5,311.6 976.6,308.6 985.6,305.3 994.5,301.9 1001.8,299.0 1006.4,297.0 1011.1,295.2 1015.8,293.3 1020.5,291.4 1025.3,289.4 1030.0,288.0 1000.0,120.0 60.0,120.0 60.0,1790.0 2800.0,1790.0 2800.0,120.0 1790.0,120.0Z" fill="#2e3a88"/>
<path d="M1730.0,287.9L1739.0,289.6 1748.0,291.8 1757.0,293.9 1766.0,295.9 1775.0,297.8 1784.1,299.7 1793.1,301.5 1801.9,303.2 1810.6,305.0 1819.1,306.9 1827.6,309.0 1836.1,311.3 1844.5,313.7 1852.8,316.3 1861.1,319.0 1869.3,321.9 1877.4,324.9 1885.4,328.0 1893.3,331.3 1901.1,334.8 1908.7,338.4 1916.3,342.1 1923.7,345.9 1931.0,349.9 1938.1,354.0 1945.0,358.3 1951.8,362.7 1958.5,367.2 1964.9,371.8 1971.2,376.5 1977.2,381.4 1983.1,386.3 1988.8,391.3 1994.2,396.5 1999.4,401.7 2004.5,407.1 2009.4,412.5 2014.2,418.1 2018.8,423.9 2023.3,429.7 2027.7,435.7 2032.0,441.8 2036.1,448.1 2040.3,454.3 2044.9,460.2 2049.8,465.9 2054.8,471.7 2059.7,477.5 2064.6,483.6 2069.4,489.8 2074.2,496.1 2078.9,502.5 2083.6,509.1 2088.2,515.7 2092.8,522.5 2097.3,529.4 2101.8,536.4 2106.3,543.5 2110.7,550.6 2115.0,557.9 2119.3,565.1 2123.5,572.5 2127.7,579.8 2131.8,587.2 2135.8,594.6 2139.8,602.0 2143.7,609.5 2147.6,617.0 2151.4,624.5 2155.1,632.0 2158.8,639.6 2162.4,647.2 2166.0,654.8 2169.5,662.5 2172.9,670.1 2176.3,677.9 2179.7,685.6 2182.9,693.3 2186.2,701.1 2189.3,708.9 2192.4,716.8 2195.5,724.7 2198.5,732.5 2201.4,740.5 2204.3,748.4 2207.2,756.4 2210.0,764.3 2212.7,772.4 2215.4,780.4 2218.1,788.5 2220.7,796.5 2223.2,804.7 2225.7,812.8 2228.1,820.9 2230.5,829.1 2232.9,837.3 2235.2,845.5 2237.5,853.8 2239.7,862.0 2241.8,870.3 2243.9,878.6 2246.0,886.9 2248.0,895.2 2250.0,903.6 2251.9,911.9 2253.8,920.3 2255.7,928.7 2257.5,937.1 2259.2,945.5 2260.9,954.0 2262.6,962.4 2264.2,970.9 2265.7,979.4 2267.3,987.9 2268.8,996.4 2270.2,1004.9 2271.6,1013.4 2272.9,1022.0 2274.3,1030.5 2275.5,1039.1 2276.8,1047.6 2277.9,1056.2 2279.1,1064.8 2280.2,1073.4 2281.2,1082.0 2282.3,1090.6 2283.2,1099.2 2284.2,1107.9 2285.1,1116.5 2285.9,1125.1 2286.8,1133.8 2287.5,1142.4 2288.3,1151.1 2289.0,1159.7 2289.6,1168.4 2290.3,1177.1 2290.8,1185.7 2291.4,1194.4 2291.9,1203.1 2292.4,1211.7 2292.8,1220.4 2293.2,1229.1 2293.6,1237.8 2293.9,1246.4 2294.2,1255.1 2294.4,1263.8 2294.6,1272.5 2294.8,1281.1 2295.0,1289.8 2295.1,1298.5 2295.2,1307.1 2295.2,1315.8 2295.2,1324.4 2295.2,1333.0 2295.1,1341.6 2295.0,1350.2 2294.8,1358.8 2294.7,1367.4 2294.4,1376.0 2294.2,1384.6 2293.9,1393.2 2293.5,1401.8 2293.1,1410.4 2292.7,1419.0 2292.2,1427.5 2291.6,1436.1 2291.5,1444.8 2292.0,1453.5 2292.9,1462.2 2293.7,1471.0 2294.5,1479.9 2295.2,1488.7 2295.9,1497.6 2296.5,1506.5 2297.1,1515.4 2297.6,1524.2 2300.1,1523.7 2315.8,1513.5 2310.3,1529.2 2304.3,1543.8 2287.8,1554.9 2270.8,1562.0 2253.7,1567.0 2236.4,1570.8 2218.8,1573.9 2201.0,1576.6 2183.0,1579.2 2164.5,1581.7 2145.6,1584.2 2126.1,1586.8 2106.0,1589.3 2088.3,1591.6 2071.7,1593.7 2054.6,1595.9 2037.3,1598.1 2019.6,1600.4 2001.7,1602.7 1983.6,1605.1 1965.3,1607.4 1946.9,1609.8 1928.3,1612.1 1909.7,1614.4 1891.1,1616.7 1872.5,1619.0 1854.0,1621.3 1835.6,1623.4 1817.3,1625.6 1799.2,1627.6 1780.9,1629.6 1762.0,1631.7 1742.6,1633.7 1722.9,1635.8 1703.0,1637.8 1683.0,1639.8 1663.1,1641.8 1643.4,1643.8 1623.9,1645.7 1604.9,1647.5 1586.5,1649.2 1568.8,1650.9 1552.0,1652.5 1536.1,1653.9 1521.3,1655.3 1507.7,1656.5 1487.7,1658.2 1460.5,1660.4 1442.1,1661.6 1428.5,1662.1 1415.8,1662.2 1400.0,1662.2 1384.2,1662.2 1371.5,1662.0 1357.9,1661.4 1339.5,1660.2 1312.3,1658.1 1292.2,1656.5 1278.7,1655.4 1263.9,1654.1 1248.0,1652.8 1231.1,1651.3 1213.4,1649.8 1195.0,1648.1 1176.0,1646.4 1156.6,1644.7 1136.9,1642.9 1116.9,1641.0 1096.9,1639.2 1077.0,1637.4 1057.3,1635.5 1037.9,1633.7 1019.0,1631.9 1000.6,1630.2 982.5,1628.5 964.3,1626.7 945.8,1624.9 927.3,1623.1 908.7,1621.3 890.0,1619.5 871.4,1617.7 852.9,1615.8 834.4,1614.0 816.1,1612.2 798.0,1610.3 780.1,1608.5 762.4,1606.7 745.1,1604.9 728.1,1603.1 711.6,1601.3 693.9,1599.4 673.9,1597.2 654.5,1595.0 635.7,1592.8 617.3,1590.5 599.4,1588.1 581.7,1585.6 564.3,1582.6 547.1,1579.0 530.1,1574.2 513.2,1567.2 496.7,1556.3 491.7,1542.5 486.6,1523.2 500.0,1530.9 501.3,1528.2 500.9,1519.8 500.6,1511.3 500.5,1502.8 500.4,1494.4 500.5,1486.0 500.6,1477.6 500.8,1469.1 501.2,1460.7 501.6,1452.3 501.9,1443.9 501.5,1435.6 500.7,1427.3 499.9,1419.0 499.2,1410.6 498.5,1402.3 497.9,1393.9 497.3,1385.4 496.8,1376.9 496.3,1368.4 495.9,1359.9 495.6,1351.3 495.3,1342.7 495.0,1334.0 494.7,1325.4 494.5,1316.7 494.4,1307.9 494.2,1299.1 494.1,1290.4 494.0,1281.6 494.0,1272.8 493.9,1264.0 493.9,1255.2 493.9,1246.5 494.0,1237.7 494.0,1228.9 494.1,1220.2 494.3,1211.4 494.4,1202.6 494.6,1193.9 494.8,1185.2 495.1,1176.4 495.4,1167.7 495.7,1159.0 496.1,1150.2 496.5,1141.5 496.9,1132.8 497.3,1124.1 497.8,1115.4 498.4,1106.8 498.9,1098.1 499.5,1089.4 500.2,1080.8 500.8,1072.1 501.6,1063.5 502.3,1054.9 503.1,1046.2 503.9,1037.6 504.8,1029.0 505.7,1020.4 506.7,1011.9 507.7,1003.3 508.7,994.7 509.8,986.2 510.9,977.7 512.1,969.2 513.3,960.6 514.6,952.2 515.9,943.7 517.2,935.2 518.6,926.7 520.1,918.3 521.6,909.9 523.1,901.5 524.7,893.1 526.3,884.7 528.0,876.3 529.7,867.9 531.5,859.6 533.3,851.3 535.2,842.9 537.1,834.6 539.1,826.4 541.1,818.1 543.2,809.9 545.3,801.6 547.5,793.4 549.8,785.2 552.0,777.1 554.4,768.9 556.8,760.8 559.2,752.7 561.7,744.6 564.2,736.5 566.8,728.5 569.5,720.4 572.2,712.4 575.0,704.4 577.8,696.5 580.7,688.5 583.6,680.6 586.6,672.7 589.6,664.9 592.7,657.0 595.9,649.2 599.1,641.4 602.3,633.6 605.7,625.8 609.0,618.1 612.5,610.4 616.0,602.7 619.5,595.1 623.1,587.4 626.8,579.8 630.5,572.2 634.3,564.7 638.1,557.2 642.0,549.7 645.9,542.2 649.9,534.9 653.9,527.6 658.0,520.5 662.1,513.4 666.2,506.4 670.4,499.6 674.6,492.8 678.9,486.2 683.3,479.7 687.7,473.4 692.2,467.2 696.7,461.1 701.3,455.1 706.0,449.3 710.7,443.7 715.5,438.1 720.4,432.8 725.4,427.5 730.5,422.4 735.7,417.5 741.0,412.6 746.5,407.9 752.1,403.2 757.9,398.6 763.8,394.2 769.9,389.8 776.1,385.5 782.4,381.4 788.9,377.3 795.5,373.4 802.2,369.5 809.0,365.8 815.9,362.1 822.9,358.6 830.0,355.2 837.2,351.9 844.5,348.7 851.9,345.6 859.3,342.7 866.9,339.8 874.5,337.1 882.2,334.4 890.1,331.9 898.1,329.4 906.3,327.1 914.6,324.7 923.1,322.4 931.8,320.0 940.6,317.6 949.5,315.2 958.4,312.6 967.5,309.9 976.5,307.1 985.6,304.1 994.4,300.9 1001.8,298.2 1006.4,296.3 1011.1,294.6 1015.8,292.9 1020.5,291.1 1025.3,289.3 1030.0,287.9 1000.0,120.0 60.0,120.0 60.0,1790.0 2800.0,1790.0 2800.0,120.0 1790.0,120.0Z" fill="#433288"/>
<path d="M1730.0,287.9L1739.0,289.4 1748.0,291.5 1757.0,293.4 1766.0,295.2 1775.0,297.0 1784.1,298.7 1793.1,300.4 1801.9,301.9 1810.6,303.5 1819.2,305.4 1827.7,307.3 1836.2,309.5 1844.7,311.8 1853.1,314.2 1861.4,316.8 1869.6,319.5 1877.8,322.4 1885.9,325.4 1893.9,328.6 1901.7,331.9 1909.5,335.4 1917.1,339.0 1924.6,342.7 1932.0,346.6 1939.3,350.7 1946.3,354.8 1953.3,359.1 1960.0,363.5 1966.6,368.1 1973.0,372.7 1979.2,377.5 1985.3,382.4 1991.1,387.4 1996.7,392.5 2002.1,397.7 2007.4,403.0 2012.4,408.5 2017.4,414.0 2022.2,419.8 2026.9,425.6 2031.4,431.6 2035.9,437.7 2040.2,443.9 2044.6,450.2 2049.3,456.2 2054.3,461.9 2059.3,467.8 2064.3,473.7 2069.3,479.8 2074.2,486.1 2079.0,492.5 2083.8,499.0 2088.5,505.6 2093.2,512.3 2097.8,519.2 2102.4,526.1 2106.9,533.2 2111.4,540.3 2115.8,547.5 2120.2,554.8 2124.5,562.1 2128.7,569.5 2132.9,576.9 2137.1,584.3 2141.1,591.7 2145.1,599.2 2149.1,606.7 2152.9,614.2 2156.8,621.8 2160.5,629.4 2164.2,637.0 2167.9,644.6 2171.4,652.3 2175.0,660.0 2178.4,667.7 2181.8,675.5 2185.2,683.2 2188.5,691.0 2191.7,698.9 2194.9,706.7 2198.0,714.6 2201.1,722.5 2204.1,730.4 2207.1,738.4 2210.0,746.4 2212.8,754.4 2215.7,762.4 2218.4,770.4 2221.1,778.5 2223.8,786.6 2226.4,794.7 2228.9,802.9 2231.4,811.0 2233.9,819.2 2236.3,827.4 2238.7,835.7 2241.0,843.9 2243.2,852.2 2245.5,860.5 2247.6,868.8 2249.8,877.1 2251.8,885.5 2253.9,893.8 2255.8,902.2 2257.8,910.6 2259.7,919.0 2261.5,927.4 2263.3,935.9 2265.1,944.3 2266.8,952.8 2268.5,961.3 2270.1,969.8 2271.7,978.3 2273.2,986.8 2274.7,995.4 2276.1,1003.9 2277.5,1012.5 2278.9,1021.0 2280.2,1029.6 2281.5,1038.2 2282.7,1046.8 2283.9,1055.4 2285.0,1064.0 2286.1,1072.7 2287.2,1081.3 2288.2,1089.9 2289.2,1098.6 2290.1,1107.2 2291.0,1115.9 2291.9,1124.6 2292.7,1133.2 2293.5,1141.9 2294.3,1150.6 2295.0,1159.3 2295.6,1168.0 2296.2,1176.7 2296.8,1185.3 2297.4,1194.0 2297.9,1202.7 2298.4,1211.4 2298.8,1220.1 2299.2,1228.8 2299.6,1237.5 2299.9,1246.2 2300.2,1254.9 2300.4,1263.6 2300.6,1272.3 2300.8,1281.0 2301.0,1289.7 2301.1,1298.4 2301.2,1307.1 2301.2,1315.7 2301.2,1324.4 2301.2,1333.0 2301.1,1341.7 2301.0,1350.3 2300.8,1358.9 2300.7,1367.6 2300.4,1376.2 2300.2,1384.8 2299.8,1393.4 2299.5,1402.0 2299.1,1410.7 2298.6,1419.3 2298.2,1427.9 2297.6,1436.5 2297.5,1445.2 2297.8,1453.9 2298.6,1462.7 2299.3,1471.5 2300.0,1480.4 2300.6,1489.2 2301.1,1498.1 2301.6,1507.1 2302.1,1516.0 2302.5,1524.8 2304.7,1525.1 2319.0,1516.4 2311.5,1532.3 2304.6,1545.9 2288.0,1556.3 2271.0,1563.1 2253.8,1567.8 2236.4,1571.4 2218.9,1574.5 2201.1,1577.2 2183.0,1579.8 2164.6,1582.3 2145.6,1584.8 2126.2,1587.3 2106.1,1589.9 2088.4,1592.1 2071.7,1594.2 2054.7,1596.4 2037.4,1598.7 2019.7,1600.9 2001.8,1603.3 1983.7,1605.6 1965.4,1607.9 1946.9,1610.3 1928.4,1612.6 1909.8,1615.0 1891.2,1617.3 1872.6,1619.6 1854.1,1621.8 1835.7,1624.0 1817.4,1626.1 1799.3,1628.1 1781.0,1630.2 1762.1,1632.2 1742.7,1634.3 1723.0,1636.3 1703.1,1638.4 1683.1,1640.4 1663.1,1642.4 1643.4,1644.3 1624.0,1646.2 1605.0,1648.0 1586.6,1649.8 1568.9,1651.4 1552.0,1653.0 1536.1,1654.5 1521.3,1655.8 1507.8,1657.0 1487.7,1658.7 1460.5,1660.9 1442.1,1662.1 1428.6,1662.6 1415.9,1662.7 1400.0,1662.7 1384.2,1662.7 1371.5,1662.5 1357.9,1662.0 1339.5,1660.7 1312.2,1658.7 1292.2,1657.0 1278.6,1655.9 1263.8,1654.7 1247.9,1653.3 1231.1,1651.8 1213.4,1650.3 1195.0,1648.7 1176.0,1647.0 1156.5,1645.2 1136.8,1643.4 1116.9,1641.6 1096.9,1639.7 1077.0,1637.9 1057.2,1636.1 1037.9,1634.2 1018.9,1632.5 1000.6,1630.7 982.5,1629.0 964.2,1627.3 945.8,1625.5 927.2,1623.7 908.6,1621.9 890.0,1620.0 871.4,1618.2 852.8,1616.4 834.4,1614.5 816.0,1612.7 797.9,1610.9 780.0,1609.0 762.4,1607.2 745.1,1605.4 728.1,1603.6 711.5,1601.9 693.8,1600.0 673.8,1597.8 654.5,1595.6 635.6,1593.3 617.3,1591.1 599.3,1588.7 581.7,1586.2 564.2,1583.3 547.0,1579.8 530.0,1575.2 513.1,1568.7 496.5,1558.4 490.4,1545.5 483.5,1526.1 495.6,1532.5 496.7,1529.3 496.1,1520.8 495.7,1512.3 495.5,1503.8 495.3,1495.4 495.2,1486.9 495.2,1478.4 495.3,1470.0 495.5,1461.5 495.8,1453.1 496.0,1444.6 495.6,1436.2 494.8,1427.9 494.0,1419.5 493.2,1411.2 492.5,1402.7 491.9,1394.3 491.3,1385.8 490.8,1377.3 490.4,1368.7 489.9,1360.1 489.6,1351.5 489.3,1342.9 489.0,1334.2 488.8,1325.5 488.5,1316.8 488.4,1308.0 488.2,1299.2 488.1,1290.4 488.0,1281.6 488.0,1272.8 487.9,1264.0 487.9,1255.2 487.9,1246.4 488.0,1237.6 488.0,1228.9 488.1,1220.1 488.3,1211.3 488.4,1202.5 488.6,1193.7 488.9,1185.0 489.1,1176.2 489.4,1167.5 489.7,1158.7 490.1,1150.0 490.5,1141.2 490.9,1132.5 491.4,1123.8 491.9,1115.1 492.4,1106.4 493.0,1097.7 493.6,1089.0 494.2,1080.3 494.9,1071.6 495.6,1063.0 496.4,1054.3 497.2,1045.7 498.0,1037.0 498.9,1028.4 499.8,1019.8 500.8,1011.2 501.8,1002.6 502.8,994.0 503.9,985.4 505.0,976.9 506.2,968.3 507.4,959.8 508.7,951.2 510.0,942.7 511.4,934.2 512.8,925.7 514.2,917.3 515.7,908.8 517.3,900.4 518.8,891.9 520.5,883.5 522.2,875.1 523.9,866.7 525.7,858.3 527.5,849.9 529.4,841.6 531.4,833.3 533.3,824.9 535.4,816.6 537.5,808.4 539.6,800.1 541.8,791.9 544.1,783.6 546.4,775.4 548.7,767.2 551.1,759.1 553.6,750.9 556.1,742.8 558.6,734.7 561.3,726.6 563.9,718.5 566.7,710.5 569.5,702.4 572.3,694.4 575.2,686.5 578.1,678.5 581.1,670.6 584.2,662.7 587.3,654.8 590.5,646.9 593.7,639.1 597.0,631.3 600.4,623.5 603.8,615.7 607.3,608.0 610.8,600.2 614.4,592.5 618.0,584.9 621.7,577.2 625.5,569.6 629.3,562.0 633.2,554.4 637.1,546.9 641.0,539.4 645.1,532.1 649.1,524.7 653.2,517.5 657.4,510.4 661.6,503.4 665.8,496.5 670.1,489.7 674.5,483.0 678.9,476.5 683.4,470.1 688.0,463.8 692.6,457.6 697.3,451.6 702.1,445.7 706.9,440.0 711.9,434.4 716.9,429.0 722.0,423.7 727.2,418.5 732.5,413.5 738.0,408.6 743.6,403.8 749.4,399.1 755.3,394.5 761.4,390.0 767.6,385.7 773.9,381.4 780.4,377.2 787.0,373.2 793.7,369.2 800.5,365.4 807.4,361.7 814.4,358.1 821.6,354.7 828.8,351.3 836.1,348.1 843.5,344.9 851.0,341.9 858.6,339.1 866.3,336.3 874.0,333.6 881.8,331.1 889.7,328.7 897.8,326.4 906.1,324.1 914.5,321.9 923.0,319.8 931.7,317.6 940.5,315.4 949.4,313.1 958.4,310.7 967.4,308.3 976.5,305.6 985.6,302.8 994.4,299.8 1001.8,297.3 1006.3,295.6 1011.1,294.0 1015.8,292.4 1020.5,290.8 1025.3,289.1 1030.0,287.9 1000.0,120.0 60.0,120.0 60.0,1790.0 2800.0,1790.0 2800.0,120.0 1790.0,120.0Z" fill="#582987"/>
<path d="M1730.0,287.8L1739.0,289.2 1748.0,291.1 1757.0,292.8 1766.0,294.5 1775.0,296.2 1784.1,297.7 1793.1,299.2 1801.9,300.6 1810.6,302.1 1819.2,303.8 1827.8,305.6 1836.3,307.6 1844.8,309.8 1853.3,312.1 1861.7,314.5 1870.0,317.1 1878.2,319.9 1886.4,322.8 1894.4,325.9 1902.4,329.1 1910.2,332.4 1918.0,335.9 1925.6,339.6 1933.1,343.4 1940.4,347.3 1947.6,351.3 1954.7,355.5 1961.6,359.9 1968.3,364.3 1974.9,368.9 1981.2,373.6 1987.4,378.5 1993.4,383.4 1999.2,388.5 2004.8,393.7 2010.2,399.0 2015.5,404.4 2020.6,410.0 2025.6,415.7 2030.5,421.5 2035.2,427.5 2039.8,433.6 2044.4,439.8 2048.9,446.1 2053.7,452.1 2058.8,458.0 2063.9,463.9 2069.0,469.9 2074.0,476.1 2078.9,482.4 2083.8,488.9 2088.7,495.5 2093.4,502.2 2098.1,509.0 2102.8,515.9 2107.4,522.9 2112.0,530.0 2116.5,537.1 2120.9,544.4 2125.3,551.7 2129.7,559.1 2133.9,566.5 2138.2,573.9 2142.3,581.4 2146.4,588.9 2150.4,596.4 2154.4,603.9 2158.3,611.5 2162.1,619.1 2165.9,626.7 2169.6,634.4 2173.3,642.1 2176.9,649.8 2180.4,657.5 2183.9,665.3 2187.3,673.1 2190.7,680.9 2194.0,688.7 2197.3,696.6 2200.5,704.5 2203.6,712.4 2206.7,720.3 2209.7,728.3 2212.7,736.3 2215.6,744.3 2218.5,752.4 2221.3,760.4 2224.1,768.5 2226.8,776.6 2229.5,784.8 2232.1,792.9 2234.7,801.1 2237.2,809.3 2239.6,817.5 2242.1,825.8 2244.4,834.0 2246.8,842.3 2249.0,850.6 2251.3,859.0 2253.4,867.3 2255.6,875.7 2257.7,884.0 2259.7,892.4 2261.7,900.8 2263.6,909.3 2265.5,917.7 2267.4,926.2 2269.2,934.6 2271.0,943.1 2272.7,951.6 2274.3,960.2 2276.0,968.7 2277.6,977.2 2279.1,985.8 2280.6,994.3 2282.0,1002.9 2283.4,1011.5 2284.8,1020.1 2286.1,1028.7 2287.4,1037.3 2288.6,1046.0 2289.8,1054.6 2291.0,1063.3 2292.1,1071.9 2293.2,1080.6 2294.2,1089.2 2295.2,1097.9 2296.1,1106.6 2297.0,1115.3 2297.9,1124.0 2298.7,1132.7 2299.5,1141.4 2300.2,1150.1 2300.9,1158.8 2301.6,1167.5 2302.2,1176.2 2302.8,1185.0 2303.4,1193.7 2303.9,1202.4 2304.4,1211.1 2304.8,1219.8 2305.2,1228.6 2305.6,1237.3 2305.9,1246.0 2306.2,1254.7 2306.4,1263.5 2306.6,1272.2 2306.8,1280.9 2307.0,1289.6 2307.1,1298.3 2307.2,1307.0 2307.2,1315.7 2307.2,1324.4 2307.2,1333.1 2307.1,1341.7 2307.0,1350.4 2306.8,1359.1 2306.7,1367.7 2306.4,1376.4 2306.2,1385.0 2305.8,1393.7 2305.5,1402.3 2305.1,1411.0 2304.6,1419.6 2304.1,1428.3 2303.6,1436.9 2303.4,1445.6 2303.7,1454.4 2304.3,1463.2 2304.9,1472.0 2305.4,1480.9 2305.9,1489.8 2306.3,1498.7 2306.7,1507.6 2307.0,1516.6 2307.3,1525.4 2309.2,1526.5 2322.2,1519.3 2312.7,1535.3 2304.9,1548.0 2288.1,1557.7 2271.1,1564.1 2253.9,1568.6 2236.5,1572.1 2219.0,1575.1 2201.2,1577.8 2183.1,1580.3 2164.6,1582.8 2145.7,1585.3 2126.2,1587.8 2106.1,1590.4 2088.4,1592.6 2071.8,1594.8 2054.8,1597.0 2037.4,1599.2 2019.8,1601.5 2001.9,1603.8 1983.7,1606.1 1965.4,1608.5 1947.0,1610.8 1928.5,1613.2 1909.9,1615.5 1891.3,1617.8 1872.7,1620.1 1854.1,1622.3 1835.7,1624.5 1817.4,1626.6 1799.4,1628.7 1781.0,1630.7 1762.1,1632.7 1742.7,1634.8 1723.0,1636.9 1703.1,1638.9 1683.1,1640.9 1663.2,1642.9 1643.5,1644.9 1624.0,1646.7 1605.1,1648.6 1586.6,1650.3 1568.9,1652.0 1552.1,1653.5 1536.2,1655.0 1521.4,1656.3 1507.8,1657.5 1487.8,1659.3 1460.5,1661.5 1442.1,1662.7 1428.6,1663.2 1415.9,1663.3 1400.0,1663.2 1384.2,1663.2 1371.5,1663.1 1357.9,1662.5 1339.5,1661.3 1312.2,1659.2 1292.2,1657.6 1278.6,1656.5 1263.8,1655.2 1247.9,1653.9 1231.0,1652.4 1213.3,1650.8 1194.9,1649.2 1175.9,1647.5 1156.5,1645.7 1136.8,1643.9 1116.8,1642.1 1096.8,1640.3 1076.9,1638.4 1057.2,1636.6 1037.8,1634.8 1018.9,1633.0 1000.5,1631.3 982.4,1629.5 964.1,1627.8 945.7,1626.0 927.2,1624.2 908.6,1622.4 889.9,1620.6 871.3,1618.8 852.8,1616.9 834.3,1615.1 816.0,1613.2 797.9,1611.4 780.0,1609.6 762.3,1607.8 745.0,1606.0 728.0,1604.2 711.4,1602.4 693.8,1600.5 673.8,1598.3 654.4,1596.1 635.6,1593.9 617.2,1591.6 599.2,1589.3 581.6,1586.8 564.2,1584.0 546.9,1580.6 529.8,1576.3 512.9,1570.1 496.2,1560.5 489.2,1548.5 480.4,1529.0 491.3,1534.1 492.0,1530.4 491.4,1521.9 490.9,1513.4 490.4,1504.8 490.1,1496.3 489.9,1487.8 489.8,1479.3 489.8,1470.8 489.8,1462.3 490.0,1453.8 490.1,1445.3 489.6,1436.9 488.8,1428.5 488.0,1420.1 487.2,1411.7 486.5,1403.2 485.9,1394.7 485.3,1386.2 484.8,1377.6 484.4,1369.0 484.0,1360.4 483.6,1351.8 483.3,1343.1 483.0,1334.4 482.8,1325.7 482.6,1316.9 482.4,1308.1 482.2,1299.3 482.1,1290.5 482.0,1281.7 482.0,1272.9 481.9,1264.0 481.9,1255.2 481.9,1246.4 482.0,1237.6 482.0,1228.8 482.1,1220.0 482.3,1211.2 482.4,1202.4 482.6,1193.6 482.9,1184.8 483.1,1176.0 483.4,1167.3 483.7,1158.5 484.1,1149.7 484.5,1141.0 484.9,1132.2 485.4,1123.5 485.9,1114.7 486.4,1106.0 487.0,1097.3 487.6,1088.6 488.2,1079.8 488.9,1071.1 489.6,1062.5 490.4,1053.8 491.2,1045.1 492.0,1036.4 492.9,1027.8 493.9,1019.1 494.8,1010.5 495.8,1001.9 496.9,993.3 498.0,984.6 499.1,976.1 500.3,967.5 501.5,958.9 502.8,950.3 504.1,941.8 505.5,933.3 506.9,924.7 508.3,916.2 509.8,907.7 511.4,899.2 513.0,890.8 514.6,882.3 516.3,873.9 518.1,865.4 519.9,857.0 521.7,848.6 523.6,840.2 525.6,831.9 527.6,823.5 529.6,815.2 531.7,806.9 533.9,798.6 536.1,790.3 538.4,782.0 540.7,773.8 543.0,765.5 545.5,757.3 547.9,749.1 550.5,741.0 553.1,732.8 555.7,724.7 558.4,716.6 561.1,708.5 563.9,700.5 566.8,692.4 569.7,684.4 572.7,676.4 575.7,668.4 578.8,660.5 582.0,652.6 585.2,644.7 588.4,636.8 591.7,628.9 595.1,621.1 598.5,613.3 602.0,605.5 605.6,597.7 609.2,590.0 612.9,582.3 616.6,574.6 620.4,567.0 624.3,559.3 628.2,551.7 632.1,544.2 636.2,536.7 640.2,529.2 644.3,521.9 648.5,514.6 652.7,507.4 656.9,500.4 661.2,493.4 665.6,486.6 670.1,479.8 674.6,473.2 679.2,466.7 683.8,460.4 688.5,454.2 693.3,448.1 698.2,442.2 703.1,436.4 708.2,430.7 713.3,425.2 718.6,419.9 723.9,414.6 729.4,409.6 735.0,404.6 740.7,399.8 746.6,395.0 752.7,390.4 758.9,385.9 765.2,381.5 771.7,377.2 778.3,373.1 785.0,369.1 791.9,365.1 798.8,361.3 805.9,357.7 813.0,354.1 820.3,350.7 827.6,347.4 835.1,344.2 842.6,341.2 850.2,338.2 857.9,335.5 865.7,332.8 873.5,330.2 881.4,327.8 889.4,325.5 897.6,323.4 905.9,321.2 914.4,319.2 923.0,317.2 931.7,315.2 940.5,313.1 949.4,311.0 958.4,308.9 967.4,306.6 976.5,304.1 985.5,301.5 994.4,298.8 1001.8,296.5 1006.3,294.9 1011.1,293.5 1015.8,292.0 1020.5,290.5 1025.3,289.0 1030.0,287.9 1000.0,120.0 60.0,120.0 60.0,1790.0 2800.0,1790.0 2800.0,120.0 1790.0,120.0Z" fill="#672684"/>
<path d="M1730.0,287.8L1739.0,289.1 1748.0,290.7 1757.0,292.3 1766.0,293.8 1775.0,295.3 1784.1,296.8 1793.1,298.1 1801.9,299.3 1810.6,300.7 1819.3,302.2 1827.9,303.9 1836.5,305.8 1845.0,307.8 1853.5,310.0 1861.9,312.3 1870.3,314.8 1878.6,317.4 1886.9,320.2 1895.0,323.1 1903.0,326.2 1911.0,329.5 1918.8,332.8 1926.6,336.4 1934.2,340.1 1941.6,343.9 1948.9,347.9 1956.1,352.0 1963.2,356.2 1970.0,360.6 1976.7,365.1 1983.3,369.8 1989.6,374.6 1995.8,379.5 2001.7,384.5 2007.5,389.6 2013.1,394.9 2018.5,400.3 2023.8,405.9 2029.0,411.6 2034.0,417.4 2039.0,423.4 2043.8,429.5 2048.5,435.7 2053.1,442.0 2058.1,448.1 2063.3,454.0 2068.5,460.0 2073.6,466.1 2078.7,472.4 2083.7,478.8 2088.6,485.3 2093.5,491.9 2098.3,498.7 2103.1,505.6 2107.8,512.5 2112.4,519.6 2117.0,526.7 2121.6,534.0 2126.0,541.3 2130.5,548.6 2134.8,556.1 2139.1,563.5 2143.4,571.0 2147.6,578.5 2151.7,586.0 2155.7,593.6 2159.7,601.2 2163.6,608.8 2167.5,616.4 2171.3,624.1 2175.0,631.8 2178.7,639.5 2182.3,647.3 2185.9,655.0 2189.4,662.8 2192.8,670.7 2196.2,678.5 2199.5,686.4 2202.8,694.3 2206.0,702.2 2209.2,710.2 2212.3,718.2 2215.3,726.2 2218.3,734.2 2221.3,742.3 2224.2,750.4 2227.0,758.5 2229.8,766.6 2232.5,774.7 2235.2,782.9 2237.8,791.1 2240.4,799.3 2242.9,807.6 2245.4,815.8 2247.8,824.1 2250.2,832.4 2252.5,840.7 2254.8,849.1 2257.1,857.4 2259.3,865.8 2261.4,874.2 2263.5,882.6 2265.5,891.0 2267.5,899.5 2269.5,907.9 2271.4,916.4 2273.3,924.9 2275.1,933.4 2276.8,941.9 2278.6,950.5 2280.2,959.0 2281.9,967.6 2283.5,976.1 2285.0,984.7 2286.5,993.3 2288.0,1001.9 2289.4,1010.6 2290.7,1019.2 2292.1,1027.8 2293.3,1036.5 2294.6,1045.1 2295.8,1053.8 2296.9,1062.5 2298.0,1071.2 2299.1,1079.9 2300.1,1088.5 2301.1,1097.3 2302.1,1106.0 2303.0,1114.7 2303.9,1123.4 2304.7,1132.1 2305.5,1140.9 2306.2,1149.6 2306.9,1158.3 2307.6,1167.1 2308.2,1175.8 2308.8,1184.6 2309.4,1193.3 2309.9,1202.1 2310.3,1210.8 2310.8,1219.6 2311.2,1228.3 2311.5,1237.1 2311.9,1245.8 2312.2,1254.6 2312.4,1263.3 2312.6,1272.0 2312.8,1280.8 2313.0,1289.5 2313.1,1298.3 2313.2,1307.0 2313.2,1315.7 2313.2,1324.4 2313.2,1333.1 2313.1,1341.8 2313.0,1350.5 2312.8,1359.2 2312.7,1367.9 2312.4,1376.5 2312.2,1385.2 2311.8,1393.9 2311.5,1402.6 2311.1,1411.2 2310.6,1419.9 2310.1,1428.6 2309.6,1437.3 2309.4,1446.0 2309.6,1454.8 2310.1,1463.7 2310.5,1472.5 2310.9,1481.4 2311.3,1490.3 2311.6,1499.2 2311.8,1508.2 2312.0,1517.2 2312.2,1526.0 2313.8,1527.9 2325.4,1522.2 2313.9,1538.4 2305.1,1550.1 2288.3,1559.1 2271.2,1565.1 2254.0,1569.4 2236.6,1572.8 2219.1,1575.7 2201.3,1578.4 2183.2,1580.9 2164.7,1583.4 2145.8,1585.9 2126.3,1588.4 2106.2,1590.9 2088.5,1593.2 2071.9,1595.3 2054.8,1597.5 2037.5,1599.7 2019.8,1602.0 2001.9,1604.3 1983.8,1606.7 1965.5,1609.0 1947.1,1611.4 1928.5,1613.7 1909.9,1616.0 1891.3,1618.4 1872.7,1620.6 1854.2,1622.9 1835.8,1625.0 1817.5,1627.2 1799.4,1629.2 1781.1,1631.2 1762.2,1633.3 1742.8,1635.3 1723.1,1637.4 1703.2,1639.4 1683.2,1641.5 1663.3,1643.4 1643.5,1645.4 1624.1,1647.3 1605.1,1649.1 1586.7,1650.9 1569.0,1652.5 1552.1,1654.1 1536.2,1655.5 1521.4,1656.9 1507.9,1658.1 1487.8,1659.8 1460.6,1662.0 1442.2,1663.2 1428.6,1663.7 1415.9,1663.8 1400.0,1663.8 1384.2,1663.8 1371.4,1663.6 1357.9,1663.0 1339.4,1661.8 1312.1,1659.7 1292.1,1658.1 1278.5,1657.0 1263.7,1655.8 1247.8,1654.4 1231.0,1652.9 1213.3,1651.4 1194.9,1649.7 1175.9,1648.0 1156.5,1646.3 1136.7,1644.5 1116.8,1642.7 1096.8,1640.8 1076.9,1639.0 1057.1,1637.1 1037.8,1635.3 1018.8,1633.5 1000.5,1631.8 982.4,1630.1 964.1,1628.3 945.7,1626.6 927.1,1624.8 908.5,1622.9 889.9,1621.1 871.3,1619.3 852.7,1617.5 834.2,1615.6 815.9,1613.8 797.8,1611.9 779.9,1610.1 762.3,1608.3 744.9,1606.5 728.0,1604.7 711.4,1603.0 693.7,1601.1 673.7,1598.8 654.3,1596.7 635.5,1594.4 617.1,1592.2 599.2,1589.9 581.5,1587.4 564.1,1584.7 546.8,1581.4 529.7,1577.3 512.7,1571.5 496.0,1562.6 487.9,1551.6 477.3,1531.9 487.0,1535.6 487.4,1531.5 486.7,1522.9 486.0,1514.4 485.4,1505.8 485.0,1497.3 484.6,1488.7 484.4,1480.2 484.2,1471.6 484.2,1463.1 484.2,1454.6 484.2,1446.0 483.7,1437.6 482.8,1429.1 482.0,1420.7 481.2,1412.2 480.6,1403.7 479.9,1395.1 479.3,1386.5 478.8,1377.9 478.4,1369.3 478.0,1360.7 477.6,1352.0 477.3,1343.3 477.0,1334.6 476.8,1325.8 476.6,1317.0 476.4,1308.2 476.2,1299.4 476.1,1290.6 476.0,1281.7 476.0,1272.9 475.9,1264.1 475.9,1255.2 475.9,1246.4 476.0,1237.6 476.1,1228.7 476.2,1219.9 476.3,1211.1 476.5,1202.3 476.6,1193.5 476.9,1184.6 477.1,1175.8 477.4,1167.0 477.8,1158.2 478.1,1149.5 478.5,1140.7 478.9,1131.9 479.4,1123.1 479.9,1114.4 480.4,1105.6 481.0,1096.9 481.6,1088.1 482.3,1079.4 483.0,1070.7 483.7,1061.9 484.4,1053.2 485.3,1044.5 486.1,1035.8 487.0,1027.1 487.9,1018.5 488.9,1009.8 489.9,1001.2 491.0,992.5 492.1,983.9 493.2,975.2 494.4,966.6 495.6,958.0 496.9,949.4 498.2,940.9 499.6,932.3 501.0,923.7 502.5,915.2 504.0,906.7 505.5,898.1 507.2,889.6 508.8,881.1 510.5,872.7 512.3,864.2 514.1,855.7 515.9,847.3 517.9,838.9 519.8,830.5 521.8,822.1 523.9,813.7 526.0,805.4 528.2,797.0 530.4,788.7 532.7,780.4 535.0,772.1 537.4,763.9 539.8,755.6 542.3,747.4 544.9,739.2 547.5,731.0 550.1,722.8 552.8,714.7 555.6,706.6 558.4,698.5 561.3,690.4 564.2,682.3 567.2,674.3 570.3,666.3 573.4,658.3 576.6,650.3 579.8,642.4 583.1,634.5 586.4,626.6 589.8,618.7 593.3,610.9 596.8,603.0 600.4,595.3 604.1,587.5 607.8,579.7 611.5,572.0 615.4,564.3 619.2,556.7 623.2,549.0 627.2,541.4 631.3,533.9 635.4,526.4 639.5,519.0 643.7,511.7 648.0,504.5 652.3,497.4 656.7,490.3 661.1,483.4 665.6,476.6 670.2,470.0 674.9,463.4 679.6,457.0 684.4,450.7 689.3,444.6 694.3,438.6 699.4,432.7 704.5,427.0 709.8,421.4 715.1,416.0 720.6,410.7 726.2,405.6 732.0,400.6 737.9,395.7 743.9,391.0 750.1,386.3 756.4,381.8 762.9,377.4 769.5,373.1 776.2,369.0 783.1,364.9 790.1,361.0 797.1,357.3 804.3,353.6 811.6,350.1 819.0,346.7 826.5,343.5 834.0,340.4 841.7,337.4 849.4,334.6 857.2,331.8 865.1,329.3 873.0,326.8 881.0,324.5 889.1,322.4 897.3,320.3 905.7,318.3 914.2,316.4 922.9,314.6 931.6,312.7 940.4,310.9 949.4,308.9 958.3,307.0 967.4,304.9 976.4,302.7 985.5,300.3 994.3,297.7 1001.7,295.6 1006.3,294.2 1011.1,292.9 1015.8,291.6 1020.5,290.2 1025.3,288.8 1030.0,287.8 1000.0,120.0 60.0,120.0 60.0,1790.0 2800.0,1790.0 2800.0,120.0 1790.0,120.0Z" fill="#762280"/>
<path d="M1730.0,287.7L1739.0,288.9 1748.0,290.4 1757.0,291.8 1766.0,293.1 1775.0,294.5 1784.1,295.8 1793.0,297.0 1801.9,298.0 1810.6,299.3 1819.3,300.7 1828.0,302.2 1836.6,304.0 1845.2,305.8 1853.7,307.9 1862.2,310.1 1870.7,312.4 1879.0,314.9 1887.4,317.6 1895.6,320.4 1903.7,323.4 1911.7,326.5 1919.7,329.8 1927.5,333.2 1935.2,336.8 1942.8,340.5 1950.2,344.4 1957.6,348.4 1964.7,352.6 1971.7,356.9 1978.6,361.3 1985.3,365.9 1991.8,370.6 1998.1,375.5 2004.2,380.5 2010.2,385.6 2016.0,390.8 2021.6,396.2 2027.1,401.8 2032.4,407.5 2037.6,413.3 2042.7,419.2 2047.7,425.4 2052.6,431.6 2057.4,437.9 2062.5,444.0 2067.8,450.0 2073.0,456.1 2078.2,462.3 2083.4,468.6 2088.4,475.1 2093.4,481.7 2098.4,488.4 2103.2,495.3 2108.0,502.2 2112.8,509.2 2117.5,516.3 2122.1,523.5 2126.7,530.8 2131.2,538.2 2135.6,545.6 2140.0,553.0 2144.3,560.5 2148.6,568.0 2152.8,575.6 2157.0,583.2 2161.0,590.8 2165.0,598.4 2169.0,606.0 2172.9,613.7 2176.7,621.4 2180.4,629.2 2184.1,637.0 2187.8,644.7 2191.4,652.6 2194.9,660.4 2198.3,668.3 2201.7,676.2 2205.1,684.1 2208.4,692.0 2211.6,700.0 2214.8,708.0 2217.9,716.0 2221.0,724.1 2224.0,732.1 2226.9,740.2 2229.8,748.4 2232.7,756.5 2235.5,764.7 2238.2,772.8 2240.9,781.1 2243.5,789.3 2246.1,797.5 2248.7,805.8 2251.1,814.1 2253.6,822.4 2256.0,830.8 2258.3,839.1 2260.6,847.5 2262.9,855.9 2265.1,864.3 2267.2,872.7 2269.3,881.2 2271.4,889.6 2273.4,898.1 2275.3,906.6 2277.2,915.1 2279.1,923.6 2280.9,932.2 2282.7,940.7 2284.4,949.3 2286.1,957.9 2287.8,966.5 2289.4,975.1 2290.9,983.7 2292.4,992.3 2293.9,1001.0 2295.3,1009.6 2296.7,1018.3 2298.0,1026.9 2299.3,1035.6 2300.5,1044.3 2301.7,1053.0 2302.9,1061.7 2304.0,1070.4 2305.1,1079.1 2306.1,1087.9 2307.1,1096.6 2308.0,1105.3 2309.0,1114.1 2309.8,1122.8 2310.7,1131.6 2311.4,1140.3 2312.2,1149.1 2312.9,1157.9 2313.6,1166.6 2314.2,1175.4 2314.8,1184.2 2315.3,1192.9 2315.9,1201.7 2316.3,1210.5 2316.8,1219.3 2317.2,1228.0 2317.5,1236.8 2317.9,1245.6 2318.2,1254.4 2318.4,1263.1 2318.6,1271.9 2318.8,1280.7 2319.0,1289.4 2319.1,1298.2 2319.2,1307.0 2319.2,1315.7 2319.2,1324.4 2319.2,1333.2 2319.1,1341.9 2319.0,1350.6 2318.8,1359.3 2318.7,1368.0 2318.4,1376.7 2318.1,1385.4 2317.8,1394.1 2317.5,1402.8 2317.1,1411.5 2316.6,1420.3 2316.1,1429.0 2315.6,1437.7 2315.3,1446.5 2315.4,1455.3 2315.8,1464.1 2316.1,1473.0 2316.4,1481.9 2316.6,1490.8 2316.8,1499.8 2316.9,1508.8 2317.0,1517.8 2317.0,1526.6 2318.3,1529.2 2328.6,1525.1 2315.1,1541.5 2305.4,1552.2 2288.5,1560.5 2271.4,1566.1 2254.1,1570.2 2236.7,1573.5 2219.1,1576.3 2201.3,1579.0 2183.3,1581.5 2164.8,1583.9 2145.8,1586.4 2126.4,1588.9 2106.3,1591.5 2088.6,1593.7 2071.9,1595.8 2054.9,1598.0 2037.6,1600.3 2019.9,1602.5 2002.0,1604.9 1983.9,1607.2 1965.6,1609.5 1947.1,1611.9 1928.6,1614.2 1910.0,1616.6 1891.4,1618.9 1872.8,1621.2 1854.3,1623.4 1835.8,1625.6 1817.6,1627.7 1799.5,1629.7 1781.2,1631.8 1762.2,1633.8 1742.9,1635.9 1723.1,1637.9 1703.2,1640.0 1683.2,1642.0 1663.3,1644.0 1643.6,1645.9 1624.1,1647.8 1605.2,1649.6 1586.7,1651.4 1569.1,1653.1 1552.2,1654.6 1536.3,1656.1 1521.5,1657.4 1507.9,1658.6 1487.9,1660.3 1460.6,1662.5 1442.2,1663.8 1428.6,1664.3 1415.9,1664.4 1400.0,1664.3 1384.2,1664.3 1371.4,1664.1 1357.8,1663.6 1339.4,1662.4 1312.1,1660.3 1292.1,1658.7 1278.5,1657.5 1263.7,1656.3 1247.8,1654.9 1230.9,1653.5 1213.2,1651.9 1194.8,1650.3 1175.8,1648.6 1156.4,1646.8 1136.7,1645.0 1116.7,1643.2 1096.7,1641.4 1076.8,1639.5 1057.1,1637.7 1037.7,1635.9 1018.8,1634.1 1000.4,1632.3 982.3,1630.6 964.0,1628.9 945.6,1627.1 927.1,1625.3 908.4,1623.5 889.8,1621.7 871.2,1619.8 852.6,1618.0 834.2,1616.1 815.9,1614.3 797.8,1612.5 779.9,1610.6 762.2,1608.8 744.9,1607.0 727.9,1605.3 711.3,1603.5 693.7,1601.6 673.7,1599.4 654.3,1597.2 635.4,1595.0 617.1,1592.8 599.1,1590.5 581.4,1588.1 564.0,1585.4 546.7,1582.3 529.6,1578.3 512.6,1572.9 495.7,1564.7 486.7,1554.6 474.2,1534.8 482.6,1537.2 482.8,1532.6 481.9,1524.0 481.1,1515.4 480.4,1506.8 479.8,1498.2 479.4,1489.6 479.0,1481.1 478.7,1472.5 478.5,1463.9 478.4,1455.3 478.3,1446.8 477.7,1438.2 476.9,1429.7 476.0,1421.2 475.3,1412.7 474.6,1404.1 473.9,1395.5 473.4,1386.9 472.8,1378.3 472.4,1369.6 472.0,1360.9 471.6,1352.2 471.3,1343.5 471.0,1334.7 470.8,1326.0 470.6,1317.2 470.4,1308.3 470.3,1299.5 470.1,1290.6 470.0,1281.8 470.0,1272.9 469.9,1264.1 469.9,1255.2 469.9,1246.4 470.0,1237.5 470.1,1228.7 470.2,1219.8 470.3,1211.0 470.5,1202.1 470.7,1193.3 470.9,1184.5 471.1,1175.7 471.4,1166.8 471.8,1158.0 472.1,1149.2 472.5,1140.4 473.0,1131.6 473.4,1122.8 473.9,1114.0 474.5,1105.2 475.0,1096.5 475.7,1087.7 476.3,1078.9 477.0,1070.2 477.7,1061.4 478.5,1052.7 479.3,1044.0 480.1,1035.2 481.0,1026.5 482.0,1017.8 482.9,1009.1 484.0,1000.4 485.0,991.8 486.1,983.1 487.3,974.4 488.5,965.8 489.7,957.2 491.0,948.5 492.3,939.9 493.7,931.3 495.1,922.7 496.6,914.2 498.1,905.6 499.7,897.0 501.3,888.5 503.0,880.0 504.7,871.5 506.5,863.0 508.3,854.5 510.2,846.0 512.1,837.5 514.0,829.1 516.1,820.7 518.1,812.3 520.3,803.9 522.5,795.5 524.7,787.1 527.0,778.8 529.3,770.5 531.7,762.2 534.2,753.9 536.7,745.6 539.2,737.4 541.9,729.2 544.5,721.0 547.3,712.8 550.1,704.6 552.9,696.5 555.8,688.4 558.8,680.3 561.8,672.2 564.9,664.1 568.0,656.1 571.2,648.1 574.4,640.1 577.8,632.2 581.1,624.2 584.6,616.3 588.1,608.5 591.6,600.6 595.2,592.8 598.9,585.0 602.6,577.2 606.4,569.4 610.3,561.7 614.2,554.0 618.2,546.3 622.3,538.7 626.4,531.1 630.5,523.6 634.7,516.1 639.0,508.8 643.3,501.5 647.7,494.3 652.1,487.3 656.6,480.3 661.2,473.4 665.9,466.7 670.6,460.1 675.4,453.6 680.3,447.3 685.3,441.1 690.4,435.0 695.6,429.1 700.9,423.3 706.2,417.6 711.7,412.2 717.3,406.8 723.1,401.7 728.9,396.6 735.0,391.7 741.2,386.9 747.5,382.2 754.0,377.7 760.6,373.3 767.3,369.0 774.2,364.8 781.2,360.8 788.3,356.9 795.5,353.2 802.8,349.6 810.2,346.1 817.7,342.8 825.3,339.6 833.0,336.5 840.7,333.6 848.6,330.9 856.5,328.2 864.4,325.8 872.5,323.4 880.6,321.2 888.8,319.2 897.1,317.3 905.5,315.4 914.1,313.7 922.8,312.0 931.5,310.3 940.4,308.6 949.3,306.9 958.3,305.1 967.3,303.2 976.4,301.2 985.4,299.0 994.3,296.7 1001.7,294.8 1006.3,293.5 1011.1,292.3 1015.8,291.1 1020.5,289.9 1025.3,288.7 1030.0,287.8 1000.0,120.0 60.0,120.0 60.0,1790.0 2800.0,1790.0 2800.0,120.0 1790.0,120.0Z" fill="#822076"/>
<path d="M1730.0,287.6L1739.0,288.7 1748.0,290.0 1757.0,291.3 1766.0,292.5 1775.0,293.6 1784.1,294.8 1793.0,295.8 1801.9,296.8 1810.6,297.9 1819.4,299.1 1828.0,300.5 1836.7,302.1 1845.4,303.9 1854.0,305.8 1862.5,307.8 1871.0,310.0 1879.5,312.4 1887.8,315.0 1896.1,317.7 1904.4,320.5 1912.5,323.5 1920.5,326.7 1928.5,330.0 1936.3,333.5 1944.0,337.1 1951.6,340.9 1959.0,344.8 1966.3,348.9 1973.4,353.2 1980.4,357.5 1987.3,362.1 1993.9,366.7 2000.4,371.5 2006.7,376.5 2012.9,381.5 2018.8,386.8 2024.6,392.1 2030.3,397.7 2035.8,403.3 2041.2,409.2 2046.5,415.1 2051.7,421.2 2056.7,427.5 2061.7,433.8 2066.9,440.0 2072.2,446.0 2077.6,452.2 2082.9,458.5 2088.1,464.9 2093.2,471.5 2098.2,478.1 2103.2,484.9 2108.1,491.8 2113.0,498.8 2117.8,505.9 2122.5,513.1 2127.2,520.3 2131.8,527.6 2136.3,535.0 2140.8,542.5 2145.2,550.0 2149.6,557.5 2153.8,565.1 2158.1,572.7 2162.2,580.3 2166.3,587.9 2170.4,595.6 2174.3,603.3 2178.2,611.0 2182.1,618.8 2185.9,626.6 2189.6,634.4 2193.2,642.2 2196.8,650.1 2200.4,658.0 2203.8,665.9 2207.3,673.8 2210.6,681.8 2213.9,689.8 2217.2,697.8 2220.4,705.8 2223.5,713.9 2226.6,722.0 2229.6,730.1 2232.6,738.2 2235.5,746.4 2238.3,754.5 2241.1,762.7 2243.9,771.0 2246.6,779.2 2249.2,787.5 2251.9,795.8 2254.4,804.1 2256.9,812.4 2259.4,820.8 2261.8,829.1 2264.1,837.5 2266.4,845.9 2268.7,854.4 2270.9,862.8 2273.0,871.3 2275.1,879.7 2277.2,888.2 2279.2,896.7 2281.2,905.3 2283.1,913.8 2285.0,922.4 2286.8,930.9 2288.6,939.5 2290.3,948.1 2292.0,956.7 2293.7,965.4 2295.3,974.0 2296.8,982.6 2298.3,991.3 2299.8,1000.0 2301.2,1008.6 2302.6,1017.3 2303.9,1026.0 2305.2,1034.7 2306.5,1043.5 2307.7,1052.2 2308.8,1060.9 2309.9,1069.7 2311.0,1078.4 2312.1,1087.2 2313.1,1095.9 2314.0,1104.7 2314.9,1113.5 2315.8,1122.2 2316.6,1131.0 2317.4,1139.8 2318.2,1148.6 2318.9,1157.4 2319.6,1166.2 2320.2,1175.0 2320.8,1183.8 2321.3,1192.6 2321.8,1201.4 2322.3,1210.2 2322.8,1219.0 2323.2,1227.8 2323.5,1236.6 2323.9,1245.4 2324.2,1254.2 2324.4,1263.0 2324.6,1271.8 2324.8,1280.6 2325.0,1289.4 2325.1,1298.1 2325.2,1306.9 2325.2,1315.7 2325.2,1324.4 2325.2,1333.2 2325.1,1341.9 2325.0,1350.7 2324.8,1359.4 2324.7,1368.1 2324.4,1376.9 2324.1,1385.6 2323.8,1394.4 2323.5,1403.1 2323.1,1411.8 2322.6,1420.6 2322.1,1429.3 2321.6,1438.1 2321.2,1446.9 2321.3,1455.7 2321.5,1464.6 2321.7,1473.5 2321.9,1482.4 2322.0,1491.4 2322.0,1500.3 2322.0,1509.3 2322.0,1518.4 2321.9,1527.3 2322.9,1530.6 2331.8,1528.0 2316.4,1544.5 2305.7,1554.3 2288.7,1561.9 2271.5,1567.1 2254.2,1571.0 2236.8,1574.2 2219.2,1577.0 2201.4,1579.5 2183.3,1582.0 2164.8,1584.5 2145.9,1586.9 2126.4,1589.5 2106.3,1592.0 2088.6,1594.3 2072.0,1596.4 2055.0,1598.6 2037.6,1600.8 2020.0,1603.1 2002.1,1605.4 1984.0,1607.7 1965.6,1610.1 1947.2,1612.4 1928.7,1614.8 1910.1,1617.1 1891.5,1619.4 1872.9,1621.7 1854.3,1623.9 1835.9,1626.1 1817.6,1628.2 1799.5,1630.3 1781.2,1632.3 1762.3,1634.4 1742.9,1636.4 1723.2,1638.5 1703.3,1640.5 1683.3,1642.5 1663.4,1644.5 1643.6,1646.5 1624.2,1648.4 1605.2,1650.2 1586.8,1651.9 1569.1,1653.6 1552.2,1655.2 1536.3,1656.6 1521.5,1657.9 1508.0,1659.2 1487.9,1660.9 1460.6,1663.1 1442.2,1664.3 1428.6,1664.8 1415.9,1664.9 1400.0,1664.9 1384.2,1664.9 1371.4,1664.7 1357.8,1664.1 1339.3,1662.9 1312.1,1660.8 1292.0,1659.2 1278.4,1658.1 1263.6,1656.8 1247.7,1655.5 1230.9,1654.0 1213.2,1652.4 1194.8,1650.8 1175.8,1649.1 1156.4,1647.3 1136.6,1645.6 1116.7,1643.7 1096.7,1641.9 1076.8,1640.0 1057.0,1638.2 1037.7,1636.4 1018.7,1634.6 1000.4,1632.9 982.3,1631.2 964.0,1629.4 945.6,1627.6 927.0,1625.8 908.4,1624.0 889.8,1622.2 871.1,1620.4 852.6,1618.5 834.1,1616.7 815.8,1614.8 797.7,1613.0 779.8,1611.2 762.2,1609.4 744.8,1607.6 727.9,1605.8 711.3,1604.0 693.6,1602.1 673.6,1599.9 654.2,1597.7 635.4,1595.5 617.0,1593.3 599.0,1591.1 581.4,1588.7 563.9,1586.1 546.6,1583.1 529.5,1579.3 512.4,1574.3 495.5,1566.8 485.4,1557.6 471.1,1537.7 478.3,1538.8 478.2,1533.7 477.2,1525.1 476.2,1516.4 475.4,1507.8 474.7,1499.2 474.1,1490.6 473.6,1481.9 473.2,1473.3 472.9,1464.7 472.6,1456.1 472.4,1447.5 471.8,1438.9 470.9,1430.4 470.1,1421.8 469.3,1413.2 468.6,1404.6 468.0,1396.0 467.4,1387.3 466.9,1378.6 466.4,1369.9 466.0,1361.2 465.6,1352.5 465.3,1343.7 465.0,1334.9 464.8,1326.1 464.6,1317.3 464.4,1308.4 464.3,1299.6 464.1,1290.7 464.0,1281.8 464.0,1273.0 463.9,1264.1 463.9,1255.2 463.9,1246.3 464.0,1237.5 464.1,1228.6 464.2,1219.7 464.3,1210.9 464.5,1202.0 464.7,1193.2 464.9,1184.3 465.2,1175.5 465.5,1166.6 465.8,1157.8 466.1,1148.9 466.5,1140.1 467.0,1131.3 467.4,1122.5 467.9,1113.7 468.5,1104.8 469.1,1096.0 469.7,1087.2 470.3,1078.5 471.0,1069.7 471.8,1060.9 472.5,1052.1 473.3,1043.4 474.2,1034.6 475.1,1025.9 476.0,1017.2 477.0,1008.4 478.0,999.7 479.1,991.0 480.2,982.3 481.4,973.6 482.6,965.0 483.8,956.3 485.1,947.6 486.4,939.0 487.8,930.4 489.3,921.7 490.7,913.1 492.3,904.5 493.8,895.9 495.5,887.4 497.1,878.8 498.9,870.2 500.6,861.7 502.5,853.2 504.4,844.7 506.3,836.2 508.3,827.7 510.3,819.3 512.4,810.8 514.5,802.4 516.7,794.0 519.0,785.6 521.3,777.2 523.6,768.8 526.1,760.5 528.5,752.2 531.1,743.9 533.6,735.6 536.3,727.3 539.0,719.1 541.7,710.9 544.5,702.7 547.4,694.5 550.3,686.3 553.3,678.2 556.3,670.1 559.4,662.0 562.6,653.9 565.8,645.9 569.1,637.9 572.4,629.9 575.8,621.9 579.3,614.0 582.8,606.0 586.4,598.1 590.0,590.3 593.8,582.4 597.5,574.6 601.4,566.8 605.3,559.0 609.2,551.3 613.2,543.6 617.3,535.9 621.5,528.3 625.7,520.7 629.9,513.3 634.2,505.9 638.6,498.5 643.0,491.3 647.5,484.2 652.1,477.2 656.8,470.2 661.5,463.5 666.3,456.8 671.2,450.2 676.2,443.8 681.3,437.5 686.5,431.4 691.8,425.4 697.2,419.6 702.7,413.9 708.3,408.3 714.0,402.9 719.9,397.7 725.9,392.6 732.1,387.6 738.4,382.8 744.9,378.1 751.5,373.5 758.2,369.1 765.1,364.8 772.1,360.7 779.2,356.7 786.5,352.8 793.8,349.1 801.2,345.5 808.8,342.1 816.4,338.8 824.1,335.7 831.9,332.7 839.8,329.9 847.7,327.2 855.8,324.6 863.8,322.3 872.0,320.0 880.2,317.9 888.5,316.0 896.9,314.2 905.4,312.5 914.0,310.9 922.7,309.4 931.5,307.9 940.4,306.3 949.3,304.8 958.3,303.2 967.3,301.5 976.3,299.7 985.4,297.7 994.3,295.7 1001.7,293.9 1006.3,292.8 1011.1,291.8 1015.8,290.7 1020.5,289.6 1025.3,288.5 1030.0,287.7 1000.0,120.0 60.0,120.0 60.0,1790.0 2800.0,1790.0 2800.0,120.0 1790.0,120.0Z" fill="#86215d"/>
<path d="M1730.0,287.6L1739.0,288.5 1748.0,289.6 1757.0,290.7 1766.0,291.8 1775.0,292.8 1784.0,293.8 1793.0,294.7 1801.9,295.5 1810.7,296.4 1819.4,297.6 1828.1,298.8 1836.8,300.3 1845.5,301.9 1854.2,303.7 1862.8,305.6 1871.4,307.7 1879.9,309.9 1888.3,312.3 1896.7,314.9 1905.0,317.7 1913.2,320.5 1921.4,323.6 1929.4,326.8 1937.3,330.2 1945.2,333.7 1952.9,337.4 1960.4,341.3 1967.9,345.3 1975.1,349.4 1982.3,353.7 1989.3,358.2 1996.1,362.8 2002.8,367.6 2009.2,372.5 2015.5,377.5 2021.7,382.7 2027.7,388.1 2033.5,393.6 2039.2,399.2 2044.8,405.1 2050.3,411.0 2055.6,417.1 2060.8,423.4 2066.0,429.7 2071.3,435.9 2076.7,442.0 2082.2,448.3 2087.5,454.7 2092.8,461.2 2097.9,467.8 2103.1,474.5 2108.1,481.4 2113.1,488.4 2117.9,495.4 2122.8,502.6 2127.5,509.8 2132.2,517.1 2136.8,524.5 2141.4,531.9 2145.9,539.4 2150.4,547.0 2154.8,554.6 2159.1,562.2 2163.3,569.8 2167.5,577.4 2171.6,585.1 2175.7,592.9 2179.7,600.6 2183.6,608.4 2187.5,616.2 2191.3,624.0 2195.0,631.8 2198.7,639.7 2202.3,647.6 2205.8,655.5 2209.3,663.5 2212.8,671.5 2216.2,679.5 2219.5,687.5 2222.7,695.5 2225.9,703.6 2229.1,711.7 2232.2,719.8 2235.2,728.0 2238.2,736.2 2241.1,744.4 2244.0,752.6 2246.8,760.8 2249.6,769.1 2252.3,777.4 2255.0,785.7 2257.6,794.0 2260.1,802.3 2262.7,810.7 2265.1,819.1 2267.5,827.5 2269.9,835.9 2272.2,844.4 2274.5,852.8 2276.7,861.3 2278.8,869.8 2281.0,878.3 2283.0,886.8 2285.1,895.4 2287.0,903.9 2289.0,912.5 2290.8,921.1 2292.7,929.7 2294.5,938.3 2296.2,946.9 2297.9,955.6 2299.6,964.2 2301.2,972.9 2302.7,981.6 2304.2,990.3 2305.7,999.0 2307.1,1007.7 2308.5,1016.4 2309.9,1025.1 2311.2,1033.9 2312.4,1042.6 2313.6,1051.4 2314.8,1060.1 2315.9,1068.9 2317.0,1077.7 2318.0,1086.5 2319.0,1095.3 2320.0,1104.1 2320.9,1112.9 2321.8,1121.7 2322.6,1130.5 2323.4,1139.3 2324.1,1148.1 2324.9,1156.9 2325.5,1165.7 2326.2,1174.6 2326.8,1183.4 2327.3,1192.2 2327.8,1201.0 2328.3,1209.9 2328.8,1218.7 2329.2,1227.5 2329.5,1236.4 2329.9,1245.2 2330.2,1254.0 2330.4,1262.8 2330.6,1271.6 2330.8,1280.5 2331.0,1289.3 2331.1,1298.1 2331.2,1306.9 2331.2,1315.7 2331.2,1324.4 2331.2,1333.2 2331.1,1342.0 2331.0,1350.8 2330.8,1359.5 2330.6,1368.3 2330.4,1377.1 2330.1,1385.8 2329.8,1394.6 2329.5,1403.4 2329.1,1412.1 2328.6,1420.9 2328.1,1429.7 2327.6,1438.5 2327.2,1447.3 2327.1,1456.2 2327.3,1465.1 2327.3,1474.0 2327.4,1482.9 2327.3,1491.9 2327.3,1500.9 2327.1,1509.9 2326.9,1518.9 2326.7,1527.9 2327.4,1532.0 2335.0,1530.9 2317.6,1547.6 2306.0,1556.4 2288.9,1563.3 2271.6,1568.1 2254.3,1571.8 2236.9,1574.9 2219.3,1577.6 2201.5,1580.1 2183.4,1582.6 2164.9,1585.0 2146.0,1587.5 2126.5,1590.0 2106.4,1592.5 2088.7,1594.8 2072.1,1596.9 2055.1,1599.1 2037.7,1601.3 2020.1,1603.6 2002.1,1605.9 1984.0,1608.3 1965.7,1610.6 1947.3,1613.0 1928.7,1615.3 1910.1,1617.7 1891.5,1620.0 1872.9,1622.2 1854.4,1624.5 1836.0,1626.7 1817.7,1628.8 1799.6,1630.8 1781.3,1632.8 1762.3,1634.9 1743.0,1636.9 1723.3,1639.0 1703.3,1641.0 1683.3,1643.1 1663.4,1645.1 1643.7,1647.0 1624.2,1648.9 1605.3,1650.7 1586.9,1652.5 1569.2,1654.1 1552.3,1655.7 1536.4,1657.2 1521.6,1658.5 1508.0,1659.7 1488.0,1661.4 1460.7,1663.6 1442.2,1664.8 1428.6,1665.3 1415.9,1665.4 1400.0,1665.4 1384.1,1665.4 1371.4,1665.2 1357.8,1664.7 1339.3,1663.4 1312.0,1661.3 1292.0,1659.7 1278.4,1658.6 1263.6,1657.4 1247.7,1656.0 1230.8,1654.5 1213.1,1653.0 1194.7,1651.3 1175.7,1649.6 1156.3,1647.9 1136.6,1646.1 1116.6,1644.3 1096.6,1642.4 1076.7,1640.6 1057.0,1638.7 1037.6,1636.9 1018.7,1635.2 1000.3,1633.4 982.2,1631.7 963.9,1629.9 945.5,1628.2 927.0,1626.4 908.3,1624.6 889.7,1622.7 871.1,1620.9 852.5,1619.1 834.1,1617.2 815.8,1615.4 797.6,1613.5 779.7,1611.7 762.1,1609.9 744.8,1608.1 727.8,1606.3 711.2,1604.6 693.6,1602.7 673.5,1600.5 654.1,1598.3 635.3,1596.1 617.0,1593.9 599.0,1591.6 581.3,1589.3 563.8,1586.8 546.5,1583.9 529.3,1580.4 512.2,1575.7 495.2,1569.0 484.1,1560.7 468.0,1540.6 473.9,1540.4 473.6,1534.8 472.4,1526.1 471.4,1517.5 470.4,1508.8 469.6,1500.1 468.8,1491.5 468.2,1482.8 467.7,1474.2 467.2,1465.5 466.9,1456.8 466.5,1448.2 465.8,1439.6 464.9,1431.0 464.1,1422.3 463.3,1413.7 462.6,1405.1 462.0,1396.4 461.4,1387.7 460.9,1379.0 460.4,1370.2 460.0,1361.5 459.6,1352.7 459.3,1343.9 459.0,1335.1 458.8,1326.3 458.6,1317.4 458.4,1308.6 458.3,1299.7 458.1,1290.8 458.1,1281.9 458.0,1273.0 457.9,1264.1 457.9,1255.2 458.0,1246.3 458.0,1237.4 458.1,1228.5 458.2,1219.7 458.3,1210.8 458.5,1201.9 458.7,1193.0 458.9,1184.1 459.2,1175.3 459.5,1166.4 459.8,1157.5 460.2,1148.7 460.6,1139.8 461.0,1131.0 461.5,1122.1 462.0,1113.3 462.5,1104.5 463.1,1095.6 463.7,1086.8 464.4,1078.0 465.1,1069.2 465.8,1060.4 466.6,1051.6 467.4,1042.8 468.2,1034.0 469.1,1025.3 470.1,1016.5 471.1,1007.7 472.1,999.0 473.2,990.3 474.3,981.5 475.4,972.8 476.7,964.1 477.9,955.4 479.2,946.7 480.5,938.0 481.9,929.4 483.4,920.7 484.9,912.1 486.4,903.5 488.0,894.8 489.6,886.2 491.3,877.6 493.0,869.0 494.8,860.5 496.7,851.9 498.6,843.4 500.5,834.8 502.5,826.3 504.5,817.8 506.6,809.3 508.8,800.9 511.0,792.4 513.3,784.0 515.6,775.6 518.0,767.2 520.4,758.8 522.9,750.5 525.4,742.1 528.0,733.8 530.7,725.5 533.4,717.2 536.2,708.9 539.0,700.7 541.9,692.5 544.8,684.3 547.8,676.1 550.9,668.0 554.0,659.8 557.2,651.7 560.4,643.7 563.7,635.6 567.1,627.6 570.5,619.6 574.0,611.6 577.6,603.6 581.2,595.7 584.9,587.8 588.6,579.9 592.4,572.0 596.3,564.2 600.2,556.4 604.2,548.6 608.3,540.9 612.4,533.2 616.6,525.5 620.8,517.9 625.1,510.4 629.5,502.9 633.9,495.6 638.4,488.3 643.0,481.1 647.6,474.0 652.3,467.1 657.2,460.2 662.1,453.5 667.1,446.8 672.2,440.4 677.3,434.0 682.6,427.8 688.0,421.8 693.5,415.8 699.2,410.1 704.9,404.5 710.8,399.0 716.8,393.8 722.9,388.6 729.2,383.6 735.7,378.7 742.3,374.0 749.0,369.4 755.9,365.0 762.9,360.7 770.1,356.5 777.3,352.5 784.7,348.7 792.1,345.0 799.7,341.5 807.4,338.1 815.1,334.8 823.0,331.8 830.9,328.8 838.9,326.1 846.9,323.5 855.0,321.0 863.2,318.7 871.5,316.6 879.8,314.7 888.2,312.8 896.6,311.2 905.2,309.6 913.8,308.2 922.6,306.8 931.4,305.4 940.3,304.1 949.3,302.7 958.2,301.3 967.3,299.8 976.3,298.2 985.3,296.5 994.2,294.6 1001.7,293.1 1006.3,292.1 1011.1,291.2 1015.8,290.3 1020.5,289.3 1025.3,288.4 1030.0,287.7 1000.0,120.0 60.0,120.0 60.0,1790.0 2800.0,1790.0 2800.0,120.0 1790.0,120.0Z" fill="#8a2244"/>
<path d="M1730.0,287.5L1739.0,288.3 1748.0,289.3 1757.0,290.2 1766.0,291.1 1775.0,292.0 1784.0,292.8 1793.0,293.5 1801.9,294.2 1810.7,295.0 1819.4,296.0 1828.2,297.1 1837.0,298.4 1845.7,299.9 1854.4,301.5 1863.1,303.3 1871.7,305.3 1880.3,307.4 1888.8,309.7 1897.3,312.2 1905.7,314.8 1914.0,317.6 1922.2,320.5 1930.4,323.6 1938.4,326.9 1946.3,330.4 1954.2,334.0 1961.9,337.7 1969.4,341.6 1976.8,345.7 1984.1,350.0 1991.3,354.3 1998.3,358.9 2005.1,363.6 2011.7,368.5 2018.2,373.5 2024.5,378.6 2030.7,384.0 2036.7,389.5 2042.6,395.1 2048.4,400.9 2054.0,406.9 2059.5,413.0 2064.9,419.2 2070.3,425.6 2075.7,431.8 2081.2,438.1 2086.7,444.4 2092.1,450.8 2097.5,457.4 2102.7,464.1 2107.9,470.9 2113.0,477.9 2118.0,484.9 2122.9,492.0 2127.8,499.2 2132.6,506.5 2137.3,513.9 2141.9,521.3 2146.5,528.8 2151.1,536.4 2155.6,543.9 2160.0,551.6 2164.3,559.2 2168.6,566.9 2172.8,574.6 2176.9,582.3 2181.0,590.1 2185.0,597.9 2189.0,605.7 2192.8,613.5 2196.7,621.4 2200.4,629.3 2204.1,637.2 2207.8,645.1 2211.3,653.1 2214.8,661.1 2218.3,669.1 2221.7,677.2 2225.0,685.2 2228.3,693.3 2231.5,701.4 2234.7,709.6 2237.8,717.7 2240.8,725.9 2243.8,734.1 2246.8,742.4 2249.7,750.6 2252.5,758.9 2255.3,767.2 2258.0,775.5 2260.7,783.8 2263.3,792.2 2265.9,800.6 2268.4,809.0 2270.9,817.4 2273.3,825.9 2275.7,834.3 2278.0,842.8 2280.3,851.3 2282.5,859.8 2284.7,868.3 2286.8,876.9 2288.9,885.4 2290.9,894.0 2292.9,902.6 2294.8,911.2 2296.7,919.8 2298.6,928.5 2300.3,937.1 2302.1,945.8 2303.8,954.5 2305.5,963.1 2307.1,971.8 2308.6,980.5 2310.2,989.3 2311.6,998.0 2313.1,1006.7 2314.4,1015.5 2315.8,1024.2 2317.1,1033.0 2318.3,1041.8 2319.6,1050.6 2320.7,1059.4 2321.9,1068.2 2322.9,1077.0 2324.0,1085.8 2325.0,1094.6 2325.9,1103.4 2326.9,1112.3 2327.7,1121.1 2328.6,1129.9 2329.4,1138.8 2330.1,1147.6 2330.8,1156.5 2331.5,1165.3 2332.2,1174.1 2332.8,1183.0 2333.3,1191.9 2333.8,1200.7 2334.3,1209.6 2334.8,1218.4 2335.2,1227.3 2335.5,1236.1 2335.9,1245.0 2336.2,1253.8 2336.4,1262.7 2336.6,1271.5 2336.8,1280.3 2337.0,1289.2 2337.1,1298.0 2337.2,1306.8 2337.2,1315.6 2337.2,1324.5 2337.2,1333.3 2337.1,1342.1 2337.0,1350.9 2336.8,1359.6 2336.6,1368.4 2336.4,1377.2 2336.1,1386.0 2335.8,1394.8 2335.5,1403.6 2335.0,1412.4 2334.6,1421.2 2334.1,1430.0 2333.5,1438.9 2333.1,1447.7 2333.0,1456.6 2333.0,1465.5 2332.9,1474.5 2332.8,1483.4 2332.7,1492.4 2332.5,1501.4 2332.2,1510.5 2331.9,1519.5 2331.5,1528.5 2332.0,1533.4 2338.2,1533.8 2318.8,1550.7 2306.2,1558.5 2289.0,1564.7 2271.8,1569.1 2254.4,1572.6 2237.0,1575.5 2219.4,1578.2 2201.6,1580.7 2183.5,1583.1 2165.0,1585.6 2146.0,1588.0 2126.6,1590.5 2106.5,1593.1 2088.8,1595.3 2072.1,1597.5 2055.1,1599.6 2037.8,1601.9 2020.1,1604.2 2002.2,1606.5 1984.1,1608.8 1965.8,1611.2 1947.3,1613.5 1928.8,1615.9 1910.2,1618.2 1891.6,1620.5 1873.0,1622.8 1854.5,1625.0 1836.0,1627.2 1817.8,1629.3 1799.7,1631.4 1781.3,1633.4 1762.4,1635.4 1743.0,1637.5 1723.3,1639.5 1703.4,1641.6 1683.4,1643.6 1663.5,1645.6 1643.7,1647.5 1624.3,1649.4 1605.3,1651.3 1586.9,1653.0 1569.2,1654.7 1552.3,1656.2 1536.4,1657.7 1521.6,1659.0 1508.0,1660.2 1488.0,1662.0 1460.7,1664.2 1442.3,1665.4 1428.6,1665.9 1415.9,1666.0 1400.0,1665.9 1384.1,1665.9 1371.4,1665.8 1357.7,1665.2 1339.3,1664.0 1312.0,1661.9 1291.9,1660.3 1278.4,1659.2 1263.5,1657.9 1247.6,1656.5 1230.8,1655.1 1213.1,1653.5 1194.7,1651.9 1175.7,1650.2 1156.3,1648.4 1136.5,1646.6 1116.6,1644.8 1096.6,1643.0 1076.7,1641.1 1056.9,1639.3 1037.6,1637.5 1018.6,1635.7 1000.3,1634.0 982.2,1632.2 963.9,1630.5 945.4,1628.7 926.9,1626.9 908.3,1625.1 889.7,1623.3 871.0,1621.4 852.5,1619.6 834.0,1617.8 815.7,1615.9 797.6,1614.1 779.7,1612.3 762.1,1610.4 744.7,1608.6 727.7,1606.9 711.2,1605.1 693.5,1603.2 673.5,1601.0 654.1,1598.8 635.3,1596.7 616.9,1594.5 598.9,1592.2 581.2,1589.9 563.8,1587.4 546.4,1584.7 529.2,1581.4 512.1,1577.1 495.0,1571.1 482.9,1563.7 464.9,1543.5 469.6,1542.0 469.0,1535.9 467.7,1527.2 466.5,1518.5 465.4,1509.8 464.4,1501.1 463.6,1492.4 462.8,1483.7 462.1,1475.0 461.6,1466.3 461.1,1457.6 460.6,1448.9 459.9,1440.2 459.0,1431.6 458.1,1422.9 457.3,1414.2 456.6,1405.5 456.0,1396.8 455.4,1388.1 454.9,1379.3 454.4,1370.5 454.0,1361.7 453.6,1352.9 453.3,1344.1 453.0,1335.3 452.8,1326.4 452.6,1317.5 452.4,1308.7 452.3,1299.8 452.1,1290.9 452.1,1281.9 452.0,1273.0 452.0,1264.1 451.9,1255.2 452.0,1246.3 452.0,1237.4 452.1,1228.5 452.2,1219.6 452.3,1210.7 452.5,1201.8 452.7,1192.9 452.9,1184.0 453.2,1175.1 453.5,1166.2 453.8,1157.3 454.2,1148.4 454.6,1139.5 455.0,1130.7 455.5,1121.8 456.0,1112.9 456.5,1104.1 457.1,1095.2 457.7,1086.4 458.4,1077.5 459.1,1068.7 459.8,1059.9 460.6,1051.1 461.4,1042.2 462.3,1033.4 463.2,1024.6 464.1,1015.8 465.1,1007.1 466.2,998.3 467.2,989.5 468.4,980.8 469.5,972.0 470.7,963.3 472.0,954.5 473.3,945.8 474.7,937.1 476.1,928.4 477.5,919.7 479.0,911.0 480.5,902.4 482.1,893.7 483.8,885.1 485.5,876.5 487.2,867.8 489.0,859.2 490.9,850.6 492.8,842.1 494.7,833.5 496.7,824.9 498.8,816.4 500.9,807.9 503.1,799.4 505.3,790.9 507.6,782.4 509.9,774.0 512.3,765.5 514.7,757.1 517.2,748.7 519.8,740.4 522.4,732.0 525.1,723.7 527.8,715.3 530.6,707.0 533.4,698.8 536.4,690.5 539.3,682.3 542.3,674.1 545.4,665.9 548.6,657.7 551.8,649.6 555.1,641.4 558.4,633.3 561.8,625.3 565.2,617.2 568.8,609.2 572.3,601.2 576.0,593.2 579.7,585.3 583.5,577.4 587.3,569.5 591.2,561.6 595.2,553.8 599.2,546.0 603.3,538.2 607.4,530.4 611.7,522.7 615.9,515.1 620.3,507.5 624.7,500.0 629.2,492.6 633.7,485.3 638.4,478.0 643.1,470.9 647.9,463.9 652.8,456.9 657.8,450.1 662.9,443.5 668.1,436.9 673.3,430.5 678.7,424.2 684.2,418.1 689.9,412.1 695.6,406.3 701.5,400.6 707.5,395.1 713.6,389.8 719.9,384.6 726.3,379.6 732.9,374.6 739.7,369.9 746.6,365.3 753.6,360.8 760.7,356.5 768.0,352.4 775.4,348.4 782.9,344.6 790.5,340.9 798.2,337.4 805.9,334.1 813.8,330.9 821.8,327.9 829.8,325.0 837.9,322.3 846.1,319.8 854.3,317.4 862.6,315.2 871.0,313.2 879.4,311.4 887.8,309.7 896.4,308.1 905.0,306.7 913.7,305.4 922.5,304.2 931.4,303.0 940.3,301.8 949.2,300.6 958.2,299.4 967.2,298.1 976.3,296.7 985.3,295.2 994.2,293.6 1001.7,292.2 1006.3,291.4 1011.1,290.6 1015.8,289.8 1020.5,289.0 1025.3,288.2 1030.0,287.6 1000.0,120.0 60.0,120.0 60.0,1790.0 2800.0,1790.0 2800.0,120.0 1790.0,120.0Z" fill="#8a2329"/>
<path d="M1730.0,287.5L1739.0,288.1 1748.0,288.9 1757.0,289.7 1766.0,290.4 1775.0,291.1 1784.0,291.8 1793.0,292.4 1801.9,292.9 1810.7,293.6 1819.5,294.4 1828.3,295.4 1837.1,296.6 1845.9,297.9 1854.6,299.4 1863.4,301.1 1872.1,302.9 1880.7,304.9 1889.3,307.1 1897.9,309.4 1906.3,311.9 1914.8,314.6 1923.1,317.5 1931.3,320.5 1939.5,323.6 1947.5,327.0 1955.5,330.5 1963.3,334.1 1971.0,338.0 1978.6,342.0 1986.0,346.2 1993.3,350.5 2000.4,355.0 2007.4,359.6 2014.2,364.5 2020.9,369.4 2027.4,374.6 2033.8,379.9 2040.0,385.4 2046.0,391.0 2052.0,396.8 2057.8,402.8 2063.5,408.9 2069.0,415.1 2074.5,421.5 2080.1,427.8 2085.7,434.1 2091.3,440.5 2096.8,447.0 2102.1,453.7 2107.5,460.5 2112.7,467.4 2117.8,474.4 2122.9,481.4 2127.9,488.6 2132.8,495.9 2137.6,503.3 2142.4,510.7 2147.0,518.2 2151.7,525.7 2156.2,533.3 2160.7,540.9 2165.2,548.6 2169.5,556.3 2173.8,564.0 2178.1,571.7 2182.2,579.5 2186.3,587.3 2190.4,595.1 2194.3,603.0 2198.2,610.9 2202.1,618.8 2205.8,626.7 2209.6,634.7 2213.2,642.7 2216.8,650.7 2220.3,658.7 2223.8,666.8 2227.2,674.8 2230.6,683.0 2233.9,691.1 2237.1,699.2 2240.3,707.4 2243.4,715.6 2246.5,723.8 2249.5,732.1 2252.4,740.4 2255.3,748.6 2258.2,757.0 2261.0,765.3 2263.7,773.7 2266.4,782.0 2269.0,790.4 2271.6,798.8 2274.2,807.3 2276.6,815.7 2279.1,824.2 2281.5,832.7 2283.8,841.2 2286.1,849.8 2288.3,858.3 2290.5,866.9 2292.6,875.4 2294.7,884.0 2296.7,892.6 2298.7,901.3 2300.7,909.9 2302.6,918.6 2304.4,927.2 2306.2,935.9 2308.0,944.6 2309.7,953.3 2311.4,962.0 2313.0,970.8 2314.5,979.5 2316.1,988.2 2317.5,997.0 2319.0,1005.8 2320.4,1014.6 2321.7,1023.4 2323.0,1032.2 2324.3,1041.0 2325.5,1049.8 2326.7,1058.6 2327.8,1067.4 2328.9,1076.3 2329.9,1085.1 2330.9,1093.9 2331.9,1102.8 2332.8,1111.6 2333.7,1120.5 2334.6,1129.4 2335.3,1138.2 2336.1,1147.1 2336.8,1156.0 2337.5,1164.9 2338.1,1173.7 2338.7,1182.6 2339.3,1191.5 2339.8,1200.4 2340.3,1209.2 2340.7,1218.1 2341.2,1227.0 2341.5,1235.9 2341.9,1244.8 2342.2,1253.6 2342.4,1262.5 2342.6,1271.4 2342.8,1280.2 2343.0,1289.1 2343.1,1297.9 2343.2,1306.8 2343.2,1315.6 2343.2,1324.5 2343.2,1333.3 2343.1,1342.1 2343.0,1350.9 2342.8,1359.8 2342.6,1368.6 2342.4,1377.4 2342.1,1386.2 2341.8,1395.1 2341.5,1403.9 2341.0,1412.7 2340.6,1421.6 2340.1,1430.4 2339.5,1439.3 2339.1,1448.1 2338.9,1457.0 2338.7,1466.0 2338.6,1475.0 2338.3,1483.9 2338.0,1492.9 2337.7,1502.0 2337.3,1511.0 2336.9,1520.1 2336.4,1529.1 2336.5,1534.7 2341.4,1536.7 2320.0,1553.7 2306.5,1560.6 2289.2,1566.1 2271.9,1570.2 2254.5,1573.4 2237.1,1576.2 2219.5,1578.8 2201.6,1581.3 2183.5,1583.7 2165.1,1586.1 2146.1,1588.6 2126.6,1591.1 2106.5,1593.6 2088.8,1595.9 2072.2,1598.0 2055.2,1600.2 2037.8,1602.4 2020.2,1604.7 2002.3,1607.0 1984.2,1609.3 1965.9,1611.7 1947.4,1614.0 1928.9,1616.4 1910.3,1618.7 1891.7,1621.0 1873.1,1623.3 1854.5,1625.5 1836.1,1627.7 1817.8,1629.8 1799.7,1631.9 1781.4,1633.9 1762.5,1636.0 1743.1,1638.0 1723.4,1640.1 1703.4,1642.1 1683.5,1644.1 1663.5,1646.1 1643.8,1648.1 1624.3,1650.0 1605.4,1651.8 1587.0,1653.5 1569.3,1655.2 1552.4,1656.8 1536.5,1658.2 1521.7,1659.6 1508.1,1660.8 1488.1,1662.5 1460.8,1664.7 1442.3,1665.9 1428.6,1666.4 1415.9,1666.5 1400.0,1666.5 1384.1,1666.5 1371.4,1666.3 1357.7,1665.7 1339.2,1664.5 1311.9,1662.4 1291.9,1660.8 1278.3,1659.7 1263.5,1658.4 1247.6,1657.1 1230.7,1655.6 1213.0,1654.1 1194.6,1652.4 1175.6,1650.7 1156.2,1649.0 1136.5,1647.2 1116.5,1645.3 1096.5,1643.5 1076.6,1641.7 1056.9,1639.8 1037.5,1638.0 1018.6,1636.2 1000.2,1634.5 982.1,1632.8 963.8,1631.0 945.4,1629.2 926.8,1627.4 908.2,1625.6 889.6,1623.8 871.0,1622.0 852.4,1620.1 834.0,1618.3 815.7,1616.5 797.5,1614.6 779.6,1612.8 762.0,1611.0 744.7,1609.2 727.7,1607.4 711.1,1605.6 693.4,1603.7 673.4,1601.6 654.0,1599.4 635.2,1597.2 616.8,1595.0 598.8,1592.8 581.1,1590.5 563.7,1588.1 546.3,1585.5 529.1,1582.4 511.9,1578.5 494.7,1573.2 481.6,1566.7 461.8,1546.4 465.3,1543.6 464.4,1537.0 462.9,1528.3 461.6,1519.5 460.4,1510.8 459.3,1502.1 458.3,1493.3 457.4,1484.6 456.6,1475.8 455.9,1467.1 455.3,1458.4 454.7,1449.6 453.9,1440.9 453.0,1432.2 452.2,1423.5 451.4,1414.7 450.7,1406.0 450.0,1397.2 449.4,1388.4 448.9,1379.6 448.4,1370.8 448.0,1362.0 447.6,1353.2 447.3,1344.3 447.0,1335.5 446.8,1326.6 446.6,1317.7 446.4,1308.8 446.3,1299.8 446.2,1290.9 446.1,1282.0 446.0,1273.1 446.0,1264.1 445.9,1255.2 446.0,1246.3 446.0,1237.3 446.1,1228.4 446.2,1219.5 446.3,1210.6 446.5,1201.6 446.7,1192.7 446.9,1183.8 447.2,1174.9 447.5,1166.0 447.8,1157.1 448.2,1148.2 448.6,1139.3 449.0,1130.4 449.5,1121.5 450.0,1112.6 450.6,1103.7 451.2,1094.8 451.8,1085.9 452.4,1077.1 453.1,1068.2 453.9,1059.4 454.7,1050.5 455.5,1041.7 456.4,1032.8 457.3,1024.0 458.2,1015.2 459.2,1006.4 460.2,997.6 461.3,988.8 462.4,980.0 463.6,971.2 464.8,962.4 466.1,953.7 467.4,944.9 468.8,936.2 470.2,927.4 471.6,918.7 473.1,910.0 474.7,901.3 476.3,892.6 477.9,883.9 479.6,875.3 481.4,866.6 483.2,858.0 485.1,849.4 487.0,840.7 488.9,832.1 491.0,823.6 493.0,815.0 495.2,806.4 497.3,797.9 499.6,789.4 501.9,780.9 504.2,772.4 506.6,763.9 509.1,755.4 511.6,747.0 514.2,738.6 516.8,730.2 519.5,721.8 522.2,713.5 525.0,705.1 527.9,696.8 530.8,688.5 533.8,680.2 536.9,672.0 540.0,663.8 543.2,655.6 546.4,647.4 549.7,639.2 553.0,631.1 556.5,623.0 559.9,614.9 563.5,606.8 567.1,598.8 570.8,590.8 574.5,582.8 578.3,574.8 582.2,566.9 586.1,559.0 590.1,551.1 594.2,543.3 598.3,535.5 602.5,527.7 606.8,519.9 611.1,512.3 615.5,504.6 620.0,497.1 624.5,489.6 629.1,482.2 633.8,474.9 638.6,467.7 643.5,460.7 648.5,453.7 653.5,446.8 658.7,440.1 664.0,433.5 669.4,427.0 674.9,420.7 680.5,414.5 686.2,408.4 692.1,402.5 698.1,396.8 704.2,391.2 710.5,385.8 716.9,380.6 723.5,375.5 730.2,370.6 737.1,365.8 744.1,361.2 751.3,356.7 758.5,352.4 765.9,348.3 773.4,344.3 781.1,340.5 788.8,336.8 796.6,333.4 804.5,330.1 812.5,326.9 820.6,324.0 828.8,321.2 837.0,318.5 845.3,316.1 853.6,313.8 862.0,311.7 870.5,309.8 879.0,308.1 887.5,306.5 896.1,305.1 904.8,303.8 913.6,302.7 922.4,301.6 931.3,300.6 940.2,299.5 949.2,298.5 958.2,297.5 967.2,296.4 976.2,295.2 985.2,294.0 994.2,292.6 1001.7,291.4 1006.3,290.7 1011.1,290.1 1015.8,289.4 1020.5,288.8 1025.3,288.1 1030.0,287.6 1000.0,120.0 60.0,120.0 60.0,1790.0 2800.0,1790.0 2800.0,120.0 1790.0,120.0Z" fill="#8b2417"/>
<path d="M1730.0,287.4L1739.0,287.9 1748.0,288.5 1757.0,289.1 1766.0,289.7 1775.0,290.3 1784.0,290.8 1793.0,291.3 1801.9,291.6 1810.7,292.2 1819.5,292.9 1828.4,293.7 1837.2,294.8 1846.1,296.0 1854.9,297.3 1863.7,298.9 1872.4,300.6 1881.1,302.4 1889.8,304.5 1898.4,306.7 1907.0,309.1 1915.5,311.6 1923.9,314.4 1932.3,317.3 1940.5,320.3 1948.7,323.6 1956.8,327.0 1964.7,330.6 1972.5,334.3 1980.3,338.3 1987.8,342.4 1995.3,346.6 2002.6,351.1 2009.8,355.7 2016.8,360.5 2023.6,365.4 2030.3,370.5 2036.8,375.8 2043.2,381.3 2049.4,386.9 2055.6,392.7 2061.5,398.7 2067.4,404.8 2073.2,411.0 2078.8,417.4 2084.5,423.7 2090.2,430.1 2095.8,436.6 2101.4,443.2 2106.8,450.0 2112.2,456.8 2117.5,463.8 2122.7,470.8 2127.8,478.0 2132.8,485.2 2137.7,492.6 2142.6,500.0 2147.4,507.5 2152.1,515.0 2156.8,522.6 2161.4,530.2 2165.9,537.9 2170.4,545.6 2174.8,553.3 2179.1,561.1 2183.3,568.9 2187.5,576.7 2191.6,584.5 2195.7,592.4 2199.7,600.3 2203.6,608.2 2207.5,616.2 2211.3,624.2 2215.0,632.2 2218.7,640.2 2222.3,648.2 2225.8,656.3 2229.3,664.4 2232.8,672.5 2236.1,680.7 2239.4,688.8 2242.7,697.0 2245.9,705.3 2249.0,713.5 2252.1,721.8 2255.1,730.1 2258.1,738.4 2261.0,746.7 2263.9,755.0 2266.7,763.4 2269.4,771.8 2272.1,780.2 2274.8,788.6 2277.4,797.1 2279.9,805.6 2282.4,814.1 2284.8,822.6 2287.2,831.1 2289.6,839.7 2291.9,848.2 2294.1,856.8 2296.3,865.4 2298.4,874.0 2300.5,882.6 2302.6,891.3 2304.6,899.9 2306.5,908.6 2308.4,917.3 2310.3,926.0 2312.1,934.7 2313.9,943.4 2315.6,952.2 2317.2,960.9 2318.9,969.7 2320.4,978.5 2322.0,987.2 2323.5,996.0 2324.9,1004.8 2326.3,1013.6 2327.7,1022.5 2329.0,1031.3 2330.2,1040.1 2331.5,1049.0 2332.6,1057.8 2333.8,1066.7 2334.9,1075.5 2335.9,1084.4 2336.9,1093.3 2337.9,1102.2 2338.8,1111.0 2339.7,1119.9 2340.5,1128.8 2341.3,1137.7 2342.1,1146.6 2342.8,1155.5 2343.5,1164.4 2344.1,1173.3 2344.7,1182.2 2345.3,1191.1 2345.8,1200.0 2346.3,1208.9 2346.7,1217.8 2347.1,1226.7 2347.5,1235.6 2347.9,1244.5 2348.1,1253.4 2348.4,1262.3 2348.6,1271.2 2348.8,1280.1 2349.0,1289.0 2349.1,1297.9 2349.2,1306.7 2349.2,1315.6 2349.2,1324.5 2349.2,1333.3 2349.1,1342.2 2349.0,1351.0 2348.8,1359.9 2348.6,1368.7 2348.4,1377.6 2348.1,1386.4 2347.8,1395.3 2347.4,1404.1 2347.0,1413.0 2346.6,1421.9 2346.1,1430.8 2345.5,1439.6 2345.0,1448.6 2344.7,1457.5 2344.5,1466.5 2344.2,1475.4 2343.8,1484.4 2343.4,1493.5 2342.9,1502.5 2342.4,1511.6 2341.8,1520.7 2341.2,1529.7 2341.1,1536.1 2344.6,1539.6 2321.2,1556.8 2306.8,1562.7 2289.4,1567.5 2272.0,1571.2 2254.6,1574.2 2237.2,1576.9 2219.5,1579.4 2201.7,1581.9 2183.6,1584.3 2165.1,1586.7 2146.2,1589.1 2126.7,1591.6 2106.6,1594.2 2088.9,1596.4 2072.3,1598.5 2055.3,1600.7 2037.9,1602.9 2020.3,1605.2 2002.4,1607.5 1984.2,1609.9 1965.9,1612.2 1947.5,1614.6 1928.9,1616.9 1910.3,1619.3 1891.7,1621.6 1873.1,1623.8 1854.6,1626.1 1836.2,1628.3 1817.9,1630.4 1799.8,1632.4 1781.4,1634.5 1762.5,1636.5 1743.1,1638.6 1723.4,1640.6 1703.5,1642.7 1683.5,1644.7 1663.6,1646.7 1643.8,1648.6 1624.4,1650.5 1605.4,1652.3 1587.0,1654.1 1569.3,1655.7 1552.4,1657.3 1536.5,1658.8 1521.7,1660.1 1508.1,1661.3 1488.1,1663.0 1460.8,1665.2 1442.3,1666.5 1428.7,1667.0 1415.9,1667.1 1400.0,1667.0 1384.1,1667.0 1371.3,1666.8 1357.7,1666.3 1339.2,1665.1 1311.9,1663.0 1291.8,1661.4 1278.3,1660.2 1263.5,1659.0 1247.6,1657.6 1230.7,1656.1 1213.0,1654.6 1194.6,1653.0 1175.6,1651.3 1156.2,1649.5 1136.4,1647.7 1116.5,1645.9 1096.5,1644.0 1076.6,1642.2 1056.8,1640.4 1037.5,1638.5 1018.5,1636.8 1000.2,1635.0 982.1,1633.3 963.8,1631.6 945.3,1629.8 926.8,1628.0 908.2,1626.2 889.6,1624.3 870.9,1622.5 852.4,1620.7 833.9,1618.8 815.6,1617.0 797.5,1615.2 779.6,1613.3 761.9,1611.5 744.6,1609.7 727.6,1607.9 711.0,1606.2 693.4,1604.3 673.4,1602.1 654.0,1599.9 635.1,1597.8 616.8,1595.6 598.8,1593.4 581.1,1591.2 563.6,1588.8 546.3,1586.3 529.0,1583.4 511.7,1579.9 494.5,1575.3 480.4,1569.8 458.7,1549.3 460.9,1545.2 459.7,1538.1 458.2,1529.3 456.7,1520.6 455.4,1511.8 454.2,1503.0 453.0,1494.2 452.0,1485.5 451.1,1476.7 450.2,1467.9 449.5,1459.1 448.8,1450.3 448.0,1441.6 447.0,1432.8 446.2,1424.0 445.4,1415.2 444.7,1406.4 444.0,1397.6 443.4,1388.8 442.9,1380.0 442.4,1371.1 442.0,1362.3 441.6,1353.4 441.3,1344.5 441.0,1335.6 440.8,1326.7 440.6,1317.8 440.4,1308.9 440.3,1299.9 440.2,1291.0 440.1,1282.0 440.0,1273.1 440.0,1264.1 440.0,1255.2 440.0,1246.2 440.0,1237.3 440.1,1228.4 440.2,1219.4 440.3,1210.5 440.5,1201.5 440.7,1192.6 440.9,1183.6 441.2,1174.7 441.5,1165.8 441.8,1156.8 442.2,1147.9 442.6,1139.0 443.1,1130.1 443.5,1121.1 444.0,1112.2 444.6,1103.3 445.2,1094.4 445.8,1085.5 446.5,1076.6 447.2,1067.7 447.9,1058.8 448.7,1050.0 449.5,1041.1 450.4,1032.2 451.3,1023.4 452.3,1014.5 453.3,1005.7 454.3,996.8 455.4,988.0 456.5,979.2 457.7,970.4 458.9,961.6 460.2,952.8 461.5,944.0 462.9,935.2 464.3,926.5 465.7,917.7 467.3,909.0 468.8,900.2 470.4,891.5 472.1,882.8 473.8,874.1 475.6,865.4 477.4,856.7 479.3,848.1 481.2,839.4 483.1,830.8 485.2,822.2 487.3,813.6 489.4,805.0 491.6,796.4 493.8,787.8 496.2,779.3 498.5,770.8 500.9,762.3 503.4,753.8 505.9,745.3 508.5,736.8 511.2,728.4 513.9,720.0 516.7,711.6 519.5,703.2 522.4,694.9 525.3,686.5 528.3,678.2 531.4,669.9 534.5,661.7 537.7,653.4 541.0,645.2 544.3,637.0 547.7,628.8 551.1,620.7 554.6,612.5 558.2,604.4 561.8,596.4 565.6,588.3 569.3,580.3 573.2,572.3 577.1,564.3 581.0,556.4 585.1,548.5 589.2,540.6 593.3,532.7 597.6,524.9 601.9,517.1 606.2,509.4 610.7,501.8 615.2,494.2 619.8,486.7 624.5,479.2 629.2,471.9 634.1,464.6 639.0,457.5 644.1,450.4 649.3,443.5 654.5,436.7 659.9,430.0 665.4,423.5 671.0,417.1 676.7,410.8 682.5,404.7 688.5,398.8 694.6,393.0 700.9,387.3 707.3,381.9 713.9,376.6 720.6,371.5 727.5,366.5 734.5,361.7 741.6,357.0 748.9,352.6 756.3,348.3 763.9,344.1 771.5,340.2 779.3,336.4 787.1,332.8 795.1,329.3 803.1,326.0 811.2,323.0 819.4,320.0 827.7,317.3 836.1,314.8 844.5,312.4 852.9,310.2 861.4,308.2 870.0,306.4 878.6,304.8 887.2,303.3 895.9,302.1 904.6,300.9 913.5,299.9 922.3,299.0 931.2,298.1 940.2,297.3 949.1,296.5 958.1,295.6 967.2,294.7 976.2,293.8 985.2,292.7 994.1,291.5 1001.6,290.5 1006.3,290.0 1011.1,289.5 1015.8,289.0 1020.5,288.5 1025.3,287.9 1030.0,287.6 1000.0,120.0 60.0,120.0 60.0,1790.0 2800.0,1790.0 2800.0,120.0 1790.0,120.0Z" fill="#8d2616"/>
<path d="M1730.0,287.4L1739.0,287.7 1748.0,288.2 1757.0,288.6 1766.0,289.0 1775.0,289.4 1784.0,289.8 1793.0,290.1 1801.9,290.4 1810.7,290.8 1819.6,291.3 1828.5,292.0 1837.3,292.9 1846.2,294.0 1855.1,295.2 1863.9,296.6 1872.8,298.2 1881.6,300.0 1890.3,301.9 1899.0,304.0 1907.7,306.2 1916.3,308.7 1924.8,311.3 1933.2,314.1 1941.6,317.1 1949.9,320.2 1958.1,323.5 1966.1,327.0 1974.1,330.7 1982.0,334.5 1989.7,338.6 1997.3,342.8 2004.8,347.2 2012.1,351.7 2019.3,356.5 2026.3,361.4 2033.1,366.5 2039.8,371.7 2046.4,377.2 2052.8,382.8 2059.1,388.6 2065.3,394.5 2071.4,400.6 2077.3,406.9 2083.1,413.3 2088.9,419.7 2094.7,426.1 2100.4,432.7 2106.0,439.4 2111.5,446.2 2117.0,453.1 2122.3,460.2 2127.5,467.3 2132.7,474.5 2137.8,481.9 2142.7,489.2 2147.7,496.7 2152.5,504.2 2157.2,511.8 2161.9,519.5 2166.5,527.2 2171.1,534.9 2175.6,542.6 2180.0,550.4 2184.3,558.2 2188.6,566.0 2192.8,573.9 2197.0,581.8 2201.0,589.7 2205.1,597.6 2209.0,605.6 2212.9,613.6 2216.7,621.6 2220.5,629.6 2224.1,637.7 2227.8,645.8 2231.3,653.9 2234.9,662.1 2238.3,670.2 2241.7,678.4 2245.0,686.6 2248.3,694.8 2251.5,703.1 2254.6,711.4 2257.7,719.7 2260.8,728.0 2263.8,736.4 2266.7,744.7 2269.6,753.1 2272.4,761.5 2275.1,770.0 2277.8,778.4 2280.5,786.9 2283.1,795.4 2285.7,803.9 2288.2,812.4 2290.6,820.9 2293.0,829.5 2295.4,838.1 2297.7,846.7 2299.9,855.3 2302.1,863.9 2304.3,872.6 2306.4,881.2 2308.4,889.9 2310.4,898.6 2312.4,907.3 2314.3,916.0 2316.2,924.8 2318.0,933.5 2319.7,942.3 2321.5,951.0 2323.1,959.8 2324.8,968.6 2326.4,977.4 2327.9,986.2 2329.4,995.0 2330.8,1003.9 2332.2,1012.7 2333.6,1021.6 2334.9,1030.4 2336.2,1039.3 2337.4,1048.2 2338.6,1057.0 2339.7,1065.9 2340.8,1074.8 2341.9,1083.7 2342.9,1092.6 2343.8,1101.5 2344.8,1110.4 2345.7,1119.3 2346.5,1128.3 2347.3,1137.2 2348.1,1146.1 2348.8,1155.0 2349.5,1164.0 2350.1,1172.9 2350.7,1181.8 2351.3,1190.8 2351.8,1199.7 2352.3,1208.6 2352.7,1217.5 2353.1,1226.5 2353.5,1235.4 2353.8,1244.3 2354.1,1253.3 2354.4,1262.2 2354.6,1271.1 2354.8,1280.0 2355.0,1288.9 2355.1,1297.8 2355.2,1306.7 2355.2,1315.6 2355.2,1324.5 2355.2,1333.4 2355.1,1342.2 2355.0,1351.1 2354.8,1360.0 2354.6,1368.9 2354.4,1377.8 2354.1,1386.6 2353.8,1395.5 2353.4,1404.4 2353.0,1413.3 2352.6,1422.2 2352.1,1431.1 2351.5,1440.0 2351.0,1449.0 2350.6,1457.9 2350.2,1466.9 2349.8,1475.9 2349.3,1485.0 2348.8,1494.0 2348.2,1503.1 2347.5,1512.2 2346.8,1521.3 2346.1,1530.3 2345.6,1537.5 2347.8,1542.5 2322.4,1559.9 2307.0,1564.8 2289.6,1568.9 2272.2,1572.2 2254.7,1575.0 2237.2,1577.6 2219.6,1580.0 2201.8,1582.4 2183.7,1584.8 2165.2,1587.2 2146.3,1589.7 2126.8,1592.1 2106.7,1594.7 2089.0,1596.9 2072.3,1599.1 2055.3,1601.2 2038.0,1603.5 2020.3,1605.8 2002.4,1608.1 1984.3,1610.4 1966.0,1612.8 1947.5,1615.1 1929.0,1617.5 1910.4,1619.8 1891.8,1622.1 1873.2,1624.4 1854.7,1626.6 1836.2,1628.8 1817.9,1630.9 1799.8,1633.0 1781.5,1635.0 1762.6,1637.0 1743.2,1639.1 1723.5,1641.2 1703.6,1643.2 1683.6,1645.2 1663.6,1647.2 1643.9,1649.2 1624.4,1651.0 1605.5,1652.9 1587.1,1654.6 1569.4,1656.3 1552.5,1657.8 1536.6,1659.3 1521.8,1660.6 1508.2,1661.8 1488.1,1663.6 1460.8,1665.8 1442.3,1667.0 1428.7,1667.5 1415.9,1667.6 1400.0,1667.6 1384.1,1667.6 1371.3,1667.4 1357.7,1666.8 1339.2,1665.6 1311.9,1663.5 1291.8,1661.9 1278.2,1660.8 1263.4,1659.5 1247.5,1658.2 1230.6,1656.7 1212.9,1655.1 1194.5,1653.5 1175.5,1651.8 1156.1,1650.0 1136.4,1648.2 1116.4,1646.4 1096.4,1644.6 1076.5,1642.7 1056.8,1640.9 1037.4,1639.1 1018.5,1637.3 1000.1,1635.6 982.0,1633.8 963.7,1632.1 945.3,1630.3 926.7,1628.5 908.1,1626.7 889.5,1624.9 870.9,1623.1 852.3,1621.2 833.9,1619.4 815.6,1617.5 797.4,1615.7 779.5,1613.9 761.9,1612.1 744.6,1610.3 727.6,1608.5 711.0,1606.7 693.3,1604.8 673.3,1602.6 653.9,1600.5 635.1,1598.3 616.7,1596.1 598.7,1594.0 581.0,1591.8 563.5,1589.5 546.2,1587.1 528.9,1584.5 511.6,1581.3 494.2,1577.4 479.1,1572.8 455.6,1552.2 456.6,1546.8 455.1,1539.2 453.4,1530.4 451.8,1521.6 450.4,1512.8 449.0,1504.0 447.8,1495.2 446.6,1486.3 445.5,1477.5 444.6,1468.7 443.7,1459.9 442.9,1451.0 442.0,1442.2 441.1,1433.4 440.2,1424.6 439.4,1415.8 438.7,1406.9 438.0,1398.1 437.5,1389.2 436.9,1380.3 436.4,1371.4 436.0,1362.5 435.7,1353.6 435.3,1344.7 435.1,1335.8 434.8,1326.9 434.6,1317.9 434.4,1309.0 434.3,1300.0 434.2,1291.1 434.1,1282.1 434.0,1273.1 434.0,1264.2 434.0,1255.2 434.0,1246.2 434.0,1237.3 434.1,1228.3 434.2,1219.3 434.3,1210.4 434.5,1201.4 434.7,1192.4 435.0,1183.5 435.2,1174.5 435.5,1165.5 435.9,1156.6 436.2,1147.6 436.6,1138.7 437.1,1129.7 437.6,1120.8 438.1,1111.9 438.6,1102.9 439.2,1094.0 439.8,1085.1 440.5,1076.2 441.2,1067.2 442.0,1058.3 442.7,1049.4 443.6,1040.5 444.5,1031.6 445.4,1022.7 446.3,1013.9 447.3,1005.0 448.4,996.1 449.5,987.3 450.6,978.4 451.8,969.6 453.0,960.7 454.3,951.9 455.6,943.1 457.0,934.3 458.4,925.5 459.9,916.7 461.4,907.9 463.0,899.2 464.6,890.4 466.2,881.7 468.0,872.9 469.7,864.2 471.6,855.5 473.4,846.8 475.4,838.1 477.4,829.4 479.4,820.8 481.5,812.1 483.7,803.5 485.9,794.9 488.1,786.3 490.4,777.7 492.8,769.2 495.3,760.6 497.7,752.1 500.3,743.6 502.9,735.1 505.6,726.6 508.3,718.1 511.1,709.7 513.9,701.3 516.8,692.9 519.8,684.5 522.8,676.2 525.9,667.9 529.1,659.5 532.3,651.3 535.6,643.0 538.9,634.8 542.3,626.6 545.8,618.4 549.3,610.2 552.9,602.1 556.6,594.0 560.3,585.9 564.1,577.8 568.0,569.8 571.9,561.8 575.9,553.8 580.0,545.8 584.2,537.9 588.4,530.0 592.6,522.2 597.0,514.4 601.4,506.6 605.9,498.9 610.4,491.2 615.1,483.7 619.8,476.2 624.7,468.8 629.6,461.5 634.6,454.3 639.7,447.2 645.0,440.2 650.3,433.3 655.8,426.6 661.4,420.0 667.1,413.5 672.9,407.2 678.9,401.0 685.0,395.0 691.2,389.1 697.6,383.4 704.2,377.9 710.9,372.6 717.7,367.4 724.7,362.4 731.9,357.6 739.2,352.9 746.6,348.4 754.1,344.1 761.8,340.0 769.6,336.0 777.5,332.3 785.5,328.7 793.5,325.3 801.7,322.0 809.9,319.0 818.3,316.1 826.7,313.5 835.1,311.0 843.6,308.7 852.2,306.6 860.8,304.7 869.5,303.0 878.1,301.5 886.9,300.2 895.6,299.0 904.5,298.0 913.3,297.2 922.2,296.4 931.2,295.7 940.1,295.0 949.1,294.4 958.1,293.7 967.1,293.0 976.1,292.3 985.1,291.4 994.1,290.5 1001.6,289.7 1006.3,289.3 1011.1,288.9 1015.8,288.6 1020.5,288.2 1025.3,287.8 1030.0,287.5 1000.0,120.0 60.0,120.0 60.0,1790.0 2800.0,1790.0 2800.0,120.0 1790.0,120.0Z" fill="#8f2714"/>
<path d="M1730.0,287.3L1739.0,287.5 1748.0,287.8 1757.0,288.1 1766.0,288.3 1775.0,288.6 1784.0,288.8 1793.0,289.0 1801.8,289.1 1810.7,289.3 1819.6,289.8 1828.5,290.3 1837.5,291.1 1846.4,292.0 1855.3,293.1 1864.2,294.4 1873.1,295.8 1882.0,297.5 1890.8,299.3 1899.6,301.2 1908.3,303.4 1917.0,305.7 1925.6,308.2 1934.2,310.9 1942.7,313.8 1951.1,316.8 1959.4,320.0 1967.6,323.4 1975.7,327.0 1983.7,330.8 1991.6,334.8 1999.3,338.9 2006.9,343.2 2014.4,347.8 2021.8,352.4 2029.0,357.3 2036.0,362.4 2042.9,367.7 2049.6,373.1 2056.3,378.7 2062.7,384.5 2069.1,390.4 2075.3,396.5 2081.4,402.8 2087.4,409.2 2093.3,415.6 2099.2,422.1 2105.0,428.8 2110.7,435.6 2116.2,442.5 2121.7,449.5 2127.1,456.6 2132.4,463.8 2137.6,471.1 2142.7,478.5 2147.7,485.9 2152.7,493.4 2157.5,501.0 2162.3,508.7 2167.1,516.4 2171.7,524.1 2176.3,531.8 2180.8,539.6 2185.2,547.5 2189.6,555.3 2193.9,563.2 2198.1,571.1 2202.3,579.0 2206.4,587.0 2210.4,594.9 2214.4,602.9 2218.3,611.0 2222.1,619.0 2225.9,627.1 2229.6,635.2 2233.3,643.4 2236.8,651.5 2240.4,659.7 2243.8,667.9 2247.2,676.1 2250.6,684.4 2253.9,692.7 2257.1,701.0 2260.3,709.3 2263.4,717.6 2266.4,726.0 2269.4,734.4 2272.4,742.8 2275.2,751.2 2278.1,759.6 2280.8,768.1 2283.6,776.6 2286.2,785.1 2288.8,793.6 2291.4,802.2 2293.9,810.7 2296.4,819.3 2298.8,827.9 2301.2,836.5 2303.5,845.2 2305.7,853.8 2307.9,862.5 2310.1,871.1 2312.2,879.8 2314.3,888.5 2316.3,897.3 2318.3,906.0 2320.2,914.8 2322.0,923.5 2323.9,932.3 2325.6,941.1 2327.4,949.9 2329.0,958.7 2330.7,967.5 2332.3,976.4 2333.8,985.2 2335.3,994.1 2336.8,1002.9 2338.2,1011.8 2339.5,1020.7 2340.8,1029.6 2342.1,1038.5 2343.3,1047.4 2344.5,1056.3 2345.7,1065.2 2346.8,1074.1 2347.8,1083.0 2348.8,1092.0 2349.8,1100.9 2350.7,1109.8 2351.6,1118.8 2352.5,1127.7 2353.3,1136.7 2354.0,1145.6 2354.8,1154.6 2355.5,1163.5 2356.1,1172.5 2356.7,1181.4 2357.3,1190.4 2357.8,1199.4 2358.3,1208.3 2358.7,1217.3 2359.1,1226.2 2359.5,1235.2 2359.8,1244.1 2360.1,1253.1 2360.4,1262.0 2360.6,1270.9 2360.8,1279.9 2361.0,1288.8 2361.1,1297.7 2361.2,1306.7 2361.2,1315.6 2361.2,1324.5 2361.2,1333.4 2361.1,1342.3 2361.0,1351.2 2360.8,1360.1 2360.6,1369.0 2360.4,1377.9 2360.1,1386.8 2359.8,1395.7 2359.4,1404.7 2359.0,1413.6 2358.6,1422.5 2358.0,1431.5 2357.5,1440.4 2356.9,1449.4 2356.4,1458.4 2355.9,1467.4 2355.4,1476.4 2354.8,1485.5 2354.1,1494.5 2353.4,1503.6 2352.6,1512.7 2351.8,1521.8 2350.9,1531.0 2350.2,1538.9 2351.0,1545.4 2323.7,1562.9 2307.3,1566.9 2289.8,1570.3 2272.3,1573.2 2254.8,1575.8 2237.3,1578.3 2219.7,1580.7 2201.9,1583.0 2183.8,1585.4 2165.3,1587.8 2146.3,1590.2 2126.8,1592.7 2106.7,1595.2 2089.0,1597.5 2072.4,1599.6 2055.4,1601.8 2038.0,1604.0 2020.4,1606.3 2002.5,1608.6 1984.4,1610.9 1966.1,1613.3 1947.6,1615.6 1929.1,1618.0 1910.5,1620.3 1891.8,1622.6 1873.3,1624.9 1854.7,1627.2 1836.3,1629.3 1818.0,1631.5 1799.9,1633.5 1781.6,1635.5 1762.6,1637.6 1743.2,1639.6 1723.5,1641.7 1703.6,1643.7 1683.6,1645.8 1663.7,1647.7 1643.9,1649.7 1624.5,1651.6 1605.5,1653.4 1587.1,1655.2 1569.4,1656.8 1552.5,1658.4 1536.6,1659.8 1521.8,1661.2 1508.2,1662.4 1488.2,1664.1 1460.9,1666.3 1442.4,1667.5 1428.7,1668.0 1415.9,1668.1 1400.0,1668.1 1384.1,1668.1 1371.3,1667.9 1357.6,1667.3 1339.1,1666.1 1311.8,1664.0 1291.8,1662.4 1278.2,1661.3 1263.4,1660.1 1247.5,1658.7 1230.6,1657.2 1212.9,1655.7 1194.5,1654.0 1175.5,1652.3 1156.1,1650.6 1136.3,1648.8 1116.4,1647.0 1096.4,1645.1 1076.5,1643.3 1056.7,1641.4 1037.4,1639.6 1018.4,1637.8 1000.1,1636.1 982.0,1634.4 963.7,1632.6 945.2,1630.9 926.7,1629.1 908.1,1627.2 889.4,1625.4 870.8,1623.6 852.3,1621.7 833.8,1619.9 815.5,1618.1 797.4,1616.2 779.5,1614.4 761.8,1612.6 744.5,1610.8 727.5,1609.0 710.9,1607.3 693.3,1605.4 673.2,1603.2 653.8,1601.0 635.0,1598.9 616.6,1596.7 598.6,1594.6 580.9,1592.4 563.4,1590.2 546.1,1587.9 528.7,1585.5 511.4,1582.8 494.0,1579.5 477.8,1575.8 452.5,1555.1 452.2,1548.4 450.5,1540.3 448.7,1531.5 447.0,1522.6 445.4,1513.8 443.9,1504.9 442.5,1496.1 441.2,1487.2 440.0,1478.4 438.9,1469.5 437.9,1460.6 437.0,1451.8 436.0,1442.9 435.1,1434.0 434.2,1425.1 433.4,1416.3 432.7,1407.4 432.1,1398.5 431.5,1389.6 430.9,1380.7 430.5,1371.7 430.0,1362.8 429.7,1353.9 429.3,1344.9 429.1,1336.0 428.8,1327.0 428.6,1318.1 428.4,1309.1 428.3,1300.1 428.2,1291.1 428.1,1282.1 428.0,1273.2 428.0,1264.2 428.0,1255.2 428.0,1246.2 428.0,1237.2 428.1,1228.2 428.2,1219.2 428.4,1210.3 428.5,1201.3 428.7,1192.3 429.0,1183.3 429.2,1174.3 429.5,1165.3 429.9,1156.4 430.2,1147.4 430.7,1138.4 431.1,1129.4 431.6,1120.5 432.1,1111.5 432.6,1102.5 433.2,1093.6 433.9,1084.6 434.5,1075.7 435.2,1066.7 436.0,1057.8 436.8,1048.9 437.6,1040.0 438.5,1031.0 439.4,1022.1 440.4,1013.2 441.4,1004.3 442.4,995.4 443.5,986.5 444.7,977.6 445.9,968.8 447.1,959.9 448.4,951.1 449.7,942.2 451.1,933.4 452.5,924.5 454.0,915.7 455.5,906.9 457.1,898.1 458.7,889.3 460.4,880.5 462.1,871.8 463.9,863.0 465.7,854.3 467.6,845.5 469.6,836.8 471.6,828.1 473.6,819.4 475.7,810.7 477.9,802.1 480.1,793.4 482.4,784.8 484.7,776.1 487.1,767.5 489.6,759.0 492.1,750.4 494.6,741.8 497.3,733.3 500.0,724.8 502.7,716.3 505.5,707.8 508.4,699.4 511.3,691.0 514.3,682.5 517.3,674.1 520.5,665.8 523.6,657.4 526.9,649.1 530.2,640.8 533.5,632.5 537.0,624.3 540.5,616.1 544.0,607.9 547.7,599.7 551.4,591.5 555.1,583.4 559.0,575.3 562.9,567.2 566.8,559.2 570.9,551.2 575.0,543.2 579.1,535.3 583.4,527.3 587.7,519.4 592.1,511.6 596.5,503.8 601.1,496.0 605.7,488.3 610.4,480.7 615.2,473.2 620.1,465.7 625.1,458.3 630.2,451.1 635.4,443.9 640.7,436.9 646.1,429.9 651.7,423.1 657.4,416.4 663.2,409.9 669.1,403.5 675.2,397.3 681.4,391.2 687.8,385.3 694.3,379.5 701.0,374.0 707.8,368.6 714.8,363.4 722.0,358.3 729.3,353.5 736.7,348.8 744.3,344.3 751.9,340.0 759.7,335.9 767.7,331.9 775.7,328.2 783.8,324.6 792.0,321.2 800.3,318.0 808.7,315.0 817.1,312.2 825.6,309.6 834.2,307.2 842.8,305.0 851.5,303.0 860.2,301.2 869.0,299.6 877.7,298.2 886.6,297.0 895.4,296.0 904.3,295.1 913.2,294.4 922.1,293.8 931.1,293.2 940.1,292.8 949.1,292.3 958.1,291.8 967.1,291.4 976.1,290.8 985.1,290.2 994.1,289.4 1001.6,288.8 1006.3,288.6 1011.1,288.3 1015.8,288.1 1020.5,287.9 1025.3,287.6 1030.0,287.5 1000.0,120.0 60.0,120.0 60.0,1790.0 2800.0,1790.0 2800.0,120.0 1790.0,120.0Z" fill="#912812"/>
<path d="M1730.0,287.2L1739.0,287.3 1748.0,287.4 1757.0,287.6 1766.0,287.7 1775.0,287.8 1784.0,287.9 1793.0,287.9 1801.8,287.8 1810.7,287.9 1819.7,288.2 1828.6,288.6 1837.6,289.3 1846.6,290.1 1855.5,291.0 1864.5,292.2 1873.5,293.5 1882.4,295.0 1891.3,296.6 1900.2,298.5 1909.0,300.5 1917.8,302.7 1926.5,305.1 1935.1,307.7 1943.7,310.5 1952.2,313.4 1960.7,316.6 1969.0,319.9 1977.2,323.4 1985.4,327.1 1993.4,331.0 2001.3,335.1 2009.1,339.3 2016.8,343.8 2024.3,348.4 2031.6,353.3 2038.9,358.3 2045.9,363.6 2052.9,369.0 2059.7,374.6 2066.3,380.4 2072.8,386.3 2079.2,392.4 2085.5,398.7 2091.7,405.0 2097.7,411.6 2103.7,418.2 2109.5,424.9 2115.3,431.8 2120.9,438.7 2126.5,445.8 2131.9,453.0 2137.3,460.3 2142.5,467.6 2147.7,475.1 2152.7,482.6 2157.7,490.2 2162.6,497.8 2167.4,505.5 2172.2,513.2 2176.9,521.0 2181.5,528.8 2186.0,536.7 2190.5,544.5 2194.8,552.4 2199.2,560.3 2203.4,568.3 2207.6,576.2 2211.7,584.2 2215.8,592.3 2219.8,600.3 2223.7,608.4 2227.6,616.5 2231.3,624.6 2235.1,632.8 2238.7,640.9 2242.3,649.1 2245.9,657.3 2249.4,665.6 2252.8,673.9 2256.1,682.1 2259.4,690.5 2262.7,698.8 2265.9,707.2 2269.0,715.5 2272.1,723.9 2275.1,732.4 2278.0,740.8 2280.9,749.3 2283.8,757.7 2286.5,766.2 2289.3,774.8 2292.0,783.3 2294.6,791.9 2297.2,800.5 2299.7,809.1 2302.2,817.7 2304.6,826.3 2306.9,834.9 2309.3,843.6 2311.5,852.3 2313.8,861.0 2315.9,869.7 2318.0,878.4 2320.1,887.2 2322.1,895.9 2324.1,904.7 2326.0,913.5 2327.9,922.3 2329.7,931.1 2331.5,939.9 2333.3,948.8 2334.9,957.6 2336.6,966.4 2338.2,975.3 2339.7,984.2 2341.2,993.1 2342.7,1002.0 2344.1,1010.9 2345.5,1019.8 2346.8,1028.7 2348.1,1037.6 2349.3,1046.5 2350.5,1055.5 2351.6,1064.4 2352.7,1073.4 2353.8,1082.3 2354.8,1091.3 2355.8,1100.3 2356.7,1109.2 2357.6,1118.2 2358.4,1127.2 2359.3,1136.1 2360.0,1145.1 2360.8,1154.1 2361.4,1163.1 2362.1,1172.1 2362.7,1181.0 2363.3,1190.0 2363.8,1199.0 2364.3,1208.0 2364.7,1217.0 2365.1,1226.0 2365.5,1234.9 2365.8,1243.9 2366.1,1252.9 2366.4,1261.8 2366.6,1270.8 2366.8,1279.8 2367.0,1288.7 2367.1,1297.7 2367.2,1306.6 2367.2,1315.6 2367.2,1324.5 2367.2,1333.4 2367.1,1342.4 2367.0,1351.3 2366.8,1360.2 2366.6,1369.2 2366.4,1378.1 2366.1,1387.0 2365.8,1396.0 2365.4,1404.9 2365.0,1413.9 2364.5,1422.9 2364.0,1431.8 2363.5,1440.8 2362.9,1449.8 2362.3,1458.8 2361.7,1467.9 2361.0,1476.9 2360.2,1486.0 2359.5,1495.1 2358.6,1504.2 2357.7,1513.3 2356.8,1522.4 2355.8,1531.6 2354.8,1540.3 2354.2,1548.3 2324.9,1566.0 2307.6,1569.0 2289.9,1571.7 2272.4,1574.2 2254.9,1576.6 2237.4,1579.0 2219.8,1581.3 2201.9,1583.6 2183.8,1585.9 2165.3,1588.3 2146.4,1590.7 2126.9,1593.2 2106.8,1595.8 2089.1,1598.0 2072.5,1600.1 2055.5,1602.3 2038.1,1604.6 2020.5,1606.8 2002.6,1609.1 1984.4,1611.5 1966.1,1613.8 1947.7,1616.2 1929.1,1618.5 1910.5,1620.9 1891.9,1623.2 1873.3,1625.5 1854.8,1627.7 1836.4,1629.9 1818.1,1632.0 1800.0,1634.0 1781.6,1636.1 1762.7,1638.1 1743.3,1640.2 1723.6,1642.2 1703.7,1644.3 1683.7,1646.3 1663.7,1648.3 1644.0,1650.2 1624.6,1652.1 1605.6,1653.9 1587.2,1655.7 1569.5,1657.4 1552.6,1658.9 1536.7,1660.4 1521.9,1661.7 1508.3,1662.9 1488.2,1664.6 1460.9,1666.9 1442.4,1668.1 1428.7,1668.6 1415.9,1668.7 1400.0,1668.6 1384.1,1668.6 1371.3,1668.5 1357.6,1667.9 1339.1,1666.7 1311.8,1664.6 1291.7,1663.0 1278.1,1661.8 1263.3,1660.6 1247.4,1659.2 1230.5,1657.8 1212.8,1656.2 1194.4,1654.6 1175.4,1652.9 1156.0,1651.1 1136.3,1649.3 1116.3,1647.5 1096.3,1645.7 1076.4,1643.8 1056.7,1642.0 1037.3,1640.2 1018.4,1638.4 1000.0,1636.6 981.9,1634.9 963.6,1633.2 945.2,1631.4 926.6,1629.6 908.0,1627.8 889.4,1626.0 870.8,1624.1 852.2,1622.3 833.8,1620.4 815.4,1618.6 797.3,1616.8 779.4,1614.9 761.8,1613.1 744.4,1611.3 727.5,1609.6 710.9,1607.8 693.2,1605.9 673.2,1603.7 653.8,1601.6 634.9,1599.4 616.6,1597.3 598.6,1595.2 580.8,1593.0 563.3,1590.9 546.0,1588.7 528.6,1586.5 511.2,1584.2 493.7,1581.6 476.6,1578.9 449.4,1558.0 447.9,1550.0 445.9,1541.4 443.9,1532.5 442.1,1523.6 440.4,1514.8 438.7,1505.9 437.2,1497.0 435.8,1488.1 434.5,1479.2 433.3,1470.3 432.1,1461.4 431.1,1452.5 430.1,1443.5 429.1,1434.6 428.3,1425.7 427.5,1416.8 426.7,1407.8 426.1,1398.9 425.5,1390.0 424.9,1381.0 424.5,1372.0 424.0,1363.1 423.7,1354.1 423.3,1345.1 423.1,1336.2 422.8,1327.2 422.6,1318.2 422.4,1309.2 422.3,1300.2 422.2,1291.2 422.1,1282.2 422.0,1273.2 422.0,1264.2 422.0,1255.2 422.0,1246.2 422.0,1237.2 422.1,1228.2 422.2,1219.2 422.4,1210.1 422.5,1201.1 422.7,1192.1 423.0,1183.1 423.2,1174.1 423.6,1165.1 423.9,1156.1 424.3,1147.1 424.7,1138.1 425.1,1129.1 425.6,1120.1 426.1,1111.1 426.7,1102.2 427.3,1093.2 427.9,1084.2 428.6,1075.2 429.3,1066.3 430.0,1057.3 430.8,1048.3 431.7,1039.4 432.6,1030.4 433.5,1021.5 434.4,1012.6 435.5,1003.6 436.5,994.7 437.6,985.8 438.8,976.9 439.9,968.0 441.2,959.1 442.5,950.2 443.8,941.3 445.2,932.4 446.6,923.6 448.1,914.7 449.6,905.9 451.2,897.0 452.9,888.2 454.6,879.4 456.3,870.6 458.1,861.8 459.9,853.0 461.8,844.2 463.8,835.5 465.8,826.7 467.9,818.0 470.0,809.3 472.2,800.6 474.4,791.9 476.7,783.2 479.0,774.6 481.4,765.9 483.9,757.3 486.4,748.7 489.0,740.1 491.6,731.6 494.3,723.0 497.1,714.5 499.9,706.0 502.8,697.5 505.8,689.0 508.8,680.5 511.8,672.1 515.0,663.7 518.2,655.3 521.4,647.0 524.8,638.6 528.2,630.3 531.6,622.0 535.1,613.8 538.7,605.5 542.4,597.3 546.1,589.1 549.9,581.0 553.8,572.8 557.7,564.7 561.7,556.6 565.8,548.6 569.9,540.6 574.1,532.6 578.4,524.6 582.8,516.7 587.2,508.8 591.7,500.9 596.3,493.1 600.9,485.4 605.7,477.7 610.6,470.1 615.5,462.6 620.6,455.2 625.8,447.9 631.0,440.6 636.4,433.5 642.0,426.5 647.6,419.7 653.4,412.9 659.3,406.3 665.3,399.9 671.5,393.6 677.9,387.4 684.4,381.4 691.0,375.6 697.9,370.0 704.8,364.6 712.0,359.3 719.3,354.3 726.7,349.4 734.2,344.7 741.9,340.2 749.7,335.8 757.7,331.7 765.7,327.8 773.9,324.0 782.1,320.5 790.4,317.2 798.9,314.0 807.4,311.1 815.9,308.3 824.6,305.8 833.2,303.5 842.0,301.3 850.8,299.4 859.6,297.7 868.5,296.2 877.3,294.9 886.2,293.8 895.2,292.9 904.1,292.2 913.1,291.6 922.0,291.2 931.0,290.8 940.0,290.5 949.0,290.2 958.0,290.0 967.1,289.7 976.1,289.3 985.1,288.9 994.0,288.4 1001.6,288.0 1006.3,287.9 1011.1,287.8 1015.8,287.7 1020.5,287.6 1025.3,287.5 1030.0,287.4 1000.0,120.0 60.0,120.0 60.0,1790.0 2800.0,1790.0 2800.0,120.0 1790.0,120.0Z" fill="#942a10"/></g>
  <path d="M1790.0,287.2L1795.9,287.7 1801.8,288.2 1807.8,288.8 1813.7,289.5 1819.6,290.2 1825.5,291.0 1831.5,291.8 1837.4,292.7 1843.3,293.7 1849.2,294.7 1855.0,295.7 1860.9,296.9 1866.8,298.1 1872.6,299.4 1878.4,300.7 1884.2,302.1 1890.0,303.5 1895.7,305.1 1901.5,306.7 1907.2,308.3 1912.9,310.0 1918.5,311.8 1924.1,313.7 1929.7,315.6 1935.2,317.6 1940.8,319.7 1946.2,321.8 1951.7,324.0 1957.0,326.2 1962.4,328.6 1967.7,331.0 1972.9,333.5 1978.1,336.0 1983.3,338.6 1988.4,341.3 1993.4,344.1 1998.4,346.9 2003.3,349.8 2008.1,352.8 2012.9,355.9 2017.7,359.0 2022.3,362.2 2026.9,365.5 2031.5,368.8 2035.9,372.2 2040.4,375.8 2044.7,379.3 2049.0,383.0 2053.3,386.7 2057.5,390.5 2061.6,394.4 2065.7,398.3 2069.8,402.3 2073.7,406.4 2077.7,410.5 2081.6,414.7 2085.4,418.9 2089.2,423.2 2093.0,427.6 2096.7,432.0 2100.4,436.5 2104.0,441.0 2107.6,445.6 2111.2,450.2 2114.7,454.9 2118.2,459.6 2121.6,464.4 2125.0,469.2 2128.3,474.0 2131.7,478.9 2135.0,483.8 2138.2,488.7 2141.4,493.7 2144.6,498.7 2147.8,503.7 2150.9,508.8 2154.0,513.8 2157.1,518.9 2160.1,524.1 2163.1,529.2 2166.1,534.4 2169.0,539.5 2172.0,544.7 2174.8,549.9 2177.7,555.1 2180.5,560.3 2183.3,565.5 2186.1,570.7 2188.9,576.0 2191.6,581.2 2194.3,586.5 2196.9,591.8 2199.6,597.1 2202.2,602.4 2204.8,607.7 2207.3,613.0 2209.8,618.3 2212.3,623.7 2214.8,629.0 2217.2,634.4 2219.6,639.7 2222.0,645.1 2224.4,650.5 2226.7,655.9 2229.0,661.3 2231.3,666.8 2233.6,672.2 2235.8,677.6 2238.0,683.1 2240.2,688.5 2242.3,694.0 2244.5,699.5 2246.6,705.0 2248.7,710.5 2250.7,716.0 2252.7,721.5 2254.7,727.1 2256.7,732.6 2258.7,738.2 2260.6,743.7 2262.5,749.3 2264.4,754.9 2266.3,760.4 2268.1,766.0 2269.9,771.6 2271.7,777.3 2273.5,782.9 2275.2,788.5 2276.9,794.1 2278.6,799.8 2280.3,805.5 2282.0,811.1 2283.6,816.8 2285.2,822.5 2286.8,828.2 2288.4,833.9 2289.9,839.6 2291.4,845.3 2292.9,851.0 2294.4,856.7 2295.9,862.4 2297.3,868.2 2298.7,873.9 2300.1,879.7 2301.5,885.5 2302.9,891.2 2304.2,897.0 2305.5,902.8 2306.8,908.6 2308.0,914.3 2309.3,920.1 2310.5,925.9 2311.7,931.8 2312.9,937.6 2314.1,943.4 2315.2,949.2 2316.3,955.0 2317.4,960.9 2318.5,966.7 2319.6,972.6 2320.6,978.4 2321.6,984.3 2322.6,990.1 2323.6,996.0 2324.6,1001.9 2325.9,1007.7 2327.3,1013.5 2328.8,1019.3 2330.1,1025.1 2331.5,1030.9 2332.9,1036.7 2334.2,1042.6 2335.6,1048.4 2336.9,1054.3 2338.2,1060.1 2339.4,1066.0 2340.7,1071.8 2341.9,1077.7 2343.1,1083.6 2344.3,1089.4 2345.5,1095.3 2346.7,1101.2 2347.8,1107.1 2348.9,1113.0 2350.0,1118.9 2351.1,1124.8 2352.2,1130.7 2353.3,1136.7 2354.3,1142.6 2355.3,1148.5 2356.3,1154.4 2357.3,1160.4 2358.3,1166.3 2359.2,1172.3 2360.2,1178.2 2361.1,1184.2 2362.0,1190.1 2362.9,1196.1 2363.7,1202.0 2364.6,1208.0 2365.4,1213.9 2366.2,1219.9 2367.0,1225.9 2367.8,1231.8 2368.5,1237.8" fill="none" stroke="#7a1a0c" stroke-width="1.6"/>
  <path d="M419.2,1288.2L419.6,1282.2 420.1,1276.2 420.6,1270.2 421.1,1264.2 421.6,1258.2 422.2,1252.2 422.7,1246.2 423.3,1240.2 423.9,1234.2 424.4,1228.2 425.0,1222.2 425.6,1216.2 426.3,1210.2 426.9,1204.2 427.6,1198.2 428.2,1192.3 428.9,1186.3 429.6,1180.3 430.3,1174.3 431.0,1168.4 431.8,1162.4 432.5,1156.5 433.3,1150.5 434.1,1144.6 434.9,1138.6 435.7,1132.7 436.5,1126.7 437.4,1120.8 438.2,1114.9 439.1,1108.9 440.0,1103.0 440.9,1097.1 441.9,1091.2 442.8,1085.3 443.8,1079.4 444.8,1073.5 445.7,1067.6 446.8,1061.7 447.8,1055.8 448.7,1050.0 449.2,1044.0 449.8,1038.1 450.4,1032.2 451.0,1026.3 451.6,1020.4 452.2,1014.5 452.9,1008.6 453.6,1002.7 454.3,996.8 455.0,991.0 455.7,985.1 456.5,979.2 457.2,973.3 458.0,967.4 458.9,961.6 459.7,955.7 460.6,949.9 461.4,944.0 462.3,938.2 463.3,932.3 464.2,926.5 465.2,920.6 466.2,914.8 467.2,909.0 468.2,903.1 469.3,897.3 470.3,891.5 471.4,885.7 472.6,879.9 473.7,874.1 474.9,868.3 476.1,862.5 477.3,856.7 478.5,850.9 479.8,845.2 481.1,839.4 482.4,833.6 483.7,827.9 485.1,822.1 486.5,816.4 487.9,810.7 489.3,804.9 490.7,799.2 492.2,793.5 493.7,787.8 495.3,782.1 496.8,776.4 498.4,770.7 500.0,765.0 501.6,759.4 503.3,753.7 504.9,748.1 506.7,742.4 508.4,736.8 510.1,731.2 511.9,725.5 513.7,719.9 515.6,714.3 517.4,708.7 519.3,703.1 521.2,697.6 523.2,692.0 525.1,686.5 527.1,680.9 529.1,675.4 531.2,669.8 533.3,664.3 535.4,658.8 537.5,653.3 539.7,647.8 541.9,642.4 544.1,636.9 546.3,631.4 548.6,626.0 550.9,620.6 553.2,615.1 555.6,609.7 557.9,604.3 560.4,598.9 562.8,593.6 565.3,588.2 567.8,582.8 570.3,577.5 572.8,572.2 575.4,566.8 578.1,561.5 580.7,556.2 583.4,550.9 586.1,545.7 588.8,540.4 591.6,535.2 594.4,529.9 597.2,524.7 600.0,519.5 602.9,514.3 605.8,509.2 608.8,504.1 611.8,499.0 614.8,493.9 617.8,488.9 620.9,483.9 624.0,478.9 627.2,474.0 630.4,469.1 633.6,464.3 636.9,459.5 640.2,454.7 643.6,450.0 647.0,445.4 650.5,440.8 654.0,436.3 657.5,431.8 661.2,427.3 664.8,423.0 668.5,418.7 672.3,414.4 676.1,410.3 680.0,406.1 683.9,402.1 687.9,398.1 692.0,394.2 696.1,390.4 700.3,386.6 704.6,383.0 708.9,379.3 713.3,375.8 717.7,372.3 722.3,368.9 726.9,365.6 731.5,362.4 736.3,359.2 741.1,356.1 745.9,353.0 750.8,350.1 755.8,347.2 760.8,344.4 765.8,341.6 771.0,339.0 776.1,336.4 781.3,333.9 786.6,331.5 791.9,329.1 797.2,326.8 802.6,324.6 808.0,322.5 813.5,320.5 819.0,318.5 824.5,316.6 830.1,314.8 835.6,313.1 841.2,311.4 846.9,309.9 852.6,308.4 858.2,307.0 863.9,305.7 869.7,304.4 875.4,303.3 881.2,302.2 887.0,301.2 892.8,300.3 898.6,299.5 904.5,298.7 910.4,297.9 916.3,297.2 922.2,296.6 928.2,295.9 934.1,295.3 940.1,294.7 946.1,294.1 952.1,293.5 958.1,292.9 964.1,292.2 970.1,291.5 976.1,290.8 982.1,290.1 988.1,289.2 994.0,288.4 1000.0,287.4" fill="none" stroke="#7a1a0c" stroke-width="1.6"/>
  <path d="M462.0,831.7L472.1,831.8 482.0,831.8 491.6,831.9 500.9,832.0 510.1,832.1 519.2,832.2 528.1,832.2 536.9,832.3 545.7,832.4 554.4,832.5 563.1,832.5 571.8,832.6 580.6,832.7 589.4,832.8 598.4,832.9 607.5,832.9 616.7,833.0 626.2,833.1 635.9,833.2 645.8,833.2 656.0,833.3 666.5,833.4 677.4,833.5 688.6,833.5 700.2,833.6 712.3,833.7 724.8,833.7 737.8,833.8 751.3,833.9 765.4,833.9 780.0,834.0 787.8,834.0 795.8,834.1 804.1,834.1 812.5,834.1 821.1,834.2 829.9,834.2 838.9,834.3 848.0,834.3 857.3,834.3 866.7,834.4 876.3,834.4 886.1,834.5 895.9,834.5 905.9,834.6 916.0,834.6 926.3,834.6 936.6,834.7 947.1,834.7 957.6,834.8 968.2,834.8 978.9,834.9 989.7,834.9 1000.5,834.9 1011.4,835.0 1022.4,835.0 1033.4,835.1 1044.4,835.1 1055.5,835.2 1066.6,835.2 1077.7,835.2 1088.9,835.3 1100.0,835.3 1111.1,835.3 1122.3,835.4 1133.4,835.4 1144.5,835.4 1155.6,835.5 1166.6,835.5 1177.6,835.5 1188.6,835.6 1199.5,835.6 1210.3,835.6 1221.1,835.6 1231.8,835.6 1242.4,835.7 1252.9,835.7 1263.3,835.7 1273.7,835.7 1283.9,835.7 1294.0,835.7 1304.0,835.7 1313.8,835.7 1323.6,835.7 1333.1,835.7 1342.6,835.7 1351.9,835.7 1361.0,835.7 1369.9,835.6 1378.7,835.6 1387.3,835.6 1399.6,835.6 1411.8,835.5 1423.8,835.5 1435.6,835.4 1447.2,835.3 1458.6,835.3 1469.9,835.2 1481.1,835.1 1492.1,835.0 1502.9,834.9 1513.7,834.9 1524.2,834.8 1534.7,834.7 1545.0,834.5 1555.3,834.4 1565.4,834.3 1575.4,834.2 1585.3,834.1 1595.1,834.0 1604.9,833.9 1614.6,833.7 1624.1,833.6 1633.7,833.5 1643.1,833.3 1652.5,833.2 1661.9,833.1 1671.2,832.9 1680.5,832.8 1689.7,832.7 1698.9,832.5 1708.1,832.4 1717.3,832.2 1726.4,832.1 1735.6,832.0 1744.7,831.8 1753.9,831.7 1763.1,831.5 1772.3,831.4 1781.5,831.3 1790.7,831.1 1800.0,831.0 1810.9,830.8 1821.9,830.7 1832.9,830.5 1843.9,830.3 1855.0,830.2 1866.1,830.0 1877.1,829.8 1888.2,829.6 1899.2,829.4 1910.2,829.2 1921.2,829.0 1932.1,828.8 1943.0,828.6 1953.8,828.4 1964.6,828.3 1975.2,828.1 1985.8,827.9 1996.3,827.7 2006.6,827.5 2016.9,827.3 2027.0,827.1 2037.0,826.9 2046.8,826.7 2056.5,826.5 2066.0,826.3 2075.3,826.2 2084.5,826.0 2093.4,825.8 2102.2,825.7 2110.7,825.5 2119.1,825.3 2127.2,825.2 2135.0,825.1 2142.6,824.9 2150.0,824.8 2166.0,824.5 2180.5,824.3 2193.6,824.1 2205.5,823.9 2216.4,823.7 2226.4,823.6 2235.7,823.5 2244.5,823.3 2252.9,823.2 2261.2,823.1 2269.5,823.0 2277.9,822.9 2286.7,822.8 2296.0,822.6 2306.0,822.5" fill="none" stroke="#8a3010" stroke-width="2"/>
  <path d="M455.0,1577.0L464.9,1576.9 474.3,1576.9 483.2,1576.8 491.7,1576.8 499.9,1576.7 507.9,1576.7 515.8,1576.6 523.5,1576.6 531.3,1576.5 539.1,1576.5 547.1,1576.5 555.3,1576.4 563.8,1576.4 572.8,1576.3 582.1,1576.2 592.0,1576.2 602.6,1576.1 613.8,1576.0 625.8,1576.0 638.6,1575.9 652.4,1575.8 667.2,1575.7 683.0,1575.5 700.0,1575.4 707.2,1575.3 714.7,1575.3 722.5,1575.2 730.5,1575.2 738.8,1575.1 747.4,1575.0 756.2,1574.9 765.3,1574.9 774.6,1574.8 784.1,1574.7 793.8,1574.6 803.7,1574.6 813.8,1574.5 824.0,1574.4 834.4,1574.3 845.0,1574.2 855.7,1574.1 866.5,1574.0 877.5,1573.9 888.5,1573.8 899.7,1573.7 910.9,1573.6 922.2,1573.5 933.6,1573.5 945.1,1573.4 956.6,1573.3 968.1,1573.2 979.7,1573.1 991.2,1573.0 1002.8,1572.9 1014.4,1572.8 1025.9,1572.7 1037.5,1572.6 1048.9,1572.5 1060.4,1572.4 1071.8,1572.3 1083.1,1572.2 1094.3,1572.1 1105.4,1572.0 1116.5,1571.9 1127.4,1571.8 1138.2,1571.7 1148.9,1571.6 1159.4,1571.5 1169.8,1571.4 1180.0,1571.4 1190.1,1571.3 1199.9,1571.2 1209.6,1571.1 1219.0,1571.0 1228.3,1571.0 1237.3,1570.9 1246.1,1570.8 1254.6,1570.8 1262.9,1570.7 1270.9,1570.6 1278.6,1570.6 1286.0,1570.5 1293.2,1570.5 1300.0,1570.4 1318.5,1570.3 1334.4,1570.1 1347.8,1570.0 1359.2,1570.0 1368.8,1569.9 1376.8,1569.9 1383.7,1569.8 1389.6,1569.8 1395.0,1569.8 1400.0,1569.7 1405.0,1569.7 1410.4,1569.7 1416.3,1569.7 1423.2,1569.7 1431.2,1569.7 1440.8,1569.6 1452.2,1569.6 1465.6,1569.5 1481.5,1569.5 1500.0,1569.4 1506.8,1569.4 1514.0,1569.3 1521.4,1569.3 1529.1,1569.3 1537.1,1569.2 1545.4,1569.2 1553.9,1569.2 1562.7,1569.1 1571.7,1569.1 1581.0,1569.1 1590.4,1569.0 1600.1,1569.0 1609.9,1569.0 1620.0,1568.9 1630.2,1568.9 1640.6,1568.8 1651.1,1568.8 1661.8,1568.8 1672.6,1568.7 1683.5,1568.7 1694.6,1568.6 1705.7,1568.6 1716.9,1568.6 1728.2,1568.5 1739.6,1568.5 1751.1,1568.4 1762.5,1568.4 1774.1,1568.3 1785.6,1568.3 1797.2,1568.3 1808.8,1568.2 1820.3,1568.2 1831.9,1568.1 1843.4,1568.1 1854.9,1568.0 1866.4,1568.0 1877.8,1568.0 1889.1,1567.9 1900.3,1567.9 1911.5,1567.8 1922.5,1567.8 1933.5,1567.7 1944.3,1567.7 1955.0,1567.6 1965.6,1567.6 1976.0,1567.6 1986.2,1567.5 1996.3,1567.5 2006.2,1567.4 2015.9,1567.4 2025.4,1567.4 2034.7,1567.3 2043.8,1567.3 2052.6,1567.2 2061.2,1567.2 2069.5,1567.2 2077.5,1567.1 2085.3,1567.1 2092.8,1567.0 2100.0,1567.0 2117.0,1566.9 2132.8,1566.8 2147.6,1566.7 2161.4,1566.6 2174.2,1566.6 2186.2,1566.5 2197.4,1566.4 2208.0,1566.3 2217.9,1566.2 2227.2,1566.1 2236.2,1566.1 2244.7,1566.0 2252.9,1565.9 2260.9,1565.8 2268.7,1565.7 2276.5,1565.7 2284.2,1565.6 2292.1,1565.5 2300.1,1565.4 2308.3,1565.3 2316.8,1565.2 2325.7,1565.2 2335.1,1565.1 2345.0,1565.0" fill="none" stroke="#8a2418" stroke-width="2"/>
  <path d="M447.3,1559.9L446.5,1556.9 445.8,1554.0 445.0,1551.0 444.3,1548.1 443.5,1545.1 442.8,1542.1 442.1,1539.2 441.4,1536.2 440.8,1533.2 440.1,1530.3 439.5,1527.3 438.8,1524.3 438.2,1521.4 437.6,1518.4 437.0,1515.4 436.4,1512.5 435.9,1509.5 435.3,1506.5 434.8,1503.5 434.2,1500.6 433.7,1497.6 433.2,1494.6 432.7,1491.7 432.2,1488.7 431.7,1485.7 431.3,1482.7 430.8,1479.8 430.4,1476.8 429.9,1473.8 429.5,1470.8 429.1,1467.8 428.7,1464.9 428.3,1461.9 427.9,1458.9 427.5,1455.9 427.2,1452.9 426.8,1450.0 426.5,1447.0 426.1,1444.0 425.8,1441.0 425.5,1438.0 425.2,1435.0 424.9,1432.1 424.6,1429.1 424.3,1426.1 424.0,1423.1 423.7,1420.1 423.5,1417.1 423.2,1414.1 423.0,1411.1 422.8,1408.2 422.5,1405.2 422.3,1402.2 422.1,1399.2 421.9,1396.2 421.7,1393.2 421.5,1390.2 421.3,1387.2 421.1,1384.2 421.0,1381.2 420.8,1378.2 420.6,1375.2 420.5,1372.2 420.7,1372.2 421.1,1375.2 421.5,1378.2 421.9,1381.2 422.3,1384.2 422.7,1387.1 423.2,1390.1 423.6,1393.1 424.0,1396.0 424.5,1399.0 424.9,1402.0 425.4,1404.9 425.9,1407.9 426.4,1410.9 426.9,1413.8 427.4,1416.8 427.9,1419.7 428.4,1422.7 428.9,1425.6 429.4,1428.6 429.9,1431.5 430.5,1434.5 431.0,1437.4 431.6,1440.4 432.2,1443.3 432.8,1446.3 433.3,1449.2 433.9,1452.1 434.5,1455.1 435.2,1458.0 435.8,1460.9 436.4,1463.8 437.1,1466.7 437.7,1469.7 438.4,1472.6 439.1,1475.5 439.7,1478.4 440.4,1481.3 441.1,1484.2 441.8,1487.1 442.6,1490.0 443.3,1492.9 444.1,1495.8 444.8,1498.7 445.6,1501.6 446.4,1504.5 447.1,1507.3 448.0,1510.2 448.8,1513.1 449.6,1516.0 450.4,1518.8 451.3,1521.7 452.1,1524.6 453.0,1527.4 453.9,1530.3 454.8,1533.1 455.7,1536.0 456.4,1538.9 457.1,1541.8 457.9,1544.7 458.6,1547.6 459.3,1550.5 460.1,1553.4 460.8,1556.3Z" fill="#c23a1a" filter="url(#bl2)"/>
  <path d="M2368.7,1420.1L2368.5,1423.1 2368.4,1426.1 2368.2,1429.1 2368.0,1432.1 2367.9,1435.1 2367.7,1438.1 2367.5,1441.1 2367.3,1444.1 2367.1,1447.1 2366.9,1450.1 2366.6,1453.1 2366.4,1456.1 2366.2,1459.1 2366.0,1462.1 2365.7,1465.2 2365.5,1468.2 2365.2,1471.2 2365.0,1474.2 2364.7,1477.2 2364.5,1480.3 2364.2,1483.3 2363.9,1486.3 2363.6,1489.3 2363.3,1492.4 2363.0,1495.4 2362.7,1498.4 2362.4,1501.5 2362.1,1504.5 2361.8,1507.6 2361.5,1510.6 2361.1,1513.7 2360.8,1516.7 2360.4,1519.8 2360.1,1522.8 2359.7,1525.9 2359.4,1528.9 2359.0,1532.0 2358.6,1535.1 2358.2,1538.1 2357.8,1541.2 2357.3,1544.2 2356.9,1547.2 2356.3,1550.3 2348.5,1548.9 2349.0,1545.9 2349.5,1543.0 2350.1,1540.1 2350.7,1537.1 2351.3,1534.1 2351.9,1531.1 2352.4,1528.1 2353.0,1525.1 2353.5,1522.1 2354.1,1519.0 2354.6,1516.0 2355.2,1513.0 2355.7,1510.0 2356.2,1507.0 2356.7,1504.0 2357.2,1501.0 2357.7,1497.9 2358.2,1494.9 2358.7,1491.9 2359.2,1488.9 2359.7,1485.9 2360.1,1482.9 2360.6,1479.9 2361.1,1476.9 2361.5,1473.9 2362.0,1470.9 2362.4,1467.9 2362.8,1464.9 2363.3,1461.9 2363.7,1458.9 2364.1,1455.9 2364.5,1453.0 2364.9,1450.0 2365.3,1447.0 2365.7,1444.0 2366.1,1441.0 2366.5,1438.0 2366.9,1435.0 2367.3,1432.0 2367.6,1429.0 2368.0,1426.0 2368.3,1423.1 2368.7,1420.1Z" fill="#c23a1a" filter="url(#bl2)"/>
  <path d="M380.0,1560.0L463.7,1579.5 463.7,1579.5 469.7,1580.2 475.7,1580.9 481.7,1581.6 487.6,1582.3 493.5,1583.0 499.4,1583.7 505.3,1584.4 511.1,1585.1 516.9,1585.8 522.7,1586.5 528.5,1587.2 534.3,1587.9 540.1,1588.6 545.9,1589.3 551.7,1590.0 557.5,1590.7 563.3,1591.4 569.1,1592.0 574.9,1592.7 580.8,1593.4 586.7,1594.1 592.6,1594.8 598.5,1595.5 604.5,1596.2 610.5,1596.9 616.5,1597.6 622.6,1598.4 628.7,1599.1 634.9,1599.8 641.1,1600.5 647.4,1601.2 653.7,1601.9 660.1,1602.6 666.6,1603.4 673.1,1604.1 679.7,1604.8 686.4,1605.5 693.2,1606.3 700.0,1607.0 705.4,1607.6 710.8,1608.2 716.3,1608.7 721.8,1609.3 727.4,1609.9 733.0,1610.5 738.7,1611.1 744.4,1611.7 750.1,1612.3 755.9,1612.9 761.7,1613.5 767.6,1614.1 773.5,1614.7 779.4,1615.3 785.3,1615.9 791.3,1616.5 797.3,1617.1 803.3,1617.7 809.3,1618.4 815.4,1619.0 821.5,1619.6 827.6,1620.2 833.7,1620.8 839.9,1621.4 846.0,1622.0 852.2,1622.6 858.4,1623.3 864.5,1623.9 870.7,1624.5 876.9,1625.1 883.1,1625.7 889.4,1626.3 895.6,1626.9 901.8,1627.5 908.0,1628.1 914.2,1628.7 920.4,1629.4 926.6,1630.0 932.8,1630.6 939.0,1631.2 945.2,1631.7 951.3,1632.3 957.5,1632.9 963.6,1633.5 969.7,1634.1 975.8,1634.7 981.9,1635.3 988.0,1635.9 994.0,1636.4 1000.0,1637.0 1006.0,1637.6 1012.2,1638.2 1018.3,1638.7 1024.6,1639.3 1030.9,1639.9 1037.3,1640.5 1043.7,1641.1 1050.2,1641.7 1056.7,1642.3 1063.2,1642.9 1069.8,1643.6 1076.4,1644.2 1083.0,1644.8 1089.6,1645.4 1096.3,1646.0 1103.0,1646.6 1109.6,1647.2 1116.3,1647.9 1123.0,1648.5 1129.6,1649.1 1136.2,1649.7 1142.8,1650.3 1149.4,1650.9 1156.0,1651.5 1162.5,1652.1 1169.0,1652.6 1175.4,1653.2 1181.8,1653.8 1188.1,1654.4 1194.4,1654.9 1200.6,1655.5 1206.7,1656.0 1212.8,1656.6 1218.8,1657.1 1224.7,1657.6 1230.5,1658.1 1236.2,1658.6 1241.9,1659.1 1247.4,1659.6 1252.8,1660.1 1258.1,1660.5 1263.3,1661.0 1268.4,1661.4 1273.3,1661.8 1278.1,1662.2 1282.8,1662.6 1287.3,1663.0 1291.7,1663.3 1295.9,1663.7 1300.0,1664.0 1311.7,1664.9 1322.1,1665.7 1331.1,1666.4 1339.1,1667.0 1346.0,1667.5 1352.1,1667.9 1357.6,1668.2 1362.5,1668.5 1367.0,1668.7 1371.3,1668.8 1375.5,1668.9 1379.7,1669.0 1384.1,1669.0 1388.9,1669.0 1394.1,1669.0 1400.0,1669.0 1405.9,1669.0 1411.1,1669.0 1415.9,1669.0 1420.3,1669.0 1424.5,1669.0 1428.7,1668.9 1433.0,1668.8 1437.5,1668.7 1442.4,1668.4 1447.9,1668.1 1454.0,1667.7 1460.9,1667.2 1468.9,1666.6 1477.9,1665.9 1488.3,1665.0 1500.0,1664.0 1504.1,1663.6 1508.3,1663.3 1512.7,1662.9 1517.2,1662.5 1521.9,1662.1 1526.7,1661.6 1531.6,1661.2 1536.7,1660.7 1541.9,1660.3 1547.2,1659.8 1552.6,1659.3 1558.1,1658.8 1563.8,1658.3 1569.5,1657.7 1575.3,1657.2 1581.2,1656.6 1587.2,1656.1 1593.3,1655.5 1599.4,1654.9 1605.6,1654.3 1611.9,1653.7 1618.2,1653.1 1624.6,1652.5 1631.0,1651.9 1637.5,1651.2 1644.0,1650.6 1650.6,1649.9 1657.2,1649.3 1663.8,1648.6 1670.4,1648.0 1677.0,1647.3 1683.7,1646.7 1690.4,1646.0 1697.0,1645.3 1703.7,1644.6 1710.4,1643.9 1717.0,1643.3 1723.6,1642.6 1730.2,1641.9 1736.8,1641.2 1743.3,1640.5 1749.8,1639.8 1756.3,1639.2 1762.7,1638.5 1769.1,1637.8 1775.4,1637.1 1781.7,1636.4 1787.8,1635.7 1794.0,1635.1 1800.0,1634.4 1806.0,1633.7 1812.0,1633.0 1818.1,1632.4 1824.2,1631.7 1830.3,1630.9 1836.4,1630.2 1842.5,1629.5 1848.7,1628.8 1854.8,1628.0 1861.0,1627.3 1867.2,1626.6 1873.4,1625.8 1879.6,1625.1 1885.8,1624.3 1892.0,1623.5 1898.2,1622.8 1904.4,1622.0 1910.6,1621.2 1916.8,1620.4 1923.0,1619.7 1929.2,1618.9 1935.4,1618.1 1941.6,1617.3 1947.7,1616.5 1953.9,1615.8 1960.0,1615.0 1966.2,1614.2 1972.3,1613.4 1978.4,1612.6 1984.5,1611.8 1990.5,1611.1 1996.6,1610.3 2002.6,1609.5 2008.6,1608.7 2014.6,1608.0 2020.5,1607.2 2026.4,1606.4 2032.3,1605.7 2038.2,1604.9 2044.0,1604.2 2049.8,1603.4 2055.5,1602.7 2061.2,1601.9 2066.9,1601.2 2072.5,1600.5 2078.1,1599.8 2083.6,1599.1 2089.1,1598.4 2094.6,1597.7 2100.0,1597.0 2106.9,1596.1 2113.6,1595.3 2120.3,1594.4 2127.0,1593.6 2133.5,1592.8 2140.0,1591.9 2146.4,1591.1 2152.8,1590.3 2159.1,1589.5 2165.4,1588.7 2171.6,1587.9 2177.8,1587.1 2183.9,1586.3 2190.0,1585.5 2196.0,1584.8 2202.0,1584.0 2208.0,1583.2 2213.9,1582.5 2219.8,1581.7 2225.7,1580.9 2231.6,1580.2 2237.5,1579.4 2243.3,1578.7 2249.2,1577.9 2255.0,1577.2 2260.8,1576.4 2266.7,1575.7 2272.5,1574.9 2278.3,1574.2 2284.2,1573.4 2290.1,1572.6 2295.9,1571.9 2301.8,1571.1 2307.8,1570.4 2313.7,1569.6 2319.7,1568.8 2325.7,1568.1 2331.7,1567.3 2337.8,1566.5 2337.8,1566.5 2420.0,1540.0 2420.0,1760.0 380.0,1760.0Z" fill="#f25c38"/>
  <g clip-path="url(#railclip)">
   <path d="M463.7,1579.5L469.7,1580.2 475.7,1580.9 481.7,1581.6 487.6,1582.3 493.5,1583.0 499.4,1583.7 505.3,1584.4 511.1,1585.1 516.9,1585.8 522.7,1586.5 528.5,1587.2 534.3,1587.9 540.1,1588.6 545.9,1589.3 551.7,1590.0 557.5,1590.7 563.3,1591.4 569.1,1592.0 574.9,1592.7 580.8,1593.4 586.7,1594.1 592.6,1594.8 598.5,1595.5 604.5,1596.2 610.5,1596.9 616.5,1597.6 622.6,1598.4 628.7,1599.1 634.9,1599.8 641.1,1600.5 647.4,1601.2 653.7,1601.9 660.1,1602.6 666.6,1603.4 673.1,1604.1 679.7,1604.8 686.4,1605.5 693.2,1606.3 700.0,1607.0 705.4,1607.6 710.8,1608.2 716.3,1608.7 721.8,1609.3 727.4,1609.9 733.0,1610.5 738.7,1611.1 744.4,1611.7 750.1,1612.3 755.9,1612.9 761.7,1613.5 767.6,1614.1 773.5,1614.7 779.4,1615.3 785.3,1615.9 791.3,1616.5 797.3,1617.1 803.3,1617.7 809.3,1618.4 815.4,1619.0 821.5,1619.6 827.6,1620.2 833.7,1620.8 839.9,1621.4 846.0,1622.0 852.2,1622.6 858.4,1623.3 864.5,1623.9 870.7,1624.5 876.9,1625.1 883.1,1625.7 889.4,1626.3 895.6,1626.9 901.8,1627.5 908.0,1628.1 914.2,1628.7 920.4,1629.4 926.6,1630.0 932.8,1630.6 939.0,1631.2 945.2,1631.7 951.3,1632.3 957.5,1632.9 963.6,1633.5 969.7,1634.1 975.8,1634.7 981.9,1635.3 988.0,1635.9 994.0,1636.4 1000.0,1637.0 1006.0,1637.6 1012.2,1638.2 1018.3,1638.7 1024.6,1639.3 1030.9,1639.9 1037.3,1640.5 1043.7,1641.1 1050.2,1641.7 1056.7,1642.3 1063.2,1642.9 1069.8,1643.6 1076.4,1644.2 1083.0,1644.8 1089.6,1645.4 1096.3,1646.0 1103.0,1646.6 1109.6,1647.2 1116.3,1647.9 1123.0,1648.5 1129.6,1649.1 1136.2,1649.7 1142.8,1650.3 1149.4,1650.9 1156.0,1651.5 1162.5,1652.1 1169.0,1652.6 1175.4,1653.2 1181.8,1653.8 1188.1,1654.4 1194.4,1654.9 1200.6,1655.5 1206.7,1656.0 1212.8,1656.6 1218.8,1657.1 1224.7,1657.6 1230.5,1658.1 1236.2,1658.6 1241.9,1659.1 1247.4,1659.6 1252.8,1660.1 1258.1,1660.5 1263.3,1661.0 1268.4,1661.4 1273.3,1661.8 1278.1,1662.2 1282.8,1662.6 1287.3,1663.0 1291.7,1663.3 1295.9,1663.7 1300.0,1664.0 1311.7,1664.9 1322.1,1665.7 1331.1,1666.4 1339.1,1667.0 1346.0,1667.5 1352.1,1667.9 1357.6,1668.2 1362.5,1668.5 1367.0,1668.7 1371.3,1668.8 1375.5,1668.9 1379.7,1669.0 1384.1,1669.0 1388.9,1669.0 1394.1,1669.0 1400.0,1669.0 1405.9,1669.0 1411.1,1669.0 1415.9,1669.0 1420.3,1669.0 1424.5,1669.0 1428.7,1668.9 1433.0,1668.8 1437.5,1668.7 1442.4,1668.4 1447.9,1668.1 1454.0,1667.7 1460.9,1667.2 1468.9,1666.6 1477.9,1665.9 1488.3,1665.0 1500.0,1664.0 1504.1,1663.6 1508.3,1663.3 1512.7,1662.9 1517.2,1662.5 1521.9,1662.1 1526.7,1661.6 1531.6,1661.2 1536.7,1660.7 1541.9,1660.3 1547.2,1659.8 1552.6,1659.3 1558.1,1658.8 1563.8,1658.3 1569.5,1657.7 1575.3,1657.2 1581.2,1656.6 1587.2,1656.1 1593.3,1655.5 1599.4,1654.9 1605.6,1654.3 1611.9,1653.7 1618.2,1653.1 1624.6,1652.5 1631.0,1651.9 1637.5,1651.2 1644.0,1650.6 1650.6,1649.9 1657.2,1649.3 1663.8,1648.6 1670.4,1648.0 1677.0,1647.3 1683.7,1646.7 1690.4,1646.0 1697.0,1645.3 1703.7,1644.6 1710.4,1643.9 1717.0,1643.3 1723.6,1642.6 1730.2,1641.9 1736.8,1641.2 1743.3,1640.5 1749.8,1639.8 1756.3,1639.2 1762.7,1638.5 1769.1,1637.8 1775.4,1637.1 1781.7,1636.4 1787.8,1635.7 1794.0,1635.1 1800.0,1634.4 1806.0,1633.7 1812.0,1633.0 1818.1,1632.4 1824.2,1631.7 1830.3,1630.9 1836.4,1630.2 1842.5,1629.5 1848.7,1628.8 1854.8,1628.0 1861.0,1627.3 1867.2,1626.6 1873.4,1625.8 1879.6,1625.1 1885.8,1624.3 1892.0,1623.5 1898.2,1622.8 1904.4,1622.0 1910.6,1621.2 1916.8,1620.4 1923.0,1619.7 1929.2,1618.9 1935.4,1618.1 1941.6,1617.3 1947.7,1616.5 1953.9,1615.8 1960.0,1615.0 1966.2,1614.2 1972.3,1613.4 1978.4,1612.6 1984.5,1611.8 1990.5,1611.1 1996.6,1610.3 2002.6,1609.5 2008.6,1608.7 2014.6,1608.0 2020.5,1607.2 2026.4,1606.4 2032.3,1605.7 2038.2,1604.9 2044.0,1604.2 2049.8,1603.4 2055.5,1602.7 2061.2,1601.9 2066.9,1601.2 2072.5,1600.5 2078.1,1599.8 2083.6,1599.1 2089.1,1598.4 2094.6,1597.7 2100.0,1597.0 2106.9,1596.1 2113.6,1595.3 2120.3,1594.4 2127.0,1593.6 2133.5,1592.8 2140.0,1591.9 2146.4,1591.1 2152.8,1590.3 2159.1,1589.5 2165.4,1588.7 2171.6,1587.9 2177.8,1587.1 2183.9,1586.3 2190.0,1585.5 2196.0,1584.8 2202.0,1584.0 2208.0,1583.2 2213.9,1582.5 2219.8,1581.7 2225.7,1580.9 2231.6,1580.2 2237.5,1579.4 2243.3,1578.7 2249.2,1577.9 2255.0,1577.2 2260.8,1576.4 2266.7,1575.7 2272.5,1574.9 2278.3,1574.2 2284.2,1573.4 2290.1,1572.6 2295.9,1571.9 2301.8,1571.1 2307.8,1570.4 2313.7,1569.6 2319.7,1568.8 2325.7,1568.1 2331.7,1567.3 2337.8,1566.5" fill="none" stroke="#8a1e0c" stroke-width="14" filter="url(#bl4)"/>
   <path d="M1790.0,287.2L1793.0,287.1 1795.9,287.0 1798.9,287.0 1801.8,287.0 1804.8,286.9 1807.8,286.9 1810.8,287.0 1813.7,287.0 1816.7,287.1 1819.7,287.2 1822.7,287.3 1825.7,287.4 1828.7,287.5 1831.7,287.7 1834.7,287.8 1837.7,288.0 1840.7,288.3 1843.7,288.5 1846.7,288.7 1849.7,289.0 1852.7,289.3 1855.7,289.6 1858.7,289.9 1861.7,290.3 1864.7,290.7 1867.7,291.1 1870.7,291.5 1873.7,291.9 1876.7,292.4 1879.7,292.8 1882.7,293.3 1885.7,293.8 1888.6,294.4 1891.6,294.9 1894.6,295.5 1897.6,296.1 1900.5,296.7 1903.5,297.3 1906.5,298.0 1909.4,298.6 1912.4,299.3 1915.3,300.0 1918.3,300.8 1921.2,301.5 1924.1,302.3 1927.0,303.1 1930.0,303.9 1932.9,304.7 1935.8,305.6 1938.7,306.5 1941.6,307.4 1944.4,308.3 1947.3,309.2 1950.2,310.2 1953.0,311.2 1955.9,312.2 1958.7,313.2 1961.5,314.2 1964.3,315.3 1967.2,316.4 1970.0,317.5 1972.7,318.6 1975.5,319.8 1978.3,321.0 1981.0,322.2 1983.8,323.4 1986.5,324.6 1989.2,325.9 1991.9,327.1 1994.6,328.4 1997.3,329.8 2000.0,331.1 2002.7,332.5 2005.3,333.9 2007.9,335.3 2010.5,336.7 2013.1,338.2 2015.7,339.6 2018.3,341.1 2020.9,342.7 2023.4,344.2 2025.9,345.8 2028.4,347.4 2030.9,349.0 2033.4,350.6 2035.9,352.3 2038.3,353.9 2040.8,355.6 2043.2,357.4 2045.6,359.1 2048.0,360.9 2050.3,362.6 2052.7,364.4 2055.0,366.3 2057.3,368.1 2059.6,370.0 2061.9,371.9 2064.2,373.8 2066.5,375.7 2068.7,377.6 2070.9,379.6 2073.1,381.6 2075.3,383.6 2077.5,385.6 2079.7,387.6 2081.9,389.7 2084.0,391.7 2086.1,393.8 2088.2,395.9 2090.3,398.0 2092.4,400.2 2094.5,402.3 2096.6,404.5 2098.6,406.7 2100.6,408.8 2102.7,411.1 2104.7,413.3 2106.7,415.5 2108.6,417.8 2110.6,420.0 2112.6,422.3 2114.5,424.6 2116.5,426.9 2118.4,429.2 2120.3,431.6 2122.2,433.9 2124.1,436.2 2125.9,438.6 2127.8,441.0 2129.6,443.4 2131.5,445.8 2133.3,448.2 2135.1,450.6 2136.9,453.0 2138.7,455.5 2140.5,457.9 2142.3,460.4 2144.0,462.9 2145.8,465.3 2147.5,467.8 2149.2,470.3 2151.0,472.8 2152.7,475.3 2154.4,477.9 2156.1,480.4 2157.7,482.9 2159.4,485.4 2161.1,488.0 2162.7,490.5 2164.4,493.1 2166.0,495.7 2167.6,498.2 2169.2,500.8 2170.8,503.4 2172.4,506.0 2174.0,508.6 2175.6,511.2 2177.2,513.8 2178.7,516.4 2180.3,519.0 2181.8,521.6 2183.4,524.2 2184.9,526.8 2186.4,529.4 2188.0,532.0 2189.5,534.7 2191.0,537.3 2192.5,539.9 2193.9,542.6 2195.4,545.2 2196.9,547.8 2198.4,550.5 2199.8,553.1 2201.3,555.8 2202.7,558.4 2204.1,561.1 2205.5,563.7 2207.0,566.4 2208.4,569.1 2209.8,571.7 2211.2,574.4 2212.5,577.1 2213.9,579.7 2215.3,582.4 2216.7,585.1 2218.0,587.8 2219.4,590.5 2220.7,593.2 2222.0,595.8 2223.4,598.5 2224.7,601.2 2226.0,603.9 2227.3,606.6 2228.6,609.4 2229.9,612.1 2231.2,614.8 2232.5,617.5 2233.7,620.2 2235.0,622.9 2236.2,625.6 2237.5,628.4 2238.7,631.1 2240.0,633.8 2241.2,636.6 2242.4,639.3 2243.6,642.0 2244.8,644.8 2246.0,647.5 2247.2,650.3 2248.4,653.0 2249.6,655.8 2250.7,658.5 2251.9,661.3 2253.1,664.0 2254.2,666.8 2255.4,669.6 2256.5,672.3 2257.6,675.1 2258.7,677.9 2259.9,680.7 2261.0,683.4 2262.1,686.2 2263.2,689.0 2264.3,691.8 2265.3,694.6 2266.4,697.4 2267.5,700.2 2268.6,702.9 2269.6,705.7 2270.7,708.5 2271.7,711.3 2272.7,714.2 2273.8,717.0 2274.8,719.8 2275.8,722.6 2276.8,725.4 2277.8,728.2 2278.8,731.0 2279.8,733.8 2280.8,736.7 2281.8,739.5 2282.8,742.3 2283.7,745.1 2284.7,748.0 2285.7,750.8 2286.6,753.6 2287.6,756.5 2288.5,759.3 2289.4,762.2 2290.4,765.0 2291.3,767.9 2292.2,770.7 2293.1,773.6 2294.0,776.4 2294.9,779.3 2295.8,782.1 2296.7,785.0 2297.5,787.8 2298.4,790.7 2299.3,793.6 2300.1,796.4 2301.0,799.3 2301.8,802.2 2302.7,805.1 2303.5,807.9 2304.4,810.8 2305.2,813.7 2306.0,816.6 2306.8,819.5 2307.6,822.3 2308.4,825.2 2309.2,828.1 2310.0,831.0 2310.8,833.9 2311.6,836.8 2312.4,839.7 2313.1,842.6 2313.9,845.5 2314.7,848.4 2315.4,851.3 2316.2,854.2 2316.9,857.1 2317.6,860.0 2318.4,862.9 2319.1,865.8 2319.8,868.8 2320.5,871.7 2321.2,874.6 2321.9,877.5 2322.6,880.4 2323.3,883.3 2324.0,886.3 2324.7,889.2 2325.4,892.1 2326.0,895.1 2326.7,898.0 2327.4,900.9 2328.0,903.8 2328.7,906.8 2329.3,909.7 2329.9,912.6 2330.6,915.6 2331.2,918.5 2331.8,921.5 2332.4,924.4 2333.0,927.4 2333.7,930.3 2334.3,933.2 2334.9,936.2 2335.4,939.1 2336.0,942.1 2336.6,945.0 2337.2,948.0 2337.7,950.9 2338.3,953.9 2338.9,956.9 2339.4,959.8 2340.0,962.8 2340.5,965.7 2341.1,968.7 2341.6,971.7 2342.1,974.6 2342.6,977.6 2343.1,980.5 2343.7,983.5 2344.2,986.5 2344.7,989.4 2345.2,992.4 2345.7,995.4 2346.1,998.4 2346.6,1001.3 2347.1,1004.3 2347.6,1007.3 2348.0,1010.2 2348.5,1013.2 2349.0,1016.2 2349.4,1019.2 2349.9,1022.2 2350.3,1025.1 2350.7,1028.1 2351.2,1031.1 2351.6,1034.1 2352.0,1037.1 2352.4,1040.0 2352.8,1043.0 2353.3,1046.0 2353.7,1049.0 2354.1,1052.0 2354.4,1055.0 2354.8,1058.0 2355.2,1060.9 2355.6,1063.9 2356.0,1066.9 2356.3,1069.9 2356.7,1072.9 2357.1,1075.9 2357.4,1078.9 2357.8,1081.9 2358.1,1084.9 2358.4,1087.9 2358.8,1090.8 2359.1,1093.8 2359.4,1096.8 2359.8,1099.8 2360.1,1102.8 2360.4,1105.8 2360.7,1108.8 2361.0,1111.8 2361.3,1114.8 2361.6,1117.8 2361.9,1120.8 2362.2,1123.8 2362.4,1126.8 2362.7,1129.8 2363.0,1132.8 2363.2,1135.8 2363.5,1138.8 2363.8,1141.8 2364.0,1144.8 2364.3,1147.8 2364.5,1150.8 2364.7,1153.8 2365.0,1156.8 2365.2,1159.8 2365.4,1162.8 2365.6,1165.8 2365.9,1168.8 2366.1,1171.8 2366.3,1174.8 2366.5,1177.8 2366.7,1180.8 2366.9,1183.8 2367.1,1186.8 2367.2,1189.8 2367.4,1192.8 2367.6,1195.8 2367.8,1198.8 2367.9,1201.8 2368.1,1204.8 2368.3,1207.8 2368.4,1210.8 2368.6,1213.8 2368.7,1216.8 2368.9,1219.8 2369.0,1222.8 2369.1,1225.8 2369.3,1228.8 2369.4,1231.8 2369.5,1234.8 2369.6,1237.8 2369.7,1240.8 2369.8,1243.8 2369.9,1246.8 2370.0,1249.8 2370.1,1252.8 2370.2,1255.7 2370.3,1258.7 2370.4,1261.7 2370.5,1264.7 2370.6,1267.7 2370.6,1270.7 2370.7,1273.7 2370.8,1276.7 2370.8,1279.7 2370.9,1282.7 2370.9,1285.7 2371.0,1288.7 2371.0,1291.7 2371.0,1294.6 2371.1,1297.6 2371.1,1300.6 2371.1,1303.6 2371.2,1306.6 2371.2,1309.6 2371.2,1312.6 2371.2,1315.6 2371.2,1318.5 2371.2,1321.5 2371.2,1324.5 2371.2,1327.5 2371.2,1330.5 2371.2,1333.5 2371.2,1336.4 2371.1,1339.4 2371.1,1342.4 2371.1,1345.4 2371.0,1348.4 2371.0,1351.4 2370.9,1354.3 2370.9,1357.3 2370.8,1360.3 2370.8,1363.3 2370.7,1366.3 2370.6,1369.3 2370.6,1372.2 2370.5,1375.2 2370.4,1378.2 2370.3,1381.2 2370.2,1384.2 2370.1,1387.2 2370.0,1390.2 2369.9,1393.1 2369.8,1396.1 2369.7,1399.1 2369.6,1402.1 2369.4,1405.1 2369.3,1408.1 2369.2,1411.1 2369.0,1414.1 2368.9,1417.1 2368.7,1420.1 2368.5,1423.1 2368.4,1426.1 2368.2,1429.1 2368.0,1432.1 2367.9,1435.1 2367.7,1438.1 2367.5,1441.1 2367.3,1444.1 2367.1,1447.1 2366.9,1450.1 2366.6,1453.1 2366.4,1456.1 2366.2,1459.1 2366.0,1462.1 2365.7,1465.2 2365.5,1468.2 2365.2,1471.2 2365.0,1474.2 2364.7,1477.2 2364.5,1480.3 2364.2,1483.3 2363.9,1486.3 2363.6,1489.3 2363.3,1492.4 2363.0,1495.4 2362.7,1498.4 2362.4,1501.5 2362.1,1504.5 2361.8,1507.6 2361.5,1510.6 2361.1,1513.7 2360.8,1516.7 2360.4,1519.8 2360.1,1522.8 2359.7,1525.9 2359.4,1528.9 2359.0,1532.0 2358.6,1535.1 2358.2,1538.1 2357.8,1541.2 2357.3,1544.2 2356.9,1547.2 2356.3,1550.3 2355.8,1553.3 2355.2,1556.2 2354.5,1559.2 2353.7,1562.1 2352.9,1565.0 2352.0,1567.8 2351.1,1570.6 2350.0,1573.3 2348.8,1576.0 2347.6,1578.7 2346.2,1581.3 2344.7,1583.8 2343.2,1586.3 2341.5,1588.7 2339.7,1591.0 2337.8,1593.3 2335.9,1595.5 2333.9,1597.7 2331.8,1599.8 2329.6,1601.8 2327.4,1603.7 2325.1,1605.6 2322.8,1607.3 2320.4,1609.0 2318.0,1610.7 2315.5,1612.2 2313.0,1613.7 2310.5,1615.0 2307.9,1616.4 2305.3,1617.6 2302.7,1618.8 2300.0,1619.9 2297.4,1620.9 2294.6,1621.9 2291.9,1622.8 2289.2,1623.6 2286.4,1624.4 2283.6,1625.2 2280.7,1625.8 2277.9,1626.5 2275.0,1627.1 2272.1,1627.7 2269.2,1628.2 2266.3,1628.7 2263.4,1629.1 2260.4,1629.5 2257.5,1629.9 2254.5,1630.3 2251.5,1630.7 2248.5,1631.0 2245.5,1631.3 2242.5,1631.6 2239.5,1631.9 2236.5,1632.1 2233.5,1632.4 2230.5,1632.6 2227.5,1632.9 2224.4,1633.2 2221.4,1633.4 2218.4,1633.7 2215.4,1633.9 2212.3,1634.2 2209.3,1634.5 2206.3,1634.7 2203.3,1635.0 2200.3,1635.3 2197.2,1635.5 2194.2,1635.8 2191.2,1636.1 2188.2,1636.4 2185.2,1636.7 2182.1,1636.9 2179.1,1637.2 2176.1,1637.5 2173.1,1637.8 2170.1,1638.1 2167.1,1638.4 2164.0,1638.7 2161.0,1639.0 2158.0,1639.3 2155.0,1639.6 2152.0,1639.9 2149.0,1640.2 2145.9,1640.5 2142.9,1640.8 2139.9,1641.1 2136.9,1641.4 2133.9,1641.7 2130.9,1642.0 2127.9,1642.3 2124.9,1642.6 2121.8,1642.9 2118.8,1643.3 2115.8,1643.6 2112.8,1643.9 2109.8,1644.2 2106.8,1644.5 2103.8,1644.9 2100.8,1645.2 2097.7,1645.5 2094.7,1645.8 2091.7,1646.2 2088.7,1646.5 2085.7,1646.8 2082.7,1647.2 2079.7,1647.5 2076.7,1647.8 2073.7,1648.2 2070.7,1648.5 2067.7,1648.8 2064.7,1649.2 2061.6,1649.5 2058.6,1649.8 2055.6,1650.2 2052.6,1650.5 2049.6,1650.9 2046.6,1651.2 2043.6,1651.5 2040.6,1651.9 2037.6,1652.2 2034.6,1652.6 2031.6,1652.9 2028.6,1653.3 2025.6,1653.6 2022.6,1654.0 2019.6,1654.3 2016.6,1654.7 2013.6,1655.0 2010.6,1655.4 2007.6,1655.7 2004.6,1656.1 2001.6,1656.4 1998.5,1656.8 1995.5,1657.1 1992.5,1657.5 1989.5,1657.8 1986.5,1658.2 1983.5,1658.6 1980.5,1658.9 1977.5,1659.3 1974.5,1659.6 1971.5,1660.0 1968.5,1660.3 1965.5,1660.7 1962.5,1661.0 1959.5,1661.4 1956.5,1661.8 1953.5,1662.1 1950.5,1662.5 1947.5,1662.8 1944.5,1663.2 1941.5,1663.6 1938.5,1663.9 1935.5,1664.3 1932.6,1664.6 1929.6,1665.0 1926.6,1665.3 1923.6,1665.7 1920.6,1666.1 1917.6,1666.4 1914.6,1666.8 1911.6,1667.1 1908.6,1667.5 1905.6,1667.9 1902.6,1668.2 1899.6,1668.6 1896.6,1668.9 1893.6,1669.3 1890.6,1669.6 1887.6,1670.0 1884.6,1670.4 1881.6,1670.7 1878.6,1671.1 1875.6,1671.4 1872.6,1671.8 1869.6,1672.1 1866.6,1672.5 1863.6,1672.8 1860.7,1673.2 1857.7,1673.5 1854.7,1673.9 1851.7,1674.2 1848.7,1674.6 1845.7,1674.9 1842.7,1675.3 1839.7,1675.6 1836.7,1676.0 1833.7,1676.3 1830.7,1676.7 1827.7,1677.0 1824.7,1677.4 1821.7,1677.7 1818.8,1678.1 1815.8,1678.4 1812.8,1678.7 1809.8,1679.1 1806.8,1679.4 1803.8,1679.8 1800.8,1680.1 1797.8,1680.4 1794.8,1680.8 1791.8,1681.1 1788.8,1681.4 1785.9,1681.8 1782.9,1682.1 1779.9,1682.4 1776.9,1682.8 1773.9,1683.1 1770.9,1683.4 1767.9,1683.7 1764.9,1684.1 1761.9,1684.4 1758.9,1684.7 1756.0,1685.0 1753.0,1685.4 1750.0,1685.7 1747.0,1686.0 1744.0,1686.3 1741.0,1686.6 1738.0,1686.9 1735.0,1687.3 1732.0,1687.6 1729.1,1687.9 1726.1,1688.2 1723.1,1688.5 1720.1,1688.8 1717.1,1689.1 1714.1,1689.4 1711.1,1689.7 1708.1,1690.0 1705.2,1690.3 1702.2,1690.6 1699.2,1690.9 1696.2,1691.2 1693.2,1691.5 1690.2,1691.7 1687.2,1692.0 1684.2,1692.3 1681.3,1692.6 1678.3,1692.9 1675.3,1693.2 1672.3,1693.4 1669.3,1693.7 1666.3,1694.0 1663.3,1694.3 1660.4,1694.5 1657.4,1694.8 1654.4,1695.1 1651.4,1695.3 1648.4,1695.6 1645.4,1695.8 1642.4,1696.1 1639.4,1696.4 1636.5,1696.6 1633.5,1696.9 1630.5,1697.1 1627.5,1697.4 1624.5,1697.6 1621.5,1697.8 1618.5,1698.1 1615.6,1698.3 1612.6,1698.5 1609.6,1698.8 1606.6,1699.0 1603.6,1699.2 1600.6,1699.5 1597.6,1699.7 1594.7,1699.9 1591.7,1700.1 1588.7,1700.3 1585.7,1700.6 1582.7,1700.8 1579.7,1701.0 1576.7,1701.2 1573.8,1701.4 1570.8,1701.6 1567.8,1701.8 1564.8,1702.0 1561.8,1702.2 1558.8,1702.4 1555.8,1702.5 1552.9,1702.7 1549.9,1702.9 1546.9,1703.1 1543.9,1703.3 1540.9,1703.4 1537.9,1703.6 1535.0,1703.8 1532.0,1703.9 1529.0,1704.1 1526.0,1704.3 1523.0,1704.4 1520.0,1704.6 1517.0,1704.7 1514.1,1704.9 1511.1,1705.0 1508.1,1705.2 1505.1,1705.3 1502.1,1705.4 1499.1,1705.6 1496.1,1705.7 1493.2,1705.8 1490.2,1705.9 1487.2,1706.1 1484.2,1706.2 1481.2,1706.3 1478.2,1706.4 1475.2,1706.5 1472.3,1706.6 1469.3,1706.7 1466.3,1706.8 1463.3,1706.9 1460.3,1707.0 1457.3,1707.1 1454.3,1707.1 1451.4,1707.2 1448.4,1707.3 1445.4,1707.4 1442.4,1707.4 1439.4,1707.5 1436.4,1707.6 1433.4,1707.6 1430.5,1707.7 1427.5,1707.7 1424.5,1707.8 1421.5,1707.8 1418.5,1707.8 1415.5,1707.9 1412.5,1707.9 1409.6,1707.9 1406.6,1708.0 1403.6,1708.0 1400.6,1708.0 1397.6,1708.0 1394.6,1708.0 1391.6,1708.0 1388.6,1708.0 1385.7,1708.0 1382.7,1708.0 1379.7,1708.0 1376.7,1708.0 1373.7,1708.0 1370.7,1707.9 1367.7,1707.9 1364.7,1707.9 1361.8,1707.9 1358.8,1707.8 1355.8,1707.8 1352.8,1707.7 1349.8,1707.7 1346.8,1707.7 1343.8,1707.6 1340.8,1707.5 1337.9,1707.5 1334.9,1707.4 1331.9,1707.4 1328.9,1707.3 1325.9,1707.2 1322.9,1707.1 1319.9,1707.1 1316.9,1707.0 1313.9,1706.9 1311.0,1706.8 1308.0,1706.7 1305.0,1706.6 1302.0,1706.5 1299.0,1706.4 1296.0,1706.3 1293.0,1706.2 1290.0,1706.1 1287.0,1706.0 1284.1,1705.9 1281.1,1705.7 1278.1,1705.6 1275.1,1705.5 1272.1,1705.4 1269.1,1705.2 1266.1,1705.1 1263.1,1705.0 1260.1,1704.8 1257.2,1704.7 1254.2,1704.5 1251.2,1704.4 1248.2,1704.2 1245.2,1704.1 1242.2,1703.9 1239.2,1703.8 1236.2,1703.6 1233.2,1703.4 1230.2,1703.3 1227.3,1703.1 1224.3,1702.9 1221.3,1702.8 1218.3,1702.6 1215.3,1702.4 1212.3,1702.2 1209.3,1702.0 1206.3,1701.9 1203.3,1701.7 1200.3,1701.5 1197.3,1701.3 1194.4,1701.1 1191.4,1700.9 1188.4,1700.7 1185.4,1700.5 1182.4,1700.3 1179.4,1700.1 1176.4,1699.9 1173.4,1699.7 1170.4,1699.4 1167.4,1699.2 1164.4,1699.0 1161.4,1698.8 1158.5,1698.6 1155.5,1698.3 1152.5,1698.1 1149.5,1697.9 1146.5,1697.7 1143.5,1697.4 1140.5,1697.2 1137.5,1697.0 1134.5,1696.7 1131.5,1696.5 1128.5,1696.2 1125.5,1696.0 1122.5,1695.7 1119.6,1695.5 1116.6,1695.3 1113.6,1695.0 1110.6,1694.7 1107.6,1694.5 1104.6,1694.2 1101.6,1694.0 1098.6,1693.7 1095.6,1693.5 1092.6,1693.2 1089.6,1692.9 1086.6,1692.7 1083.6,1692.4 1080.6,1692.1 1077.6,1691.9 1074.7,1691.6 1071.7,1691.3 1068.7,1691.1 1065.7,1690.8 1062.7,1690.5 1059.7,1690.2 1056.7,1689.9 1053.7,1689.7 1050.7,1689.4 1047.7,1689.1 1044.7,1688.8 1041.7,1688.5 1038.7,1688.2 1035.7,1688.0 1032.7,1687.7 1029.7,1687.4 1026.7,1687.1 1023.7,1686.8 1020.7,1686.5 1017.8,1686.2 1014.8,1685.9 1011.8,1685.6 1008.8,1685.3 1005.8,1685.0 1002.8,1684.7 999.8,1684.4 996.8,1684.1 993.8,1683.8 990.8,1683.5 987.8,1683.2 984.8,1682.9 981.8,1682.6 978.8,1682.3 975.8,1682.0 972.8,1681.7 969.8,1681.4 966.8,1681.1 963.8,1680.7 960.8,1680.4 957.8,1680.1 954.8,1679.8 951.8,1679.5 948.8,1679.2 945.8,1678.9 942.8,1678.6 939.8,1678.2 936.8,1677.9 933.9,1677.6 930.9,1677.3 927.9,1677.0 924.9,1676.7 921.9,1676.4 918.9,1676.0 915.9,1675.7 912.9,1675.4 909.9,1675.1 906.9,1674.8 903.9,1674.5 900.9,1674.1 897.9,1673.8 894.9,1673.5 891.9,1673.2 888.9,1672.9 885.9,1672.5 882.9,1672.2 879.9,1671.9 876.9,1671.6 873.9,1671.3 870.9,1670.9 867.9,1670.6 864.9,1670.3 861.9,1670.0 858.9,1669.7 855.9,1669.4 852.9,1669.0 849.9,1668.7 846.9,1668.4 843.9,1668.1 840.9,1667.8 837.9,1667.4 834.9,1667.1 831.9,1666.8 828.9,1666.5 825.9,1666.2 822.9,1665.9 819.9,1665.5 816.9,1665.2 813.9,1664.9 810.9,1664.6 807.9,1664.3 804.9,1664.0 801.9,1663.7 798.9,1663.4 795.9,1663.0 792.9,1662.7 789.9,1662.4 786.9,1662.1 783.9,1661.8 780.9,1661.5 777.9,1661.2 774.9,1660.9 771.9,1660.6 768.9,1660.3 765.9,1660.0 762.9,1659.7 759.9,1659.4 756.9,1659.1 753.9,1658.8 750.9,1658.5 747.9,1658.2 744.9,1657.9 741.9,1657.6 738.9,1657.3 735.9,1657.0 732.8,1656.7 729.8,1656.4 726.8,1656.1 723.8,1655.8 720.8,1655.5 717.8,1655.2 714.8,1654.9 711.8,1654.6 708.8,1654.4 705.8,1654.1 702.8,1653.8 699.8,1653.5 696.8,1653.2 693.8,1653.0 690.8,1652.7 687.8,1652.4 684.8,1652.1 681.8,1651.9 678.8,1651.6 675.8,1651.3 672.8,1651.0 669.8,1650.8 666.8,1650.5 663.8,1650.2 660.8,1650.0 657.8,1649.7 654.7,1649.5 651.7,1649.2 648.7,1648.9 645.7,1648.7 642.7,1648.4 639.7,1648.2 636.7,1647.9 633.7,1647.7 630.7,1647.4 627.7,1647.2 624.7,1646.9 621.7,1646.7 618.7,1646.5 615.7,1646.2 612.7,1646.0 609.7,1645.8 606.7,1645.5 603.7,1645.3 600.6,1645.1 597.6,1644.8 594.6,1644.6 591.6,1644.4 588.6,1644.2 585.6,1643.9 582.6,1643.7 579.6,1643.5 576.6,1643.2 573.6,1642.9 570.6,1642.7 567.6,1642.4 564.7,1642.1 561.7,1641.8 558.7,1641.4 555.7,1641.1 552.8,1640.7 549.8,1640.3 546.9,1639.8 543.9,1639.4 541.0,1638.9 538.1,1638.4 535.1,1637.8 532.2,1637.3 529.3,1636.6 526.4,1636.0 523.5,1635.3 520.7,1634.6 517.8,1633.8 514.9,1633.0 512.1,1632.1 509.3,1631.2 506.5,1630.2 503.6,1629.2 500.9,1628.2 498.1,1627.1 495.3,1625.9 492.6,1624.6 489.9,1623.3 487.2,1622.0 484.7,1620.5 482.1,1619.0 479.7,1617.4 477.3,1615.7 475.0,1614.0 472.9,1612.1 470.8,1610.1 468.9,1608.1 467.0,1605.9 465.3,1603.7 463.6,1601.3 462.1,1598.9 460.6,1596.4 459.3,1593.9 458.0,1591.3 456.7,1588.6 455.6,1585.9 454.5,1583.1 453.4,1580.3 452.5,1577.5 451.5,1574.6 450.6,1571.7 449.7,1568.7 448.9,1565.8 448.1,1562.8 447.3,1559.9 446.5,1556.9 445.8,1554.0 445.0,1551.0 444.3,1548.1 443.5,1545.1 442.8,1542.1 442.1,1539.2 441.4,1536.2 440.8,1533.2 440.1,1530.3 439.5,1527.3 438.8,1524.3 438.2,1521.4 437.6,1518.4 437.0,1515.4 436.4,1512.5 435.9,1509.5 435.3,1506.5 434.8,1503.5 434.2,1500.6 433.7,1497.6 433.2,1494.6 432.7,1491.7 432.2,1488.7 431.7,1485.7 431.3,1482.7 430.8,1479.8 430.4,1476.8 429.9,1473.8 429.5,1470.8 429.1,1467.8 428.7,1464.9 428.3,1461.9 427.9,1458.9 427.5,1455.9 427.2,1452.9 426.8,1450.0 426.5,1447.0 426.1,1444.0 425.8,1441.0 425.5,1438.0 425.2,1435.0 424.9,1432.1 424.6,1429.1 424.3,1426.1 424.0,1423.1 423.7,1420.1 423.5,1417.1 423.2,1414.1 423.0,1411.1 422.8,1408.2 422.5,1405.2 422.3,1402.2 422.1,1399.2 421.9,1396.2 421.7,1393.2 421.5,1390.2 421.3,1387.2 421.1,1384.2 421.0,1381.2 420.8,1378.2 420.6,1375.2 420.5,1372.2 420.3,1369.2 420.2,1366.3 420.1,1363.3 419.9,1360.3 419.8,1357.3 419.7,1354.3 419.6,1351.3 419.5,1348.3 419.4,1345.3 419.3,1342.3 419.2,1339.3 419.1,1336.3 419.0,1333.3 418.9,1330.3 418.8,1327.3 418.8,1324.3 418.7,1321.3 418.6,1318.3 418.6,1315.3 418.5,1312.3 418.4,1309.3 418.4,1306.3 418.3,1303.3 418.3,1300.3 418.3,1297.3 418.2,1294.3 418.2,1291.2 418.1,1288.2 418.1,1285.2 418.1,1282.2 418.1,1279.2 418.0,1276.2 418.0,1273.2 418.0,1270.2 418.0,1267.2 418.0,1264.2 418.0,1261.2 418.0,1258.2 418.0,1255.2 418.0,1252.2 418.0,1249.2 418.0,1246.2 418.0,1243.2 418.0,1240.2 418.0,1237.1 418.1,1234.1 418.1,1231.1 418.1,1228.1 418.2,1225.1 418.2,1222.1 418.2,1219.1 418.3,1216.1 418.3,1213.1 418.4,1210.1 418.4,1207.1 418.5,1204.1 418.5,1201.1 418.6,1198.1 418.7,1195.0 418.7,1192.0 418.8,1189.0 418.9,1186.0 419.0,1183.0 419.1,1180.0 419.2,1177.0 419.3,1174.0 419.4,1171.0 419.5,1168.0 419.6,1165.0 419.7,1162.0 419.8,1159.0 419.9,1156.0 420.0,1153.0 420.1,1150.0 420.3,1146.9 420.4,1143.9 420.5,1140.9 420.7,1137.9 420.8,1134.9 421.0,1131.9 421.1,1128.9 421.3,1125.9 421.4,1122.9 421.6,1119.9 421.8,1116.9 422.0,1113.9 422.1,1110.9 422.3,1107.9 422.5,1104.9 422.7,1101.9 422.9,1098.9 423.1,1095.9 423.3,1092.9 423.5,1089.9 423.7,1086.9 423.9,1083.9 424.1,1080.9 424.4,1077.9 424.6,1074.9 424.8,1071.9 425.1,1068.9 425.3,1065.9 425.6,1062.9 425.8,1059.9 426.1,1057.0 426.3,1054.0 426.6,1051.0 426.9,1048.0 427.1,1045.0 427.4,1042.0 427.7,1039.0 428.0,1036.0 428.3,1033.0 428.6,1030.0 428.9,1027.0 429.2,1024.1 429.5,1021.1 429.8,1018.1 430.2,1015.1 430.5,1012.1 430.8,1009.1 431.2,1006.1 431.5,1003.2 431.8,1000.2 432.2,997.2 432.6,994.2 432.9,991.2 433.3,988.3 433.7,985.3 434.0,982.3 434.4,979.3 434.8,976.3 435.2,973.4 435.6,970.4 436.0,967.4 436.4,964.5 436.8,961.5 437.2,958.5 437.7,955.5 438.1,952.6 438.5,949.6 439.0,946.6 439.4,943.7 439.9,940.7 440.3,937.7 440.8,934.8 441.3,931.8 441.7,928.8 442.2,925.9 442.7,922.9 443.2,920.0 443.7,917.0 444.2,914.0 444.7,911.1 445.2,908.1 445.7,905.2 446.3,902.2 446.8,899.3 447.3,896.3 447.9,893.4 448.4,890.4 449.0,887.5 449.5,884.5 450.1,881.6 450.7,878.6 451.2,875.7 451.8,872.7 452.4,869.8 453.0,866.9 453.6,863.9 454.2,861.0 454.8,858.1 455.4,855.1 456.1,852.2 456.7,849.3 457.3,846.3 458.0,843.4 458.6,840.5 459.3,837.5 459.9,834.6 460.6,831.7 461.3,828.8 461.9,825.8 462.6,822.9 463.3,820.0 464.0,817.1 464.7,814.2 465.4,811.3 466.1,808.3 466.9,805.4 467.6,802.5 468.3,799.6 469.1,796.7 469.8,793.8 470.6,790.9 471.3,788.0 472.1,785.1 472.9,782.2 473.6,779.3 474.4,776.4 475.2,773.5 476.0,770.6 476.8,767.8 477.6,764.9 478.5,762.0 479.3,759.1 480.1,756.2 480.9,753.3 481.8,750.5 482.6,747.6 483.5,744.7 484.4,741.8 485.2,739.0 486.1,736.1 487.0,733.2 487.9,730.4 488.8,727.5 489.7,724.7 490.6,721.8 491.5,719.0 492.4,716.1 493.4,713.2 494.3,710.4 495.3,707.6 496.2,704.7 497.2,701.9 498.1,699.0 499.1,696.2 500.1,693.4 501.1,690.5 502.1,687.7 503.1,684.9 504.1,682.0 505.1,679.2 506.1,676.4 507.1,673.6 508.2,670.8 509.2,668.0 510.3,665.1 511.3,662.3 512.4,659.5 513.5,656.7 514.5,653.9 515.6,651.1 516.7,648.3 517.8,645.5 518.9,642.7 520.0,640.0 521.2,637.2 522.3,634.4 523.4,631.6 524.6,628.8 525.7,626.1 526.9,623.3 528.1,620.5 529.2,617.8 530.4,615.0 531.6,612.2 532.8,609.5 534.0,606.7 535.2,604.0 536.4,601.2 537.6,598.5 538.9,595.7 540.1,593.0 541.4,590.2 542.6,587.5 543.9,584.8 545.2,582.0 546.4,579.3 547.7,576.6 549.0,573.9 550.3,571.2 551.6,568.5 552.9,565.7 554.3,563.0 555.6,560.3 556.9,557.6 558.3,554.9 559.7,552.2 561.0,549.5 562.4,546.9 563.8,544.2 565.2,541.5 566.5,538.8 568.0,536.1 569.4,533.5 570.8,530.8 572.2,528.1 573.6,525.5 575.1,522.8 576.5,520.2 578.0,517.5 579.5,514.9 580.9,512.2 582.4,509.6 583.9,506.9 585.4,504.3 586.9,501.7 588.5,499.1 590.0,496.4 591.5,493.8 593.1,491.2 594.6,488.6 596.2,486.0 597.8,483.5 599.4,480.9 601.0,478.3 602.6,475.8 604.2,473.2 605.8,470.7 607.5,468.1 609.1,465.6 610.8,463.1 612.5,460.6 614.2,458.1 615.9,455.6 617.6,453.1 619.3,450.6 621.0,448.2 622.8,445.7 624.6,443.3 626.3,440.9 628.1,438.5 629.9,436.1 631.8,433.7 633.6,431.3 635.4,429.0 637.3,426.6 639.2,424.3 641.1,422.0 643.0,419.7 644.9,417.4 646.8,415.1 648.8,412.8 650.7,410.6 652.7,408.3 654.7,406.1 656.7,403.9 658.7,401.7 660.8,399.6 662.8,397.4 664.9,395.3 667.0,393.2 669.1,391.1 671.2,389.0 673.4,386.9 675.5,384.9 677.7,382.9 679.9,380.9 682.1,378.9 684.3,376.9 686.6,375.0 688.8,373.0 691.1,371.1 693.4,369.2 695.8,367.4 698.1,365.5 700.5,363.7 702.8,361.9 705.2,360.1 707.6,358.4 710.1,356.6 712.5,354.9 715.0,353.2 717.4,351.5 719.9,349.9 722.4,348.2 724.9,346.6 727.5,345.0 730.0,343.5 732.6,341.9 735.2,340.4 737.8,338.9 740.4,337.4 743.0,335.9 745.6,334.5 748.3,333.1 750.9,331.7 753.6,330.3 756.3,329.0 759.0,327.6 761.7,326.3 764.4,325.0 767.2,323.8 769.9,322.5 772.7,321.3 775.4,320.1 778.2,318.9 781.0,317.8 783.8,316.6 786.6,315.5 789.4,314.5 792.2,313.4 795.1,312.4 797.9,311.3 800.8,310.3 803.6,309.4 806.5,308.4 809.4,307.5 812.3,306.6 815.1,305.7 818.0,304.9 820.9,304.0 823.9,303.2 826.8,302.4 829.7,301.7 832.6,300.9 835.6,300.2 838.5,299.5 841.4,298.9 844.4,298.2 847.3,297.6 850.3,297.0 853.3,296.4 856.2,295.9 859.2,295.3 862.2,294.8 865.1,294.4 868.1,293.9 871.1,293.5 874.1,293.1 877.1,292.7 880.0,292.3 883.0,292.0 886.0,291.7 889.0,291.4 892.0,291.2 895.0,290.9 898.0,290.7 901.0,290.5 904.0,290.3 907.0,290.1 910.0,290.0 913.0,289.8 916.0,289.7 919.0,289.6 922.0,289.5 925.0,289.4 928.0,289.3 931.0,289.2 934.0,289.1 937.0,289.1 940.0,289.0 943.0,288.9 946.0,288.9 949.0,288.8 952.0,288.8 955.0,288.7 958.0,288.7 961.0,288.6 964.0,288.6 967.0,288.5 970.0,288.5 973.0,288.4 976.0,288.3 979.0,288.3 982.0,288.2 985.0,288.1 988.0,288.0 991.0,287.8 994.0,287.7 997.0,287.6 1000.0,287.4Z" fill="none" stroke="#d24424" stroke-width="5" filter="url(#bl2)"/>
   <path d="M463.7,1579.5L466.0,1614.0 440.0,1614.0 440.0,1570.0Z" fill="#d8482a"/><path d="M2337.8,1566.5L2339.0,1595.0 2370.0,1595.0 2370.0,1555.0Z" fill="#d8482a"/>
   <path d="M463.7,1579.5L466.5,1614.0" stroke="#a82a14" stroke-width="1.5"/><path d="M2337.8,1566.5L2339.0,1596.0" stroke="#a82a14" stroke-width="1.5"/>
  </g>
  <path d="M463.7,1579.5L469.7,1580.2 475.7,1580.9 481.7,1581.6 487.6,1582.3 493.5,1583.0 499.4,1583.7 505.3,1584.4 511.1,1585.1 516.9,1585.8 522.7,1586.5 528.5,1587.2 534.3,1587.9 540.1,1588.6 545.9,1589.3 551.7,1590.0 557.5,1590.7 563.3,1591.4 569.1,1592.0 574.9,1592.7 580.8,1593.4 586.7,1594.1 592.6,1594.8 598.5,1595.5 604.5,1596.2 610.5,1596.9 616.5,1597.6 622.6,1598.4 628.7,1599.1 634.9,1599.8 641.1,1600.5 647.4,1601.2 653.7,1601.9 660.1,1602.6 666.6,1603.4 673.1,1604.1 679.7,1604.8 686.4,1605.5 693.2,1606.3 700.0,1607.0 705.4,1607.6 710.8,1608.2 716.3,1608.7 721.8,1609.3 727.4,1609.9 733.0,1610.5 738.7,1611.1 744.4,1611.7 750.1,1612.3 755.9,1612.9 761.7,1613.5 767.6,1614.1 773.5,1614.7 779.4,1615.3 785.3,1615.9 791.3,1616.5 797.3,1617.1 803.3,1617.7 809.3,1618.4 815.4,1619.0 821.5,1619.6 827.6,1620.2 833.7,1620.8 839.9,1621.4 846.0,1622.0 852.2,1622.6 858.4,1623.3 864.5,1623.9 870.7,1624.5 876.9,1625.1 883.1,1625.7 889.4,1626.3 895.6,1626.9 901.8,1627.5 908.0,1628.1 914.2,1628.7 920.4,1629.4 926.6,1630.0 932.8,1630.6 939.0,1631.2 945.2,1631.7 951.3,1632.3 957.5,1632.9 963.6,1633.5 969.7,1634.1 975.8,1634.7 981.9,1635.3 988.0,1635.9 994.0,1636.4 1000.0,1637.0 1006.0,1637.6 1012.2,1638.2 1018.3,1638.7 1024.6,1639.3 1030.9,1639.9 1037.3,1640.5 1043.7,1641.1 1050.2,1641.7 1056.7,1642.3 1063.2,1642.9 1069.8,1643.6 1076.4,1644.2 1083.0,1644.8 1089.6,1645.4 1096.3,1646.0 1103.0,1646.6 1109.6,1647.2 1116.3,1647.9 1123.0,1648.5 1129.6,1649.1 1136.2,1649.7 1142.8,1650.3 1149.4,1650.9 1156.0,1651.5 1162.5,1652.1 1169.0,1652.6 1175.4,1653.2 1181.8,1653.8 1188.1,1654.4 1194.4,1654.9 1200.6,1655.5 1206.7,1656.0 1212.8,1656.6 1218.8,1657.1 1224.7,1657.6 1230.5,1658.1 1236.2,1658.6 1241.9,1659.1 1247.4,1659.6 1252.8,1660.1 1258.1,1660.5 1263.3,1661.0 1268.4,1661.4 1273.3,1661.8 1278.1,1662.2 1282.8,1662.6 1287.3,1663.0 1291.7,1663.3 1295.9,1663.7 1300.0,1664.0 1311.7,1664.9 1322.1,1665.7 1331.1,1666.4 1339.1,1667.0 1346.0,1667.5 1352.1,1667.9 1357.6,1668.2 1362.5,1668.5 1367.0,1668.7 1371.3,1668.8 1375.5,1668.9 1379.7,1669.0 1384.1,1669.0 1388.9,1669.0 1394.1,1669.0 1400.0,1669.0 1405.9,1669.0 1411.1,1669.0 1415.9,1669.0 1420.3,1669.0 1424.5,1669.0 1428.7,1668.9 1433.0,1668.8 1437.5,1668.7 1442.4,1668.4 1447.9,1668.1 1454.0,1667.7 1460.9,1667.2 1468.9,1666.6 1477.9,1665.9 1488.3,1665.0 1500.0,1664.0 1504.1,1663.6 1508.3,1663.3 1512.7,1662.9 1517.2,1662.5 1521.9,1662.1 1526.7,1661.6 1531.6,1661.2 1536.7,1660.7 1541.9,1660.3 1547.2,1659.8 1552.6,1659.3 1558.1,1658.8 1563.8,1658.3 1569.5,1657.7 1575.3,1657.2 1581.2,1656.6 1587.2,1656.1 1593.3,1655.5 1599.4,1654.9 1605.6,1654.3 1611.9,1653.7 1618.2,1653.1 1624.6,1652.5 1631.0,1651.9 1637.5,1651.2 1644.0,1650.6 1650.6,1649.9 1657.2,1649.3 1663.8,1648.6 1670.4,1648.0 1677.0,1647.3 1683.7,1646.7 1690.4,1646.0 1697.0,1645.3 1703.7,1644.6 1710.4,1643.9 1717.0,1643.3 1723.6,1642.6 1730.2,1641.9 1736.8,1641.2 1743.3,1640.5 1749.8,1639.8 1756.3,1639.2 1762.7,1638.5 1769.1,1637.8 1775.4,1637.1 1781.7,1636.4 1787.8,1635.7 1794.0,1635.1 1800.0,1634.4 1806.0,1633.7 1812.0,1633.0 1818.1,1632.4 1824.2,1631.7 1830.3,1630.9 1836.4,1630.2 1842.5,1629.5 1848.7,1628.8 1854.8,1628.0 1861.0,1627.3 1867.2,1626.6 1873.4,1625.8 1879.6,1625.1 1885.8,1624.3 1892.0,1623.5 1898.2,1622.8 1904.4,1622.0 1910.6,1621.2 1916.8,1620.4 1923.0,1619.7 1929.2,1618.9 1935.4,1618.1 1941.6,1617.3 1947.7,1616.5 1953.9,1615.8 1960.0,1615.0 1966.2,1614.2 1972.3,1613.4 1978.4,1612.6 1984.5,1611.8 1990.5,1611.1 1996.6,1610.3 2002.6,1609.5 2008.6,1608.7 2014.6,1608.0 2020.5,1607.2 2026.4,1606.4 2032.3,1605.7 2038.2,1604.9 2044.0,1604.2 2049.8,1603.4 2055.5,1602.7 2061.2,1601.9 2066.9,1601.2 2072.5,1600.5 2078.1,1599.8 2083.6,1599.1 2089.1,1598.4 2094.6,1597.7 2100.0,1597.0 2106.9,1596.1 2113.6,1595.3 2120.3,1594.4 2127.0,1593.6 2133.5,1592.8 2140.0,1591.9 2146.4,1591.1 2152.8,1590.3 2159.1,1589.5 2165.4,1588.7 2171.6,1587.9 2177.8,1587.1 2183.9,1586.3 2190.0,1585.5 2196.0,1584.8 2202.0,1584.0 2208.0,1583.2 2213.9,1582.5 2219.8,1581.7 2225.7,1580.9 2231.6,1580.2 2237.5,1579.4 2243.3,1578.7 2249.2,1577.9 2255.0,1577.2 2260.8,1576.4 2266.7,1575.7 2272.5,1574.9 2278.3,1574.2 2284.2,1573.4 2290.1,1572.6 2295.9,1571.9 2301.8,1571.1 2307.8,1570.4 2313.7,1569.6 2319.7,1568.8 2325.7,1568.1 2331.7,1567.3 2337.8,1566.5" fill="none" stroke="#9a1c20" stroke-width="2"/>
  <path d="M1790.0,287.2L1793.0,287.1 1795.9,287.0 1798.9,287.0 1801.8,287.0 1804.8,286.9 1807.8,286.9 1810.8,287.0 1813.7,287.0 1816.7,287.1 1819.7,287.2 1822.7,287.3 1825.7,287.4 1828.7,287.5 1831.7,287.7 1834.7,287.8 1837.7,288.0 1840.7,288.3 1843.7,288.5 1846.7,288.7 1849.7,289.0 1852.7,289.3 1855.7,289.6 1858.7,289.9 1861.7,290.3 1864.7,290.7 1867.7,291.1 1870.7,291.5 1873.7,291.9 1876.7,292.4 1879.7,292.8 1882.7,293.3 1885.7,293.8 1888.6,294.4 1891.6,294.9 1894.6,295.5 1897.6,296.1 1900.5,296.7 1903.5,297.3 1906.5,298.0 1909.4,298.6 1912.4,299.3 1915.3,300.0 1918.3,300.8 1921.2,301.5 1924.1,302.3 1927.0,303.1 1930.0,303.9 1932.9,304.7 1935.8,305.6 1938.7,306.5 1941.6,307.4 1944.4,308.3 1947.3,309.2 1950.2,310.2 1953.0,311.2 1955.9,312.2 1958.7,313.2 1961.5,314.2 1964.3,315.3 1967.2,316.4 1970.0,317.5 1972.7,318.6 1975.5,319.8 1978.3,321.0 1981.0,322.2 1983.8,323.4 1986.5,324.6 1989.2,325.9 1991.9,327.1 1994.6,328.4 1997.3,329.8 2000.0,331.1 2002.7,332.5 2005.3,333.9 2007.9,335.3 2010.5,336.7 2013.1,338.2 2015.7,339.6 2018.3,341.1 2020.9,342.7 2023.4,344.2 2025.9,345.8 2028.4,347.4 2030.9,349.0 2033.4,350.6 2035.9,352.3 2038.3,353.9 2040.8,355.6 2043.2,357.4 2045.6,359.1 2048.0,360.9 2050.3,362.6 2052.7,364.4 2055.0,366.3 2057.3,368.1 2059.6,370.0 2061.9,371.9 2064.2,373.8 2066.5,375.7 2068.7,377.6 2070.9,379.6 2073.1,381.6 2075.3,383.6 2077.5,385.6 2079.7,387.6 2081.9,389.7 2084.0,391.7 2086.1,393.8 2088.2,395.9 2090.3,398.0 2092.4,400.2 2094.5,402.3 2096.6,404.5 2098.6,406.7 2100.6,408.8 2102.7,411.1 2104.7,413.3 2106.7,415.5 2108.6,417.8 2110.6,420.0 2112.6,422.3 2114.5,424.6 2116.5,426.9 2118.4,429.2 2120.3,431.6 2122.2,433.9 2124.1,436.2 2125.9,438.6 2127.8,441.0 2129.6,443.4 2131.5,445.8 2133.3,448.2 2135.1,450.6 2136.9,453.0 2138.7,455.5 2140.5,457.9 2142.3,460.4 2144.0,462.9 2145.8,465.3 2147.5,467.8 2149.2,470.3 2151.0,472.8 2152.7,475.3 2154.4,477.9 2156.1,480.4 2157.7,482.9 2159.4,485.4 2161.1,488.0 2162.7,490.5 2164.4,493.1 2166.0,495.7 2167.6,498.2 2169.2,500.8 2170.8,503.4 2172.4,506.0 2174.0,508.6 2175.6,511.2 2177.2,513.8 2178.7,516.4 2180.3,519.0 2181.8,521.6 2183.4,524.2 2184.9,526.8 2186.4,529.4 2188.0,532.0 2189.5,534.7 2191.0,537.3 2192.5,539.9 2193.9,542.6 2195.4,545.2 2196.9,547.8 2198.4,550.5 2199.8,553.1 2201.3,555.8 2202.7,558.4 2204.1,561.1 2205.5,563.7 2207.0,566.4 2208.4,569.1 2209.8,571.7 2211.2,574.4 2212.5,577.1 2213.9,579.7 2215.3,582.4 2216.7,585.1 2218.0,587.8 2219.4,590.5 2220.7,593.2 2222.0,595.8 2223.4,598.5 2224.7,601.2 2226.0,603.9 2227.3,606.6 2228.6,609.4 2229.9,612.1 2231.2,614.8 2232.5,617.5 2233.7,620.2 2235.0,622.9 2236.2,625.6 2237.5,628.4 2238.7,631.1 2240.0,633.8 2241.2,636.6 2242.4,639.3 2243.6,642.0 2244.8,644.8 2246.0,647.5 2247.2,650.3 2248.4,653.0 2249.6,655.8 2250.7,658.5 2251.9,661.3 2253.1,664.0 2254.2,666.8 2255.4,669.6 2256.5,672.3 2257.6,675.1 2258.7,677.9 2259.9,680.7 2261.0,683.4 2262.1,686.2 2263.2,689.0 2264.3,691.8 2265.3,694.6 2266.4,697.4 2267.5,700.2 2268.6,702.9 2269.6,705.7 2270.7,708.5 2271.7,711.3 2272.7,714.2 2273.8,717.0 2274.8,719.8 2275.8,722.6 2276.8,725.4 2277.8,728.2 2278.8,731.0 2279.8,733.8 2280.8,736.7 2281.8,739.5 2282.8,742.3 2283.7,745.1 2284.7,748.0 2285.7,750.8 2286.6,753.6 2287.6,756.5 2288.5,759.3 2289.4,762.2 2290.4,765.0 2291.3,767.9 2292.2,770.7 2293.1,773.6 2294.0,776.4 2294.9,779.3 2295.8,782.1 2296.7,785.0 2297.5,787.8 2298.4,790.7 2299.3,793.6 2300.1,796.4 2301.0,799.3 2301.8,802.2 2302.7,805.1 2303.5,807.9 2304.4,810.8 2305.2,813.7 2306.0,816.6 2306.8,819.5 2307.6,822.3 2308.4,825.2 2309.2,828.1 2310.0,831.0 2310.8,833.9 2311.6,836.8 2312.4,839.7 2313.1,842.6 2313.9,845.5 2314.7,848.4 2315.4,851.3 2316.2,854.2 2316.9,857.1 2317.6,860.0 2318.4,862.9 2319.1,865.8 2319.8,868.8 2320.5,871.7 2321.2,874.6 2321.9,877.5 2322.6,880.4 2323.3,883.3 2324.0,886.3 2324.7,889.2 2325.4,892.1 2326.0,895.1 2326.7,898.0 2327.4,900.9 2328.0,903.8 2328.7,906.8 2329.3,909.7 2329.9,912.6 2330.6,915.6 2331.2,918.5 2331.8,921.5 2332.4,924.4 2333.0,927.4 2333.7,930.3 2334.3,933.2 2334.9,936.2 2335.4,939.1 2336.0,942.1 2336.6,945.0 2337.2,948.0 2337.7,950.9 2338.3,953.9 2338.9,956.9 2339.4,959.8 2340.0,962.8 2340.5,965.7 2341.1,968.7 2341.6,971.7 2342.1,974.6 2342.6,977.6 2343.1,980.5 2343.7,983.5 2344.2,986.5 2344.7,989.4 2345.2,992.4 2345.7,995.4 2346.1,998.4 2346.6,1001.3 2347.1,1004.3 2347.6,1007.3 2348.0,1010.2 2348.5,1013.2 2349.0,1016.2 2349.4,1019.2 2349.9,1022.2 2350.3,1025.1 2350.7,1028.1 2351.2,1031.1 2351.6,1034.1 2352.0,1037.1 2352.4,1040.0 2352.8,1043.0 2353.3,1046.0 2353.7,1049.0 2354.1,1052.0 2354.4,1055.0 2354.8,1058.0 2355.2,1060.9 2355.6,1063.9 2356.0,1066.9 2356.3,1069.9 2356.7,1072.9 2357.1,1075.9 2357.4,1078.9 2357.8,1081.9 2358.1,1084.9 2358.4,1087.9 2358.8,1090.8 2359.1,1093.8 2359.4,1096.8 2359.8,1099.8 2360.1,1102.8 2360.4,1105.8 2360.7,1108.8 2361.0,1111.8 2361.3,1114.8 2361.6,1117.8 2361.9,1120.8 2362.2,1123.8 2362.4,1126.8 2362.7,1129.8 2363.0,1132.8 2363.2,1135.8 2363.5,1138.8 2363.8,1141.8 2364.0,1144.8 2364.3,1147.8 2364.5,1150.8 2364.7,1153.8 2365.0,1156.8 2365.2,1159.8 2365.4,1162.8 2365.6,1165.8 2365.9,1168.8 2366.1,1171.8 2366.3,1174.8 2366.5,1177.8 2366.7,1180.8 2366.9,1183.8 2367.1,1186.8 2367.2,1189.8 2367.4,1192.8 2367.6,1195.8 2367.8,1198.8 2367.9,1201.8 2368.1,1204.8 2368.3,1207.8 2368.4,1210.8 2368.6,1213.8 2368.7,1216.8 2368.9,1219.8 2369.0,1222.8 2369.1,1225.8 2369.3,1228.8 2369.4,1231.8 2369.5,1234.8 2369.6,1237.8 2369.7,1240.8 2369.8,1243.8 2369.9,1246.8 2370.0,1249.8 2370.1,1252.8 2370.2,1255.7 2370.3,1258.7 2370.4,1261.7 2370.5,1264.7 2370.6,1267.7 2370.6,1270.7 2370.7,1273.7 2370.8,1276.7 2370.8,1279.7 2370.9,1282.7 2370.9,1285.7 2371.0,1288.7 2371.0,1291.7 2371.0,1294.6 2371.1,1297.6 2371.1,1300.6 2371.1,1303.6 2371.2,1306.6 2371.2,1309.6 2371.2,1312.6 2371.2,1315.6 2371.2,1318.5 2371.2,1321.5 2371.2,1324.5 2371.2,1327.5 2371.2,1330.5 2371.2,1333.5 2371.2,1336.4 2371.1,1339.4 2371.1,1342.4 2371.1,1345.4 2371.0,1348.4 2371.0,1351.4 2370.9,1354.3 2370.9,1357.3 2370.8,1360.3 2370.8,1363.3 2370.7,1366.3 2370.6,1369.3 2370.6,1372.2 2370.5,1375.2 2370.4,1378.2 2370.3,1381.2 2370.2,1384.2 2370.1,1387.2 2370.0,1390.2 2369.9,1393.1 2369.8,1396.1 2369.7,1399.1 2369.6,1402.1 2369.4,1405.1 2369.3,1408.1 2369.2,1411.1 2369.0,1414.1 2368.9,1417.1 2368.7,1420.1 2368.5,1423.1 2368.4,1426.1 2368.2,1429.1 2368.0,1432.1 2367.9,1435.1 2367.7,1438.1 2367.5,1441.1 2367.3,1444.1 2367.1,1447.1 2366.9,1450.1 2366.6,1453.1 2366.4,1456.1 2366.2,1459.1 2366.0,1462.1 2365.7,1465.2 2365.5,1468.2 2365.2,1471.2 2365.0,1474.2 2364.7,1477.2 2364.5,1480.3 2364.2,1483.3 2363.9,1486.3 2363.6,1489.3 2363.3,1492.4 2363.0,1495.4 2362.7,1498.4 2362.4,1501.5 2362.1,1504.5 2361.8,1507.6 2361.5,1510.6 2361.1,1513.7 2360.8,1516.7 2360.4,1519.8 2360.1,1522.8 2359.7,1525.9 2359.4,1528.9 2359.0,1532.0 2358.6,1535.1 2358.2,1538.1 2357.8,1541.2 2357.3,1544.2 2356.9,1547.2 2356.3,1550.3 2355.8,1553.3 2355.2,1556.2 2354.5,1559.2 2353.7,1562.1 2352.9,1565.0 2352.0,1567.8 2351.1,1570.6 2350.0,1573.3 2348.8,1576.0 2347.6,1578.7 2346.2,1581.3 2344.7,1583.8 2343.2,1586.3 2341.5,1588.7 2339.7,1591.0 2337.8,1593.3 2335.9,1595.5 2333.9,1597.7 2331.8,1599.8 2329.6,1601.8 2327.4,1603.7 2325.1,1605.6 2322.8,1607.3 2320.4,1609.0 2318.0,1610.7 2315.5,1612.2 2313.0,1613.7 2310.5,1615.0 2307.9,1616.4 2305.3,1617.6 2302.7,1618.8 2300.0,1619.9 2297.4,1620.9 2294.6,1621.9 2291.9,1622.8 2289.2,1623.6 2286.4,1624.4 2283.6,1625.2 2280.7,1625.8 2277.9,1626.5 2275.0,1627.1 2272.1,1627.7 2269.2,1628.2 2266.3,1628.7 2263.4,1629.1 2260.4,1629.5 2257.5,1629.9 2254.5,1630.3 2251.5,1630.7 2248.5,1631.0 2245.5,1631.3 2242.5,1631.6 2239.5,1631.9 2236.5,1632.1 2233.5,1632.4 2230.5,1632.6 2227.5,1632.9 2224.4,1633.2 2221.4,1633.4 2218.4,1633.7 2215.4,1633.9 2212.3,1634.2 2209.3,1634.5 2206.3,1634.7 2203.3,1635.0 2200.3,1635.3 2197.2,1635.5 2194.2,1635.8 2191.2,1636.1 2188.2,1636.4 2185.2,1636.7 2182.1,1636.9 2179.1,1637.2 2176.1,1637.5 2173.1,1637.8 2170.1,1638.1 2167.1,1638.4 2164.0,1638.7 2161.0,1639.0 2158.0,1639.3 2155.0,1639.6 2152.0,1639.9 2149.0,1640.2 2145.9,1640.5 2142.9,1640.8 2139.9,1641.1 2136.9,1641.4 2133.9,1641.7 2130.9,1642.0 2127.9,1642.3 2124.9,1642.6 2121.8,1642.9 2118.8,1643.3 2115.8,1643.6 2112.8,1643.9 2109.8,1644.2 2106.8,1644.5 2103.8,1644.9 2100.8,1645.2 2097.7,1645.5 2094.7,1645.8 2091.7,1646.2 2088.7,1646.5 2085.7,1646.8 2082.7,1647.2 2079.7,1647.5 2076.7,1647.8 2073.7,1648.2 2070.7,1648.5 2067.7,1648.8 2064.7,1649.2 2061.6,1649.5 2058.6,1649.8 2055.6,1650.2 2052.6,1650.5 2049.6,1650.9 2046.6,1651.2 2043.6,1651.5 2040.6,1651.9 2037.6,1652.2 2034.6,1652.6 2031.6,1652.9 2028.6,1653.3 2025.6,1653.6 2022.6,1654.0 2019.6,1654.3 2016.6,1654.7 2013.6,1655.0 2010.6,1655.4 2007.6,1655.7 2004.6,1656.1 2001.6,1656.4 1998.5,1656.8 1995.5,1657.1 1992.5,1657.5 1989.5,1657.8 1986.5,1658.2 1983.5,1658.6 1980.5,1658.9 1977.5,1659.3 1974.5,1659.6 1971.5,1660.0 1968.5,1660.3 1965.5,1660.7 1962.5,1661.0 1959.5,1661.4 1956.5,1661.8 1953.5,1662.1 1950.5,1662.5 1947.5,1662.8 1944.5,1663.2 1941.5,1663.6 1938.5,1663.9 1935.5,1664.3 1932.6,1664.6 1929.6,1665.0 1926.6,1665.3 1923.6,1665.7 1920.6,1666.1 1917.6,1666.4 1914.6,1666.8 1911.6,1667.1 1908.6,1667.5 1905.6,1667.9 1902.6,1668.2 1899.6,1668.6 1896.6,1668.9 1893.6,1669.3 1890.6,1669.6 1887.6,1670.0 1884.6,1670.4 1881.6,1670.7 1878.6,1671.1 1875.6,1671.4 1872.6,1671.8 1869.6,1672.1 1866.6,1672.5 1863.6,1672.8 1860.7,1673.2 1857.7,1673.5 1854.7,1673.9 1851.7,1674.2 1848.7,1674.6 1845.7,1674.9 1842.7,1675.3 1839.7,1675.6 1836.7,1676.0 1833.7,1676.3 1830.7,1676.7 1827.7,1677.0 1824.7,1677.4 1821.7,1677.7 1818.8,1678.1 1815.8,1678.4 1812.8,1678.7 1809.8,1679.1 1806.8,1679.4 1803.8,1679.8 1800.8,1680.1 1797.8,1680.4 1794.8,1680.8 1791.8,1681.1 1788.8,1681.4 1785.9,1681.8 1782.9,1682.1 1779.9,1682.4 1776.9,1682.8 1773.9,1683.1 1770.9,1683.4 1767.9,1683.7 1764.9,1684.1 1761.9,1684.4 1758.9,1684.7 1756.0,1685.0 1753.0,1685.4 1750.0,1685.7 1747.0,1686.0 1744.0,1686.3 1741.0,1686.6 1738.0,1686.9 1735.0,1687.3 1732.0,1687.6 1729.1,1687.9 1726.1,1688.2 1723.1,1688.5 1720.1,1688.8 1717.1,1689.1 1714.1,1689.4 1711.1,1689.7 1708.1,1690.0 1705.2,1690.3 1702.2,1690.6 1699.2,1690.9 1696.2,1691.2 1693.2,1691.5 1690.2,1691.7 1687.2,1692.0 1684.2,1692.3 1681.3,1692.6 1678.3,1692.9 1675.3,1693.2 1672.3,1693.4 1669.3,1693.7 1666.3,1694.0 1663.3,1694.3 1660.4,1694.5 1657.4,1694.8 1654.4,1695.1 1651.4,1695.3 1648.4,1695.6 1645.4,1695.8 1642.4,1696.1 1639.4,1696.4 1636.5,1696.6 1633.5,1696.9 1630.5,1697.1 1627.5,1697.4 1624.5,1697.6 1621.5,1697.8 1618.5,1698.1 1615.6,1698.3 1612.6,1698.5 1609.6,1698.8 1606.6,1699.0 1603.6,1699.2 1600.6,1699.5 1597.6,1699.7 1594.7,1699.9 1591.7,1700.1 1588.7,1700.3 1585.7,1700.6 1582.7,1700.8 1579.7,1701.0 1576.7,1701.2 1573.8,1701.4 1570.8,1701.6 1567.8,1701.8 1564.8,1702.0 1561.8,1702.2 1558.8,1702.4 1555.8,1702.5 1552.9,1702.7 1549.9,1702.9 1546.9,1703.1 1543.9,1703.3 1540.9,1703.4 1537.9,1703.6 1535.0,1703.8 1532.0,1703.9 1529.0,1704.1 1526.0,1704.3 1523.0,1704.4 1520.0,1704.6 1517.0,1704.7 1514.1,1704.9 1511.1,1705.0 1508.1,1705.2 1505.1,1705.3 1502.1,1705.4 1499.1,1705.6 1496.1,1705.7 1493.2,1705.8 1490.2,1705.9 1487.2,1706.1 1484.2,1706.2 1481.2,1706.3 1478.2,1706.4 1475.2,1706.5 1472.3,1706.6 1469.3,1706.7 1466.3,1706.8 1463.3,1706.9 1460.3,1707.0 1457.3,1707.1 1454.3,1707.1 1451.4,1707.2 1448.4,1707.3 1445.4,1707.4 1442.4,1707.4 1439.4,1707.5 1436.4,1707.6 1433.4,1707.6 1430.5,1707.7 1427.5,1707.7 1424.5,1707.8 1421.5,1707.8 1418.5,1707.8 1415.5,1707.9 1412.5,1707.9 1409.6,1707.9 1406.6,1708.0 1403.6,1708.0 1400.6,1708.0 1397.6,1708.0 1394.6,1708.0 1391.6,1708.0 1388.6,1708.0 1385.7,1708.0 1382.7,1708.0 1379.7,1708.0 1376.7,1708.0 1373.7,1708.0 1370.7,1707.9 1367.7,1707.9 1364.7,1707.9 1361.8,1707.9 1358.8,1707.8 1355.8,1707.8 1352.8,1707.7 1349.8,1707.7 1346.8,1707.7 1343.8,1707.6 1340.8,1707.5 1337.9,1707.5 1334.9,1707.4 1331.9,1707.4 1328.9,1707.3 1325.9,1707.2 1322.9,1707.1 1319.9,1707.1 1316.9,1707.0 1313.9,1706.9 1311.0,1706.8 1308.0,1706.7 1305.0,1706.6 1302.0,1706.5 1299.0,1706.4 1296.0,1706.3 1293.0,1706.2 1290.0,1706.1 1287.0,1706.0 1284.1,1705.9 1281.1,1705.7 1278.1,1705.6 1275.1,1705.5 1272.1,1705.4 1269.1,1705.2 1266.1,1705.1 1263.1,1705.0 1260.1,1704.8 1257.2,1704.7 1254.2,1704.5 1251.2,1704.4 1248.2,1704.2 1245.2,1704.1 1242.2,1703.9 1239.2,1703.8 1236.2,1703.6 1233.2,1703.4 1230.2,1703.3 1227.3,1703.1 1224.3,1702.9 1221.3,1702.8 1218.3,1702.6 1215.3,1702.4 1212.3,1702.2 1209.3,1702.0 1206.3,1701.9 1203.3,1701.7 1200.3,1701.5 1197.3,1701.3 1194.4,1701.1 1191.4,1700.9 1188.4,1700.7 1185.4,1700.5 1182.4,1700.3 1179.4,1700.1 1176.4,1699.9 1173.4,1699.7 1170.4,1699.4 1167.4,1699.2 1164.4,1699.0 1161.4,1698.8 1158.5,1698.6 1155.5,1698.3 1152.5,1698.1 1149.5,1697.9 1146.5,1697.7 1143.5,1697.4 1140.5,1697.2 1137.5,1697.0 1134.5,1696.7 1131.5,1696.5 1128.5,1696.2 1125.5,1696.0 1122.5,1695.7 1119.6,1695.5 1116.6,1695.3 1113.6,1695.0 1110.6,1694.7 1107.6,1694.5 1104.6,1694.2 1101.6,1694.0 1098.6,1693.7 1095.6,1693.5 1092.6,1693.2 1089.6,1692.9 1086.6,1692.7 1083.6,1692.4 1080.6,1692.1 1077.6,1691.9 1074.7,1691.6 1071.7,1691.3 1068.7,1691.1 1065.7,1690.8 1062.7,1690.5 1059.7,1690.2 1056.7,1689.9 1053.7,1689.7 1050.7,1689.4 1047.7,1689.1 1044.7,1688.8 1041.7,1688.5 1038.7,1688.2 1035.7,1688.0 1032.7,1687.7 1029.7,1687.4 1026.7,1687.1 1023.7,1686.8 1020.7,1686.5 1017.8,1686.2 1014.8,1685.9 1011.8,1685.6 1008.8,1685.3 1005.8,1685.0 1002.8,1684.7 999.8,1684.4 996.8,1684.1 993.8,1683.8 990.8,1683.5 987.8,1683.2 984.8,1682.9 981.8,1682.6 978.8,1682.3 975.8,1682.0 972.8,1681.7 969.8,1681.4 966.8,1681.1 963.8,1680.7 960.8,1680.4 957.8,1680.1 954.8,1679.8 951.8,1679.5 948.8,1679.2 945.8,1678.9 942.8,1678.6 939.8,1678.2 936.8,1677.9 933.9,1677.6 930.9,1677.3 927.9,1677.0 924.9,1676.7 921.9,1676.4 918.9,1676.0 915.9,1675.7 912.9,1675.4 909.9,1675.1 906.9,1674.8 903.9,1674.5 900.9,1674.1 897.9,1673.8 894.9,1673.5 891.9,1673.2 888.9,1672.9 885.9,1672.5 882.9,1672.2 879.9,1671.9 876.9,1671.6 873.9,1671.3 870.9,1670.9 867.9,1670.6 864.9,1670.3 861.9,1670.0 858.9,1669.7 855.9,1669.4 852.9,1669.0 849.9,1668.7 846.9,1668.4 843.9,1668.1 840.9,1667.8 837.9,1667.4 834.9,1667.1 831.9,1666.8 828.9,1666.5 825.9,1666.2 822.9,1665.9 819.9,1665.5 816.9,1665.2 813.9,1664.9 810.9,1664.6 807.9,1664.3 804.9,1664.0 801.9,1663.7 798.9,1663.4 795.9,1663.0 792.9,1662.7 789.9,1662.4 786.9,1662.1 783.9,1661.8 780.9,1661.5 777.9,1661.2 774.9,1660.9 771.9,1660.6 768.9,1660.3 765.9,1660.0 762.9,1659.7 759.9,1659.4 756.9,1659.1 753.9,1658.8 750.9,1658.5 747.9,1658.2 744.9,1657.9 741.9,1657.6 738.9,1657.3 735.9,1657.0 732.8,1656.7 729.8,1656.4 726.8,1656.1 723.8,1655.8 720.8,1655.5 717.8,1655.2 714.8,1654.9 711.8,1654.6 708.8,1654.4 705.8,1654.1 702.8,1653.8 699.8,1653.5 696.8,1653.2 693.8,1653.0 690.8,1652.7 687.8,1652.4 684.8,1652.1 681.8,1651.9 678.8,1651.6 675.8,1651.3 672.8,1651.0 669.8,1650.8 666.8,1650.5 663.8,1650.2 660.8,1650.0 657.8,1649.7 654.7,1649.5 651.7,1649.2 648.7,1648.9 645.7,1648.7 642.7,1648.4 639.7,1648.2 636.7,1647.9 633.7,1647.7 630.7,1647.4 627.7,1647.2 624.7,1646.9 621.7,1646.7 618.7,1646.5 615.7,1646.2 612.7,1646.0 609.7,1645.8 606.7,1645.5 603.7,1645.3 600.6,1645.1 597.6,1644.8 594.6,1644.6 591.6,1644.4 588.6,1644.2 585.6,1643.9 582.6,1643.7 579.6,1643.5 576.6,1643.2 573.6,1642.9 570.6,1642.7 567.6,1642.4 564.7,1642.1 561.7,1641.8 558.7,1641.4 555.7,1641.1 552.8,1640.7 549.8,1640.3 546.9,1639.8 543.9,1639.4 541.0,1638.9 538.1,1638.4 535.1,1637.8 532.2,1637.3 529.3,1636.6 526.4,1636.0 523.5,1635.3 520.7,1634.6 517.8,1633.8 514.9,1633.0 512.1,1632.1 509.3,1631.2 506.5,1630.2 503.6,1629.2 500.9,1628.2 498.1,1627.1 495.3,1625.9 492.6,1624.6 489.9,1623.3 487.2,1622.0 484.7,1620.5 482.1,1619.0 479.7,1617.4 477.3,1615.7 475.0,1614.0 472.9,1612.1 470.8,1610.1 468.9,1608.1 467.0,1605.9 465.3,1603.7 463.6,1601.3 462.1,1598.9 460.6,1596.4 459.3,1593.9 458.0,1591.3 456.7,1588.6 455.6,1585.9 454.5,1583.1 453.4,1580.3 452.5,1577.5 451.5,1574.6 450.6,1571.7 449.7,1568.7 448.9,1565.8 448.1,1562.8 447.3,1559.9 446.5,1556.9 445.8,1554.0 445.0,1551.0 444.3,1548.1 443.5,1545.1 442.8,1542.1 442.1,1539.2 441.4,1536.2 440.8,1533.2 440.1,1530.3 439.5,1527.3 438.8,1524.3 438.2,1521.4 437.6,1518.4 437.0,1515.4 436.4,1512.5 435.9,1509.5 435.3,1506.5 434.8,1503.5 434.2,1500.6 433.7,1497.6 433.2,1494.6 432.7,1491.7 432.2,1488.7 431.7,1485.7 431.3,1482.7 430.8,1479.8 430.4,1476.8 429.9,1473.8 429.5,1470.8 429.1,1467.8 428.7,1464.9 428.3,1461.9 427.9,1458.9 427.5,1455.9 427.2,1452.9 426.8,1450.0 426.5,1447.0 426.1,1444.0 425.8,1441.0 425.5,1438.0 425.2,1435.0 424.9,1432.1 424.6,1429.1 424.3,1426.1 424.0,1423.1 423.7,1420.1 423.5,1417.1 423.2,1414.1 423.0,1411.1 422.8,1408.2 422.5,1405.2 422.3,1402.2 422.1,1399.2 421.9,1396.2 421.7,1393.2 421.5,1390.2 421.3,1387.2 421.1,1384.2 421.0,1381.2 420.8,1378.2 420.6,1375.2 420.5,1372.2 420.3,1369.2 420.2,1366.3 420.1,1363.3 419.9,1360.3 419.8,1357.3 419.7,1354.3 419.6,1351.3 419.5,1348.3 419.4,1345.3 419.3,1342.3 419.2,1339.3 419.1,1336.3 419.0,1333.3 418.9,1330.3 418.8,1327.3 418.8,1324.3 418.7,1321.3 418.6,1318.3 418.6,1315.3 418.5,1312.3 418.4,1309.3 418.4,1306.3 418.3,1303.3 418.3,1300.3 418.3,1297.3 418.2,1294.3 418.2,1291.2 418.1,1288.2 418.1,1285.2 418.1,1282.2 418.1,1279.2 418.0,1276.2 418.0,1273.2 418.0,1270.2 418.0,1267.2 418.0,1264.2 418.0,1261.2 418.0,1258.2 418.0,1255.2 418.0,1252.2 418.0,1249.2 418.0,1246.2 418.0,1243.2 418.0,1240.2 418.0,1237.1 418.1,1234.1 418.1,1231.1 418.1,1228.1 418.2,1225.1 418.2,1222.1 418.2,1219.1 418.3,1216.1 418.3,1213.1 418.4,1210.1 418.4,1207.1 418.5,1204.1 418.5,1201.1 418.6,1198.1 418.7,1195.0 418.7,1192.0 418.8,1189.0 418.9,1186.0 419.0,1183.0 419.1,1180.0 419.2,1177.0 419.3,1174.0 419.4,1171.0 419.5,1168.0 419.6,1165.0 419.7,1162.0 419.8,1159.0 419.9,1156.0 420.0,1153.0 420.1,1150.0 420.3,1146.9 420.4,1143.9 420.5,1140.9 420.7,1137.9 420.8,1134.9 421.0,1131.9 421.1,1128.9 421.3,1125.9 421.4,1122.9 421.6,1119.9 421.8,1116.9 422.0,1113.9 422.1,1110.9 422.3,1107.9 422.5,1104.9 422.7,1101.9 422.9,1098.9 423.1,1095.9 423.3,1092.9 423.5,1089.9 423.7,1086.9 423.9,1083.9 424.1,1080.9 424.4,1077.9 424.6,1074.9 424.8,1071.9 425.1,1068.9 425.3,1065.9 425.6,1062.9 425.8,1059.9 426.1,1057.0 426.3,1054.0 426.6,1051.0 426.9,1048.0 427.1,1045.0 427.4,1042.0 427.7,1039.0 428.0,1036.0 428.3,1033.0 428.6,1030.0 428.9,1027.0 429.2,1024.1 429.5,1021.1 429.8,1018.1 430.2,1015.1 430.5,1012.1 430.8,1009.1 431.2,1006.1 431.5,1003.2 431.8,1000.2 432.2,997.2 432.6,994.2 432.9,991.2 433.3,988.3 433.7,985.3 434.0,982.3 434.4,979.3 434.8,976.3 435.2,973.4 435.6,970.4 436.0,967.4 436.4,964.5 436.8,961.5 437.2,958.5 437.7,955.5 438.1,952.6 438.5,949.6 439.0,946.6 439.4,943.7 439.9,940.7 440.3,937.7 440.8,934.8 441.3,931.8 441.7,928.8 442.2,925.9 442.7,922.9 443.2,920.0 443.7,917.0 444.2,914.0 444.7,911.1 445.2,908.1 445.7,905.2 446.3,902.2 446.8,899.3 447.3,896.3 447.9,893.4 448.4,890.4 449.0,887.5 449.5,884.5 450.1,881.6 450.7,878.6 451.2,875.7 451.8,872.7 452.4,869.8 453.0,866.9 453.6,863.9 454.2,861.0 454.8,858.1 455.4,855.1 456.1,852.2 456.7,849.3 457.3,846.3 458.0,843.4 458.6,840.5 459.3,837.5 459.9,834.6 460.6,831.7 461.3,828.8 461.9,825.8 462.6,822.9 463.3,820.0 464.0,817.1 464.7,814.2 465.4,811.3 466.1,808.3 466.9,805.4 467.6,802.5 468.3,799.6 469.1,796.7 469.8,793.8 470.6,790.9 471.3,788.0 472.1,785.1 472.9,782.2 473.6,779.3 474.4,776.4 475.2,773.5 476.0,770.6 476.8,767.8 477.6,764.9 478.5,762.0 479.3,759.1 480.1,756.2 480.9,753.3 481.8,750.5 482.6,747.6 483.5,744.7 484.4,741.8 485.2,739.0 486.1,736.1 487.0,733.2 487.9,730.4 488.8,727.5 489.7,724.7 490.6,721.8 491.5,719.0 492.4,716.1 493.4,713.2 494.3,710.4 495.3,707.6 496.2,704.7 497.2,701.9 498.1,699.0 499.1,696.2 500.1,693.4 501.1,690.5 502.1,687.7 503.1,684.9 504.1,682.0 505.1,679.2 506.1,676.4 507.1,673.6 508.2,670.8 509.2,668.0 510.3,665.1 511.3,662.3 512.4,659.5 513.5,656.7 514.5,653.9 515.6,651.1 516.7,648.3 517.8,645.5 518.9,642.7 520.0,640.0 521.2,637.2 522.3,634.4 523.4,631.6 524.6,628.8 525.7,626.1 526.9,623.3 528.1,620.5 529.2,617.8 530.4,615.0 531.6,612.2 532.8,609.5 534.0,606.7 535.2,604.0 536.4,601.2 537.6,598.5 538.9,595.7 540.1,593.0 541.4,590.2 542.6,587.5 543.9,584.8 545.2,582.0 546.4,579.3 547.7,576.6 549.0,573.9 550.3,571.2 551.6,568.5 552.9,565.7 554.3,563.0 555.6,560.3 556.9,557.6 558.3,554.9 559.7,552.2 561.0,549.5 562.4,546.9 563.8,544.2 565.2,541.5 566.5,538.8 568.0,536.1 569.4,533.5 570.8,530.8 572.2,528.1 573.6,525.5 575.1,522.8 576.5,520.2 578.0,517.5 579.5,514.9 580.9,512.2 582.4,509.6 583.9,506.9 585.4,504.3 586.9,501.7 588.5,499.1 590.0,496.4 591.5,493.8 593.1,491.2 594.6,488.6 596.2,486.0 597.8,483.5 599.4,480.9 601.0,478.3 602.6,475.8 604.2,473.2 605.8,470.7 607.5,468.1 609.1,465.6 610.8,463.1 612.5,460.6 614.2,458.1 615.9,455.6 617.6,453.1 619.3,450.6 621.0,448.2 622.8,445.7 624.6,443.3 626.3,440.9 628.1,438.5 629.9,436.1 631.8,433.7 633.6,431.3 635.4,429.0 637.3,426.6 639.2,424.3 641.1,422.0 643.0,419.7 644.9,417.4 646.8,415.1 648.8,412.8 650.7,410.6 652.7,408.3 654.7,406.1 656.7,403.9 658.7,401.7 660.8,399.6 662.8,397.4 664.9,395.3 667.0,393.2 669.1,391.1 671.2,389.0 673.4,386.9 675.5,384.9 677.7,382.9 679.9,380.9 682.1,378.9 684.3,376.9 686.6,375.0 688.8,373.0 691.1,371.1 693.4,369.2 695.8,367.4 698.1,365.5 700.5,363.7 702.8,361.9 705.2,360.1 707.6,358.4 710.1,356.6 712.5,354.9 715.0,353.2 717.4,351.5 719.9,349.9 722.4,348.2 724.9,346.6 727.5,345.0 730.0,343.5 732.6,341.9 735.2,340.4 737.8,338.9 740.4,337.4 743.0,335.9 745.6,334.5 748.3,333.1 750.9,331.7 753.6,330.3 756.3,329.0 759.0,327.6 761.7,326.3 764.4,325.0 767.2,323.8 769.9,322.5 772.7,321.3 775.4,320.1 778.2,318.9 781.0,317.8 783.8,316.6 786.6,315.5 789.4,314.5 792.2,313.4 795.1,312.4 797.9,311.3 800.8,310.3 803.6,309.4 806.5,308.4 809.4,307.5 812.3,306.6 815.1,305.7 818.0,304.9 820.9,304.0 823.9,303.2 826.8,302.4 829.7,301.7 832.6,300.9 835.6,300.2 838.5,299.5 841.4,298.9 844.4,298.2 847.3,297.6 850.3,297.0 853.3,296.4 856.2,295.9 859.2,295.3 862.2,294.8 865.1,294.4 868.1,293.9 871.1,293.5 874.1,293.1 877.1,292.7 880.0,292.3 883.0,292.0 886.0,291.7 889.0,291.4 892.0,291.2 895.0,290.9 898.0,290.7 901.0,290.5 904.0,290.3 907.0,290.1 910.0,290.0 913.0,289.8 916.0,289.7 919.0,289.6 922.0,289.5 925.0,289.4 928.0,289.3 931.0,289.2 934.0,289.1 937.0,289.1 940.0,289.0 943.0,288.9 946.0,288.9 949.0,288.8 952.0,288.8 955.0,288.7 958.0,288.7 961.0,288.6 964.0,288.6 967.0,288.5 970.0,288.5 973.0,288.4 976.0,288.3 979.0,288.3 982.0,288.2 985.0,288.1 988.0,288.0 991.0,287.8 994.0,287.7 997.0,287.6 1000.0,287.4Z" fill="none" stroke="#8a2a14" stroke-width="1.5"/>
  <path d="M1371.0,287.5L1371.3,297.6 1371.6,308.0 1372.0,318.4 1372.3,329.0 1372.6,339.8 1373.0,350.7 1373.3,361.7 1373.7,372.8 1374.0,384.0 1374.4,395.3 1374.7,406.6 1375.1,418.0 1375.4,429.5 1375.8,441.0 1376.1,452.5 1376.5,464.0 1376.9,475.5 1377.2,487.1 1377.6,498.6 1377.9,510.1 1378.3,521.5 1378.7,532.9 1379.0,544.2 1379.4,555.5 1379.7,566.6 1380.1,577.7 1380.4,588.7 1380.7,599.5 1381.1,610.2 1381.4,620.8 1381.7,631.2 1382.0,641.5 1382.4,651.5 1382.7,661.4 1383.0,671.1 1383.3,680.6 1383.6,689.9 1383.8,698.9 1384.1,707.7 1384.4,716.3 1384.6,724.6 1384.9,732.6 1385.1,740.3 1385.3,747.7 1385.5,754.8 1385.7,761.6 1385.9,768.1 1386.1,774.2 1386.3,780.0 1387.3,812.5 1387.2,814.1 1386.9,804.9 1386.7,805.3 1387.3,835.6 1387.4,841.5 1387.6,847.7 1387.7,854.3 1387.9,861.3 1388.1,868.7 1388.3,876.4 1388.5,884.4 1388.7,892.8 1388.9,901.4 1389.2,910.3 1389.4,919.5 1389.6,929.0 1389.9,938.6 1390.1,948.6 1390.4,958.7 1390.6,969.0 1390.9,979.5 1391.2,990.2 1391.5,1001.0 1391.7,1012.0 1392.0,1023.1 1392.3,1034.3 1392.6,1045.6 1392.9,1057.0 1393.2,1068.4 1393.4,1080.0 1393.7,1091.5 1394.0,1103.1 1394.3,1114.7 1394.6,1126.3 1394.9,1137.9 1395.1,1149.4 1395.4,1160.9 1395.7,1172.4 1396.0,1183.8 1396.2,1195.0 1396.5,1206.2 1396.7,1217.3 1397.0,1228.2 1397.2,1239.0 1397.4,1249.7 1397.7,1260.1 1397.9,1270.4 1398.1,1280.5 1398.3,1290.4 1398.5,1300.0 1398.7,1310.6 1398.9,1321.2 1399.1,1331.8 1399.3,1342.2 1399.5,1352.6 1399.7,1363.0 1399.8,1373.3 1400.0,1383.6 1400.2,1393.8 1400.3,1404.0 1400.5,1414.1 1400.7,1424.2 1400.8,1434.3 1401.0,1444.3 1401.1,1454.3 1401.3,1464.3 1401.4,1474.2 1401.5,1484.1 1401.7,1494.0 1401.8,1503.9 1401.9,1513.8 1402.1,1523.6 1402.2,1533.4 1402.3,1543.3 1402.5,1553.1 1402.6,1562.9 1402.7,1572.7 1402.8,1582.5 1403.0,1592.3 1403.1,1602.1 1403.2,1612.0 1403.4,1621.8 1403.5,1631.6 1403.6,1641.5 1403.8,1651.3 1403.9,1661.2 1404.0,1671.1 1404.2,1681.1 1404.3,1691.0 1404.5,1701.0 1404.6,1711.0" fill="none" stroke="#6a2a1c" stroke-width="2.2"/>
 </g>
 <g fill="none" stroke="#0a1530" stroke-width="2.4">
  <ellipse cx="626.5" cy="1088.5" rx="58.6" ry="22.3"/><ellipse cx="581.2" cy="1177.8" rx="61.6" ry="24.1"/><path d="M613.1,1111.4L592.9,1153.7" stroke-width="1.8"/>
  <ellipse cx="2157.1" cy="1080.5" rx="58.6" ry="22"/><ellipse cx="2205.9" cy="1168.9" rx="61.6" ry="24.1"/><path d="M2171,1102.5L2191.9,1144.8" stroke-width="1.8"/>
  <ellipse cx="907" cy="1306.7" rx="64.4" ry="27.7"/><ellipse cx="878" cy="1421" rx="67.7" ry="31"/><path d="M899.3,1335.8L887,1389" stroke-width="1.8"/>
  <ellipse cx="1888" cy="1301.3" rx="64" ry="28"/><ellipse cx="1921.4" cy="1415.5" rx="67.7" ry="30.9"/><path d="M1896.8,1329.3L1912.8,1383.9" stroke-width="1.8"/>
 </g>
 <rect x="1364" y="1670" width="83" height="25" rx="12" fill="url(#plug)" stroke="#a03010" stroke-width="1.5"/>
</g>
</svg>
<div style="position:absolute;left:8px;top:1777px;font-size:21px;line-height:1;color:#333;white-space:nowrap;">Press F1 for help</div><div style="position:absolute;left:2068px;top:1769px;width:49px;height:40px;box-sizing:border-box;border-left:2px solid #8a8a90;border-top:2px solid #8a8a90"></div><div style="position:absolute;left:2077px;top:1778px;font-size:21px;line-height:1;color:#333;white-space:nowrap;">"</div><div style="position:absolute;left:2124px;top:1769px;width:140px;height:40px;box-sizing:border-box;border-left:2px solid #8a8a90;border-top:2px solid #8a8a90"></div><div style="position:absolute;left:2133px;top:1778px;font-size:21px;line-height:1;color:#333;white-space:nowrap;">X: 7.9"</div><div style="position:absolute;left:2270px;top:1769px;width:140px;height:40px;box-sizing:border-box;border-left:2px solid #8a8a90;border-top:2px solid #8a8a90"></div><div style="position:absolute;left:2279px;top:1778px;font-size:21px;line-height:1;color:#333;white-space:nowrap;">Y: 11.8"</div><div style="position:absolute;left:2417px;top:1769px;width:139px;height:40px;box-sizing:border-box;border-left:2px solid #8a8a90;border-top:2px solid #8a8a90"></div><div style="position:absolute;left:2426px;top:1778px;font-size:21px;line-height:1;color:#333;white-space:nowrap;">Z: 0.0"</div><div style="position:absolute;left:2563px;top:1769px;width:109px;height:40px;box-sizing:border-box;border-left:2px solid #8a8a90;border-top:2px solid #8a8a90"></div><div style="position:absolute;left:2679px;top:1769px;width:109px;height:40px;box-sizing:border-box;border-left:2px solid #8a8a90;border-top:2px solid #8a8a90"></div><div style="position:absolute;left:2795px;top:1769px;width:47px;height:40px;box-sizing:border-box;border-left:2px solid #8a8a90;border-top:2px solid #8a8a90"></div><svg style="position:absolute;left:2848px;top:1772px;" width="32" height="28" viewBox="0 0 32 28"><path d="M30,6 L6,28 M30,15 L16,28 M30,23 L24,28" stroke="#888" stroke-width="2.5"/></svg>
</body></html>
